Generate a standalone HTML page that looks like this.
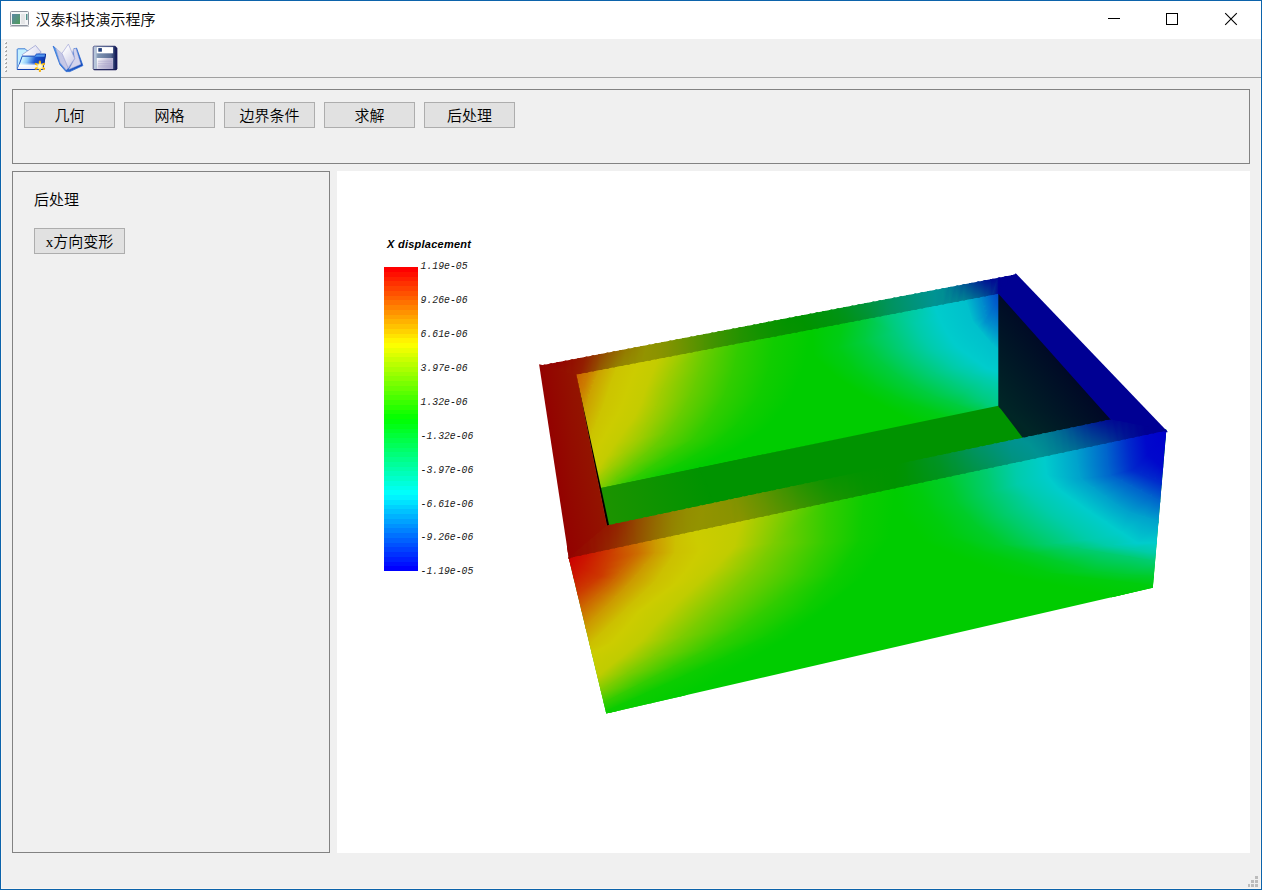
<!DOCTYPE html>
<html lang="zh-CN">
<head>
<meta charset="utf-8">
<title>汉泰科技演示程序</title>
<style>
html,body{margin:0;padding:0;}
body{width:1262px;height:890px;overflow:hidden;background:#f0f0f0;position:relative;
  font-family:"Liberation Serif","Noto Sans CJK SC",sans-serif;font-size:15px;color:#000;}
.abs{position:absolute;}
#win{position:absolute;left:0;top:0;width:1260px;height:888px;border:1px solid #0c63ab;background:#f0f0f0;box-shadow:inset 0 0 0 1px #faf6f1;}
#titlebar{position:absolute;left:1px;top:1px;width:1260px;height:38px;background:#fff;}
#title{position:absolute;left:34.5px;top:9px;height:20px;line-height:20px;font-size:15px;white-space:nowrap;
  font-family:"Liberation Sans","Noto Sans CJK SC",sans-serif;letter-spacing:0;font-weight:350;}
#toolbar{position:absolute;left:1px;top:39px;width:1260px;height:38px;background:#f0f0f0;border-bottom:1px solid #a0a0a0;}
.frame{position:absolute;border:1px solid #828282;box-sizing:border-box;background:#f0f0f0;}
.btn{position:absolute;box-sizing:border-box;border:1px solid #adadad;background:#e1e1e1;height:26px;width:91px;
  text-align:center;line-height:24px;padding-top:1px;font-size:15px;white-space:nowrap;font-weight:350;}
#view{position:absolute;left:337px;top:171px;width:913px;height:682px;background:#fff;overflow:hidden;}
.lbl{position:absolute;white-space:nowrap;font-size:15px;line-height:20px;font-weight:350;}
</style>
</head>
<body>
<div id="win"></div>
<div id="titlebar">
  <svg class="abs" style="left:9px;top:10px" width="20" height="17" viewBox="0 0 20 17">
    <defs><linearGradient id="ig" x1="0" y1="0" x2="1" y2="1"><stop offset="0" stop-color="#5b86a6"/><stop offset="1" stop-color="#4f9d5a"/></linearGradient></defs>
    <rect x="0.5" y="0.5" width="18" height="14" rx="1" fill="#f4f5f7" stroke="#8d939e"/>
    <rect x="2" y="3" width="8" height="10" fill="url(#ig)"/>
    <rect x="11" y="3" width="4" height="10" fill="#e4e5e7"/>
    <rect x="16" y="3" width="1.5" height="6" fill="#4f8f8a"/>
    <rect x="0" y="15" width="19" height="1" fill="#c9ccd2"/>
  </svg>
  <div id="title">汉泰科技演示程序</div>
  <svg class="abs" style="left:1100px;top:0" width="160" height="38" viewBox="1101 1 160 38" shape-rendering="crispEdges">
    <rect x="1108" y="18" width="12" height="1" fill="#000"/>
    <rect x="1166.5" y="13.5" width="11" height="11" fill="none" stroke="#000" stroke-width="1"/>
    <path d="M1225.2 13.2L1236.8 24.8M1236.8 13.2L1225.2 24.8" stroke="#000" stroke-width="1.1" fill="none" shape-rendering="geometricPrecision"/>
  </svg>
</div>
<div id="toolbar">
  <svg class="abs" style="left:0;top:0" width="140" height="38" viewBox="1 39 140 38">
    <defs>
      <linearGradient id="fo1" x1="22" y1="58" x2="44" y2="66" gradientUnits="userSpaceOnUse">
        <stop offset="0" stop-color="#d8fbff"/><stop offset="0.25" stop-color="#8cc8f8"/><stop offset="0.55" stop-color="#1c56d0"/><stop offset="1" stop-color="#0a30a8"/>
      </linearGradient>
      <linearGradient id="fo2" x1="0" y1="54" x2="0" y2="70" gradientUnits="userSpaceOnUse">
        <stop offset="0" stop-color="#fff" stop-opacity="0"/><stop offset="0.55" stop-color="#fff" stop-opacity="0"/><stop offset="0.72" stop-color="#fff" stop-opacity="0.95"/><stop offset="1" stop-color="#e8e8f4" stop-opacity="1"/>
      </linearGradient>
      <linearGradient id="fo3" x1="24" y1="50" x2="40" y2="54" gradientUnits="userSpaceOnUse">
        <stop offset="0" stop-color="#ffffff"/><stop offset="1" stop-color="#dcdcf0"/>
      </linearGradient>
      <radialGradient id="st" cx="39.9" cy="66.3" r="5.4" gradientUnits="userSpaceOnUse">
        <stop offset="0" stop-color="#ffffff"/><stop offset="0.35" stop-color="#fff0a0"/><stop offset="0.7" stop-color="#ffc818"/><stop offset="1" stop-color="#f0a000"/>
      </radialGradient>
      <linearGradient id="bk1" x1="53" y1="48" x2="83" y2="68" gradientUnits="userSpaceOnUse">
        <stop offset="0" stop-color="#4fa0ee"/><stop offset="0.5" stop-color="#3f7fdc"/><stop offset="1" stop-color="#0a3cb0"/>
      </linearGradient>
      <linearGradient id="bk2" x1="62" y1="50" x2="75" y2="62" gradientUnits="userSpaceOnUse">
        <stop offset="0" stop-color="#ffffff"/><stop offset="1" stop-color="#cfcfe8"/>
      </linearGradient>
      <linearGradient id="fl1" x1="93" y1="0" x2="117" y2="0" gradientUnits="userSpaceOnUse">
        <stop offset="0" stop-color="#8c98b8"/><stop offset="0.08" stop-color="#c4d2e4"/><stop offset="0.2" stop-color="#8096b4"/><stop offset="0.75" stop-color="#5a6c94"/><stop offset="0.92" stop-color="#1c2860"/><stop offset="1" stop-color="#0c0c50"/>
      </linearGradient>
      <linearGradient id="fl2" x1="97" y1="58" x2="113" y2="69" gradientUnits="userSpaceOnUse">
        <stop offset="0" stop-color="#ffffff"/><stop offset="0.5" stop-color="#c8c4dc"/><stop offset="1" stop-color="#a8a0c8"/>
      </linearGradient>
    </defs>
    <!-- handle -->
    <g shape-rendering="crispEdges">
      <rect x="4" y="41" width="3" height="3" fill="#f9f9f9"/><path d="M6 42h1v2h-2v-1h1z" fill="#ababab"/>
      <rect x="4" y="45" width="3" height="3" fill="#f9f9f9"/><path d="M6 46h1v2h-2v-1h1z" fill="#ababab"/>
      <rect x="4" y="49" width="3" height="3" fill="#f9f9f9"/><path d="M6 50h1v2h-2v-1h1z" fill="#ababab"/>
      <rect x="4" y="53" width="3" height="3" fill="#f9f9f9"/><path d="M6 54h1v2h-2v-1h1z" fill="#ababab"/>
      <rect x="4" y="57" width="3" height="3" fill="#f9f9f9"/><path d="M6 58h1v2h-2v-1h1z" fill="#ababab"/>
      <rect x="4" y="61" width="3" height="3" fill="#f9f9f9"/><path d="M6 62h1v2h-2v-1h1z" fill="#ababab"/>
      <rect x="4" y="65" width="3" height="3" fill="#f9f9f9"/><path d="M6 66h1v2h-2v-1h1z" fill="#ababab"/>
      <rect x="4" y="69" width="3" height="3" fill="#f9f9f9"/><path d="M6 70h1v2h-2v-1h1z" fill="#ababab"/>
    </g>
    <!-- new folder icon -->
    <path d="M17.2 49.6Q17.2 48.8 18 48.8H25.2L27.2 50.8H35V69.4H17.2Z" fill="#c4efff" stroke="#2f6fd0" stroke-width="0.9" stroke-linejoin="round"/>
    <path d="M22.2 54.7L35.5 45.4L41.2 52.2L35.2 56.2H23Z" fill="url(#fo3)" stroke="#9aa0d0" stroke-width="0.8" stroke-linejoin="round"/>
    <path d="M22.2 56.2H34.4L36.6 54H45.6L42.8 69.5H17.4Z" fill="url(#fo1)" stroke="#1c50c0" stroke-width="1" stroke-linejoin="round"/>
    <path d="M22.2 56.2H34.4L36.6 54H45.6L42.8 69.5H17.4Z" fill="url(#fo2)"/>
    <path d="M36.9 54.5H45.4L45 56.8H34.9Z" fill="#5a9ff2" opacity="0.9"/>
    <path d="M17.4 69.5H42.8" stroke="#1040b0" stroke-width="1"/>
    <path d="M45.6 54L42.8 69.5" stroke="#0a2c98" stroke-width="1"/>
    <g stroke="url(#st)" stroke-width="2.2" stroke-linecap="round">
      <path d="M39.9 61.6V71"/><path d="M35.8 63.9L44 68.7"/><path d="M35.8 68.7L44 63.9"/>
    </g>
    <circle cx="39.9" cy="66.3" r="1.9" fill="#fffbe0"/>
    <!-- book icon -->
    <path d="M53.1 46.1L60 64.8L66 71.6H69.8L82.9 65.6L76.6 48.2L73.8 48.8L69 69L55.6 48.2Z" fill="url(#bk1)" stroke="#2a6ad4" stroke-width="0.8" stroke-linejoin="round"/>
    <path d="M55.7 48.1L61.8 53.3L68.2 67.9L66.2 70L60.2 62.8Z" fill="#c6c8e6" stroke="#a8acd8" stroke-width="0.5"/>
    <path d="M73.1 49.3L75.9 48.5L80.8 64.3L69 69.2L74.7 58.6Z" fill="#d4d4ec" stroke="#a8acd8" stroke-width="0.5"/>
    <path d="M68.4 44.1L74.7 58.6L68.2 67.9L62 53.3Z" fill="url(#bk2)" stroke="#a4a8d8" stroke-width="0.7" stroke-linejoin="round"/>
    <!-- floppy icon -->
    <path d="M94 46.1H115.2L117.1 48V69L116 69.9H94.2L93.1 68.8V47Z" fill="url(#fl1)" stroke="#30306c" stroke-width="0.6"/>
    <rect x="96.7" y="47.1" width="16.4" height="6.2" fill="#ffffff"/>
    <rect x="98.3" y="48.1" width="3.6" height="3.6" fill="#24407c"/>
    <rect x="96.7" y="58" width="16.4" height="11" fill="url(#fl2)"/>
    <path d="M98 61.2H112M98 63.3H112M98 65.2H112M98 66.9H112" stroke="#a098c4" stroke-width="0.5"/>
    <path d="M93.6 69.6H116.6" stroke="#181850" stroke-width="0.9"/>
  </svg>
</div>
<div class="frame" style="left:12px;top:89px;width:1238px;height:75px;"></div>
<div class="btn" style="left:24px;top:102px;">几何</div>
<div class="btn" style="left:124px;top:102px;">网格</div>
<div class="btn" style="left:224px;top:102px;">边界条件</div>
<div class="btn" style="left:324px;top:102px;">求解</div>
<div class="btn" style="left:424px;top:102px;">后处理</div>
<div class="frame" style="left:12px;top:171px;width:318px;height:682px;"></div>
<div class="lbl" style="left:34px;top:190px;">后处理</div>
<div class="btn" style="left:34px;top:228px;">x方向变形</div>
<svg class="abs" style="left:1246px;top:874px" width="14" height="14" viewBox="1246 874 14 14" shape-rendering="crispEdges">
  <g fill="#bcbcbc">
    <rect x="1255" y="876" width="3" height="3"/>
    <rect x="1251" y="880" width="3" height="3"/><rect x="1255" y="880" width="3" height="3"/>
    <rect x="1248" y="884" width="2" height="3"/><rect x="1251" y="884" width="3" height="3"/><rect x="1255" y="884" width="3" height="3"/>
  </g>
</svg>
<div id="view">
<svg class="abs" style="left:0;top:0" width="913" height="682" viewBox="337 171 913 682">
<defs>
<clipPath id="c1"><polygon points="574.9,373.6 999.5,292.2 999.5,406.8 599.8,489.5"/></clipPath>
<linearGradient id="g2" gradientUnits="userSpaceOnUse" x1="587.19" y1="374.81" x2="577.20" y2="371.65"><stop offset="0.000" stop-color="#cc7a00"/><stop offset="1.000" stop-color="#cc6200"/></linearGradient>
<linearGradient id="g3" gradientUnits="userSpaceOnUse" x1="586.39" y1="377.36" x2="576.40" y2="374.19"><stop offset="0.000" stop-color="#cc7a00"/><stop offset="1.000" stop-color="#cc6200"/></linearGradient>
<linearGradient id="g4" gradientUnits="userSpaceOnUse" x1="585.58" y1="379.90" x2="575.59" y2="376.74"><stop offset="0.000" stop-color="#cc7a00"/><stop offset="1.000" stop-color="#cc6200"/></linearGradient>
<linearGradient id="g5" gradientUnits="userSpaceOnUse" x1="584.77" y1="382.45" x2="574.78" y2="379.29"><stop offset="0.000" stop-color="#cc7a00"/><stop offset="1.000" stop-color="#cc6200"/></linearGradient>
<linearGradient id="g6" gradientUnits="userSpaceOnUse" x1="583.95" y1="384.99" x2="573.95" y2="381.74"><stop offset="0.000" stop-color="#cc7a00"/><stop offset="1.000" stop-color="#cc6200"/></linearGradient>
<linearGradient id="g7" gradientUnits="userSpaceOnUse" x1="582.65" y1="387.33" x2="572.35" y2="381.61"><stop offset="0.000" stop-color="#cc7a00"/><stop offset="1.000" stop-color="#cc6200"/></linearGradient>
<linearGradient id="g8" gradientUnits="userSpaceOnUse" x1="581.36" y1="389.66" x2="571.06" y2="383.95"><stop offset="0.000" stop-color="#cc7a00"/><stop offset="1.000" stop-color="#cc6200"/></linearGradient>
<linearGradient id="g9" gradientUnits="userSpaceOnUse" x1="580.06" y1="392.00" x2="569.76" y2="386.28"><stop offset="0.000" stop-color="#cc7a00"/><stop offset="1.000" stop-color="#cc6200"/></linearGradient>
<linearGradient id="g10" gradientUnits="userSpaceOnUse" x1="600.00" y1="369.96" x2="589.75" y2="366.72"><stop offset="0.000" stop-color="#cca300"/><stop offset="1.000" stop-color="#cc7a00"/></linearGradient>
<linearGradient id="g11" gradientUnits="userSpaceOnUse" x1="597.87" y1="375.27" x2="588.52" y2="371.51"><stop offset="0.000" stop-color="#cca300"/><stop offset="1.000" stop-color="#cc7a00"/></linearGradient>
<linearGradient id="g12" gradientUnits="userSpaceOnUse" x1="597.87" y1="375.27" x2="588.03" y2="372.15"><stop offset="0.000" stop-color="#cca300"/><stop offset="1.000" stop-color="#cc7a00"/></linearGradient>
<linearGradient id="g13" gradientUnits="userSpaceOnUse" x1="595.74" y1="380.57" x2="586.57" y2="376.89"><stop offset="0.000" stop-color="#cca300"/><stop offset="1.000" stop-color="#cc7a00"/></linearGradient>
<linearGradient id="g14" gradientUnits="userSpaceOnUse" x1="595.74" y1="380.57" x2="586.31" y2="377.59"><stop offset="0.000" stop-color="#cca300"/><stop offset="1.000" stop-color="#cc7a00"/></linearGradient>
<linearGradient id="g15" gradientUnits="userSpaceOnUse" x1="593.66" y1="385.90" x2="584.62" y2="382.38"><stop offset="0.000" stop-color="#cca300"/><stop offset="1.000" stop-color="#cc7a00"/></linearGradient>
<linearGradient id="g16" gradientUnits="userSpaceOnUse" x1="593.66" y1="385.90" x2="584.59" y2="383.03"><stop offset="0.000" stop-color="#cca300"/><stop offset="1.000" stop-color="#cc7a00"/></linearGradient>
<linearGradient id="g17" gradientUnits="userSpaceOnUse" x1="591.85" y1="391.32" x2="582.82" y2="388.29"><stop offset="0.000" stop-color="#cca300"/><stop offset="1.000" stop-color="#cc7a00"/></linearGradient>
<linearGradient id="g18" gradientUnits="userSpaceOnUse" x1="591.85" y1="391.32" x2="582.84" y2="388.39"><stop offset="0.000" stop-color="#cca300"/><stop offset="1.000" stop-color="#cc7a00"/></linearGradient>
<linearGradient id="g19" gradientUnits="userSpaceOnUse" x1="590.03" y1="396.74" x2="581.02" y2="393.72"><stop offset="0.000" stop-color="#cca300"/><stop offset="1.000" stop-color="#cc7a00"/></linearGradient>
<linearGradient id="g20" gradientUnits="userSpaceOnUse" x1="590.03" y1="396.74" x2="580.40" y2="391.39"><stop offset="0.000" stop-color="#cca300"/><stop offset="1.000" stop-color="#cc7a00"/></linearGradient>
<linearGradient id="g21" gradientUnits="userSpaceOnUse" x1="588.21" y1="402.16" x2="578.74" y2="398.98"><stop offset="0.000" stop-color="#cca300"/><stop offset="1.000" stop-color="#cc7a00"/></linearGradient>
<linearGradient id="g22" gradientUnits="userSpaceOnUse" x1="588.21" y1="402.16" x2="577.67" y2="396.31"><stop offset="0.000" stop-color="#cca300"/><stop offset="1.000" stop-color="#cc7a00"/></linearGradient>
<linearGradient id="g23" gradientUnits="userSpaceOnUse" x1="586.39" y1="407.58" x2="576.46" y2="404.25"><stop offset="0.000" stop-color="#cca300"/><stop offset="1.000" stop-color="#cc7a00"/></linearGradient>
<linearGradient id="g24" gradientUnits="userSpaceOnUse" x1="586.39" y1="407.58" x2="574.94" y2="401.22"><stop offset="0.000" stop-color="#cca300"/><stop offset="1.000" stop-color="#cc7a00"/></linearGradient>
<linearGradient id="g25" gradientUnits="userSpaceOnUse" x1="584.57" y1="413.00" x2="574.18" y2="409.51"><stop offset="0.000" stop-color="#cca300"/><stop offset="1.000" stop-color="#cc7a00"/></linearGradient>
<linearGradient id="g26" gradientUnits="userSpaceOnUse" x1="618.00" y1="366.52" x2="603.69" y2="360.77"><stop offset="0.000" stop-color="#ccc400"/><stop offset="1.000" stop-color="#cca300"/></linearGradient>
<linearGradient id="g27" gradientUnits="userSpaceOnUse" x1="614.51" y1="375.69" x2="599.83" y2="370.10"><stop offset="0.000" stop-color="#ccc400"/><stop offset="1.000" stop-color="#cca300"/></linearGradient>
<linearGradient id="g28" gradientUnits="userSpaceOnUse" x1="614.51" y1="375.69" x2="600.03" y2="369.88"><stop offset="0.000" stop-color="#ccc400"/><stop offset="1.000" stop-color="#cca300"/></linearGradient>
<linearGradient id="g29" gradientUnits="userSpaceOnUse" x1="611.01" y1="384.87" x2="596.24" y2="379.24"><stop offset="0.000" stop-color="#ccc400"/><stop offset="1.000" stop-color="#cca300"/></linearGradient>
<linearGradient id="g30" gradientUnits="userSpaceOnUse" x1="611.01" y1="384.87" x2="596.30" y2="379.14"><stop offset="0.000" stop-color="#ccc400"/><stop offset="1.000" stop-color="#cca300"/></linearGradient>
<linearGradient id="g31" gradientUnits="userSpaceOnUse" x1="607.91" y1="394.18" x2="592.60" y2="389.08"><stop offset="0.000" stop-color="#ccc400"/><stop offset="1.000" stop-color="#cca300"/></linearGradient>
<linearGradient id="g32" gradientUnits="userSpaceOnUse" x1="607.91" y1="394.18" x2="592.61" y2="389.05"><stop offset="0.000" stop-color="#ccc400"/><stop offset="1.000" stop-color="#cca300"/></linearGradient>
<linearGradient id="g33" gradientUnits="userSpaceOnUse" x1="604.80" y1="403.49" x2="589.49" y2="398.39"><stop offset="0.000" stop-color="#ccc400"/><stop offset="1.000" stop-color="#cca300"/></linearGradient>
<linearGradient id="g34" gradientUnits="userSpaceOnUse" x1="604.80" y1="403.49" x2="589.48" y2="398.35"><stop offset="0.000" stop-color="#ccc400"/><stop offset="1.000" stop-color="#cca300"/></linearGradient>
<linearGradient id="g35" gradientUnits="userSpaceOnUse" x1="601.63" y1="412.79" x2="586.33" y2="407.57"><stop offset="0.000" stop-color="#ccc400"/><stop offset="1.000" stop-color="#cca300"/></linearGradient>
<linearGradient id="g36" gradientUnits="userSpaceOnUse" x1="601.63" y1="412.79" x2="586.36" y2="407.66"><stop offset="0.000" stop-color="#ccc400"/><stop offset="1.000" stop-color="#cca300"/></linearGradient>
<linearGradient id="g37" gradientUnits="userSpaceOnUse" x1="597.88" y1="421.86" x2="582.66" y2="415.56"><stop offset="0.000" stop-color="#ccc400"/><stop offset="1.000" stop-color="#cca300"/></linearGradient>
<linearGradient id="g38" gradientUnits="userSpaceOnUse" x1="597.88" y1="421.86" x2="583.25" y2="416.95"><stop offset="0.000" stop-color="#ccc400"/><stop offset="1.000" stop-color="#cca300"/></linearGradient>
<linearGradient id="g39" gradientUnits="userSpaceOnUse" x1="594.12" y1="430.93" x2="579.27" y2="424.78"><stop offset="0.000" stop-color="#ccc400"/><stop offset="1.000" stop-color="#cca300"/></linearGradient>
<linearGradient id="g40" gradientUnits="userSpaceOnUse" x1="594.12" y1="430.93" x2="580.13" y2="426.23"><stop offset="0.000" stop-color="#ccc400"/><stop offset="1.000" stop-color="#cca300"/></linearGradient>
<linearGradient id="g41" gradientUnits="userSpaceOnUse" x1="590.37" y1="440.00" x2="575.88" y2="434.00"><stop offset="0.000" stop-color="#ccc400"/><stop offset="1.000" stop-color="#cca300"/></linearGradient>
<linearGradient id="g42" gradientUnits="userSpaceOnUse" x1="658.00" y1="358.86" x2="625.61" y2="346.52"><stop offset="0.000" stop-color="#c4cc00"/><stop offset="0.500" stop-color="#cccc00"/><stop offset="1.000" stop-color="#ccc400"/></linearGradient>
<linearGradient id="g43" gradientUnits="userSpaceOnUse" x1="651.78" y1="373.59" x2="620.90" y2="360.55"><stop offset="0.000" stop-color="#c4cc00"/><stop offset="0.500" stop-color="#cccc00"/><stop offset="1.000" stop-color="#ccc400"/></linearGradient>
<linearGradient id="g44" gradientUnits="userSpaceOnUse" x1="651.78" y1="373.59" x2="619.92" y2="361.46"><stop offset="0.000" stop-color="#c4cc00"/><stop offset="0.500" stop-color="#cccc00"/><stop offset="1.000" stop-color="#ccc400"/></linearGradient>
<linearGradient id="g45" gradientUnits="userSpaceOnUse" x1="645.82" y1="388.43" x2="614.61" y2="375.91"><stop offset="0.000" stop-color="#c4cc00"/><stop offset="0.500" stop-color="#cccc00"/><stop offset="1.000" stop-color="#ccc400"/></linearGradient>
<linearGradient id="g46" gradientUnits="userSpaceOnUse" x1="645.82" y1="388.43" x2="613.43" y2="377.63"><stop offset="0.000" stop-color="#c4cc00"/><stop offset="0.500" stop-color="#cccc00"/><stop offset="1.000" stop-color="#ccc400"/></linearGradient>
<linearGradient id="g47" gradientUnits="userSpaceOnUse" x1="640.76" y1="403.61" x2="608.36" y2="392.81"><stop offset="0.000" stop-color="#c4cc00"/><stop offset="0.500" stop-color="#cccc00"/><stop offset="1.000" stop-color="#ccc400"/></linearGradient>
<linearGradient id="g48" gradientUnits="userSpaceOnUse" x1="640.76" y1="403.61" x2="608.36" y2="392.81"><stop offset="0.000" stop-color="#c4cc00"/><stop offset="0.500" stop-color="#cccc00"/><stop offset="1.000" stop-color="#ccc400"/></linearGradient>
<linearGradient id="g49" gradientUnits="userSpaceOnUse" x1="633.68" y1="417.73" x2="604.90" y2="403.30"><stop offset="0.000" stop-color="#c4cc00"/><stop offset="0.500" stop-color="#cccc00"/><stop offset="1.000" stop-color="#ccc400"/></linearGradient>
<linearGradient id="g50" gradientUnits="userSpaceOnUse" x1="633.68" y1="417.73" x2="603.46" y2="407.42"><stop offset="0.000" stop-color="#c4cc00"/><stop offset="0.500" stop-color="#cccc00"/><stop offset="1.000" stop-color="#ccc400"/></linearGradient>
<linearGradient id="g51" gradientUnits="userSpaceOnUse" x1="624.16" y1="430.58" x2="601.10" y2="413.50"><stop offset="0.000" stop-color="#c4cc00"/><stop offset="0.500" stop-color="#cccc00"/><stop offset="1.000" stop-color="#ccc400"/></linearGradient>
<linearGradient id="g52" gradientUnits="userSpaceOnUse" x1="624.16" y1="430.58" x2="598.64" y2="420.02"><stop offset="0.000" stop-color="#c4cc00"/><stop offset="0.500" stop-color="#cccc00"/><stop offset="1.000" stop-color="#ccc400"/></linearGradient>
<linearGradient id="g53" gradientUnits="userSpaceOnUse" x1="614.86" y1="443.59" x2="593.34" y2="428.21"><stop offset="0.000" stop-color="#c4cc00"/><stop offset="0.500" stop-color="#cccc00"/><stop offset="1.000" stop-color="#ccc400"/></linearGradient>
<linearGradient id="g54" gradientUnits="userSpaceOnUse" x1="614.86" y1="443.59" x2="592.68" y2="434.41"><stop offset="0.000" stop-color="#c4cc00"/><stop offset="0.500" stop-color="#cccc00"/><stop offset="1.000" stop-color="#ccc400"/></linearGradient>
<linearGradient id="g55" gradientUnits="userSpaceOnUse" x1="605.96" y1="456.89" x2="585.79" y2="443.39"><stop offset="0.000" stop-color="#c4cc00"/><stop offset="0.500" stop-color="#cccc00"/><stop offset="1.000" stop-color="#ccc400"/></linearGradient>
<linearGradient id="g56" gradientUnits="userSpaceOnUse" x1="605.96" y1="456.89" x2="586.68" y2="448.91"><stop offset="0.000" stop-color="#c4cc00"/><stop offset="0.500" stop-color="#cccc00"/><stop offset="1.000" stop-color="#ccc400"/></linearGradient>
<linearGradient id="g57" gradientUnits="userSpaceOnUse" x1="596.81" y1="470.00" x2="578.40" y2="457.15"><stop offset="0.000" stop-color="#c4cc00"/><stop offset="0.500" stop-color="#cccc00"/><stop offset="1.000" stop-color="#ccc400"/></linearGradient>
<linearGradient id="g58" gradientUnits="userSpaceOnUse" x1="680.00" y1="354.64" x2="662.84" y2="347.40"><stop offset="0.000" stop-color="#9fcc00"/><stop offset="1.000" stop-color="#c4cc00"/></linearGradient>
<linearGradient id="g59" gradientUnits="userSpaceOnUse" x1="671.62" y1="371.55" x2="656.50" y2="364.06"><stop offset="0.000" stop-color="#9fcc00"/><stop offset="1.000" stop-color="#c4cc00"/></linearGradient>
<linearGradient id="g60" gradientUnits="userSpaceOnUse" x1="671.62" y1="371.55" x2="655.23" y2="364.98"><stop offset="0.000" stop-color="#9fcc00"/><stop offset="1.000" stop-color="#c4cc00"/></linearGradient>
<linearGradient id="g61" gradientUnits="userSpaceOnUse" x1="663.74" y1="388.67" x2="648.86" y2="381.82"><stop offset="0.000" stop-color="#9fcc00"/><stop offset="1.000" stop-color="#c4cc00"/></linearGradient>
<linearGradient id="g62" gradientUnits="userSpaceOnUse" x1="663.74" y1="388.67" x2="647.54" y2="383.27"><stop offset="0.000" stop-color="#9fcc00"/><stop offset="1.000" stop-color="#c4cc00"/></linearGradient>
<linearGradient id="g63" gradientUnits="userSpaceOnUse" x1="657.78" y1="406.57" x2="641.58" y2="401.17"><stop offset="0.000" stop-color="#9fcc00"/><stop offset="1.000" stop-color="#c4cc00"/></linearGradient>
<linearGradient id="g64" gradientUnits="userSpaceOnUse" x1="657.78" y1="406.57" x2="643.00" y2="399.15"><stop offset="0.000" stop-color="#9fcc00"/><stop offset="1.000" stop-color="#c4cc00"/></linearGradient>
<linearGradient id="g65" gradientUnits="userSpaceOnUse" x1="648.94" y1="423.11" x2="634.83" y2="415.57"><stop offset="0.000" stop-color="#9fcc00"/><stop offset="1.000" stop-color="#c4cc00"/></linearGradient>
<linearGradient id="g66" gradientUnits="userSpaceOnUse" x1="648.94" y1="423.11" x2="636.51" y2="413.91"><stop offset="0.000" stop-color="#9fcc00"/><stop offset="1.000" stop-color="#c4cc00"/></linearGradient>
<linearGradient id="g67" gradientUnits="userSpaceOnUse" x1="638.85" y1="439.05" x2="624.54" y2="429.99"><stop offset="0.000" stop-color="#9fcc00"/><stop offset="1.000" stop-color="#c4cc00"/></linearGradient>
<linearGradient id="g68" gradientUnits="userSpaceOnUse" x1="638.85" y1="439.05" x2="625.12" y2="429.24"><stop offset="0.000" stop-color="#9fcc00"/><stop offset="1.000" stop-color="#c4cc00"/></linearGradient>
<linearGradient id="g69" gradientUnits="userSpaceOnUse" x1="625.48" y1="452.37" x2="615.80" y2="442.65"><stop offset="0.000" stop-color="#9fcc00"/><stop offset="1.000" stop-color="#c4cc00"/></linearGradient>
<linearGradient id="g70" gradientUnits="userSpaceOnUse" x1="625.48" y1="452.37" x2="614.09" y2="444.74"><stop offset="0.000" stop-color="#9fcc00"/><stop offset="1.000" stop-color="#c4cc00"/></linearGradient>
<linearGradient id="g71" gradientUnits="userSpaceOnUse" x1="612.12" y1="465.68" x2="604.65" y2="458.19"><stop offset="0.000" stop-color="#9fcc00"/><stop offset="1.000" stop-color="#c4cc00"/></linearGradient>
<linearGradient id="g72" gradientUnits="userSpaceOnUse" x1="612.12" y1="465.68" x2="603.85" y2="459.92"><stop offset="0.000" stop-color="#9fcc00"/><stop offset="1.000" stop-color="#c4cc00"/></linearGradient>
<linearGradient id="g73" gradientUnits="userSpaceOnUse" x1="598.75" y1="479.00" x2="593.28" y2="473.51"><stop offset="0.000" stop-color="#9fcc00"/><stop offset="1.000" stop-color="#c4cc00"/></linearGradient>
<linearGradient id="g74" gradientUnits="userSpaceOnUse" x1="707.00" y1="349.47" x2="687.38" y2="339.75"><stop offset="0.000" stop-color="#66cc00"/><stop offset="1.000" stop-color="#9fcc00"/></linearGradient>
<linearGradient id="g75" gradientUnits="userSpaceOnUse" x1="700.48" y1="371.48" x2="673.97" y2="363.62"><stop offset="0.000" stop-color="#66cc00"/><stop offset="1.000" stop-color="#9fcc00"/></linearGradient>
<linearGradient id="g76" gradientUnits="userSpaceOnUse" x1="700.48" y1="371.48" x2="676.69" y2="360.53"><stop offset="0.000" stop-color="#66cc00"/><stop offset="1.000" stop-color="#9fcc00"/></linearGradient>
<linearGradient id="g77" gradientUnits="userSpaceOnUse" x1="692.50" y1="392.90" x2="665.86" y2="382.98"><stop offset="0.000" stop-color="#66cc00"/><stop offset="1.000" stop-color="#9fcc00"/></linearGradient>
<linearGradient id="g78" gradientUnits="userSpaceOnUse" x1="692.50" y1="392.90" x2="665.35" y2="383.85"><stop offset="0.000" stop-color="#66cc00"/><stop offset="1.000" stop-color="#9fcc00"/></linearGradient>
<linearGradient id="g79" gradientUnits="userSpaceOnUse" x1="682.02" y1="413.30" x2="660.11" y2="402.04"><stop offset="0.000" stop-color="#66cc00"/><stop offset="1.000" stop-color="#9fcc00"/></linearGradient>
<linearGradient id="g80" gradientUnits="userSpaceOnUse" x1="682.02" y1="413.30" x2="660.36" y2="401.73"><stop offset="0.000" stop-color="#66cc00"/><stop offset="1.000" stop-color="#9fcc00"/></linearGradient>
<linearGradient id="g81" gradientUnits="userSpaceOnUse" x1="668.81" y1="432.06" x2="651.31" y2="419.75"><stop offset="0.000" stop-color="#66cc00"/><stop offset="1.000" stop-color="#9fcc00"/></linearGradient>
<linearGradient id="g82" gradientUnits="userSpaceOnUse" x1="668.81" y1="432.06" x2="650.58" y2="420.52"><stop offset="0.000" stop-color="#66cc00"/><stop offset="1.000" stop-color="#9fcc00"/></linearGradient>
<linearGradient id="g83" gradientUnits="userSpaceOnUse" x1="652.83" y1="448.29" x2="641.12" y2="436.75"><stop offset="0.000" stop-color="#66cc00"/><stop offset="1.000" stop-color="#9fcc00"/></linearGradient>
<linearGradient id="g84" gradientUnits="userSpaceOnUse" x1="652.83" y1="448.29" x2="641.25" y2="436.66"><stop offset="0.000" stop-color="#66cc00"/><stop offset="1.000" stop-color="#9fcc00"/></linearGradient>
<linearGradient id="g85" gradientUnits="userSpaceOnUse" x1="635.27" y1="463.05" x2="625.95" y2="451.97"><stop offset="0.000" stop-color="#66cc00"/><stop offset="1.000" stop-color="#9fcc00"/></linearGradient>
<linearGradient id="g86" gradientUnits="userSpaceOnUse" x1="635.27" y1="463.05" x2="625.05" y2="452.80"><stop offset="0.000" stop-color="#66cc00"/><stop offset="1.000" stop-color="#9fcc00"/></linearGradient>
<linearGradient id="g87" gradientUnits="userSpaceOnUse" x1="617.53" y1="477.60" x2="609.51" y2="467.83"><stop offset="0.000" stop-color="#66cc00"/><stop offset="1.000" stop-color="#9fcc00"/></linearGradient>
<linearGradient id="g88" gradientUnits="userSpaceOnUse" x1="617.53" y1="477.60" x2="608.87" y2="468.92"><stop offset="0.000" stop-color="#66cc00"/><stop offset="1.000" stop-color="#9fcc00"/></linearGradient>
<linearGradient id="g89" gradientUnits="userSpaceOnUse" x1="601.97" y1="494.00" x2="592.78" y2="485.28"><stop offset="0.000" stop-color="#66cc00"/><stop offset="1.000" stop-color="#9fcc00"/></linearGradient>
<linearGradient id="g90" gradientUnits="userSpaceOnUse" x1="740.00" y1="343.16" x2="711.39" y2="334.68"><stop offset="0.000" stop-color="#31cc00"/><stop offset="1.000" stop-color="#66cc00"/></linearGradient>
<linearGradient id="g91" gradientUnits="userSpaceOnUse" x1="734.24" y1="369.86" x2="702.31" y2="362.97"><stop offset="0.000" stop-color="#31cc00"/><stop offset="1.000" stop-color="#66cc00"/></linearGradient>
<linearGradient id="g92" gradientUnits="userSpaceOnUse" x1="734.24" y1="369.86" x2="705.12" y2="359.01"><stop offset="0.000" stop-color="#31cc00"/><stop offset="1.000" stop-color="#66cc00"/></linearGradient>
<linearGradient id="g93" gradientUnits="userSpaceOnUse" x1="725.21" y1="395.32" x2="695.39" y2="384.74"><stop offset="0.000" stop-color="#31cc00"/><stop offset="1.000" stop-color="#66cc00"/></linearGradient>
<linearGradient id="g94" gradientUnits="userSpaceOnUse" x1="725.21" y1="395.32" x2="698.35" y2="381.52"><stop offset="0.000" stop-color="#31cc00"/><stop offset="1.000" stop-color="#66cc00"/></linearGradient>
<linearGradient id="g95" gradientUnits="userSpaceOnUse" x1="710.88" y1="418.49" x2="687.68" y2="404.14"><stop offset="0.000" stop-color="#31cc00"/><stop offset="1.000" stop-color="#66cc00"/></linearGradient>
<linearGradient id="g96" gradientUnits="userSpaceOnUse" x1="710.88" y1="418.49" x2="689.13" y2="403.19"><stop offset="0.000" stop-color="#31cc00"/><stop offset="1.000" stop-color="#66cc00"/></linearGradient>
<linearGradient id="g97" gradientUnits="userSpaceOnUse" x1="693.78" y1="439.70" x2="674.91" y2="424.49"><stop offset="0.000" stop-color="#31cc00"/><stop offset="1.000" stop-color="#66cc00"/></linearGradient>
<linearGradient id="g98" gradientUnits="userSpaceOnUse" x1="693.78" y1="439.70" x2="677.29" y2="423.45"><stop offset="0.000" stop-color="#31cc00"/><stop offset="1.000" stop-color="#66cc00"/></linearGradient>
<linearGradient id="g99" gradientUnits="userSpaceOnUse" x1="670.95" y1="454.68" x2="662.57" y2="441.90"><stop offset="0.000" stop-color="#31cc00"/><stop offset="1.000" stop-color="#66cc00"/></linearGradient>
<linearGradient id="g100" gradientUnits="userSpaceOnUse" x1="670.95" y1="454.68" x2="660.30" y2="442.01"><stop offset="0.000" stop-color="#31cc00"/><stop offset="1.000" stop-color="#66cc00"/></linearGradient>
<linearGradient id="g101" gradientUnits="userSpaceOnUse" x1="648.03" y1="469.53" x2="641.30" y2="459.14"><stop offset="0.000" stop-color="#31cc00"/><stop offset="1.000" stop-color="#66cc00"/></linearGradient>
<linearGradient id="g102" gradientUnits="userSpaceOnUse" x1="648.03" y1="469.53" x2="639.72" y2="459.40"><stop offset="0.000" stop-color="#31cc00"/><stop offset="1.000" stop-color="#66cc00"/></linearGradient>
<linearGradient id="g103" gradientUnits="userSpaceOnUse" x1="625.01" y1="484.21" x2="619.85" y2="476.12"><stop offset="0.000" stop-color="#31cc00"/><stop offset="1.000" stop-color="#66cc00"/></linearGradient>
<linearGradient id="g104" gradientUnits="userSpaceOnUse" x1="625.01" y1="484.21" x2="617.77" y2="477.34"><stop offset="0.000" stop-color="#31cc00"/><stop offset="1.000" stop-color="#66cc00"/></linearGradient>
<linearGradient id="g105" gradientUnits="userSpaceOnUse" x1="603.47" y1="501.00" x2="599.51" y2="495.92"><stop offset="0.000" stop-color="#31cc00"/><stop offset="1.000" stop-color="#66cc00"/></linearGradient>
<linearGradient id="g106" gradientUnits="userSpaceOnUse" x1="775.00" y1="336.46" x2="742.94" y2="329.54"><stop offset="0.000" stop-color="#10cc00"/><stop offset="1.000" stop-color="#31cc00"/></linearGradient>
<linearGradient id="g107" gradientUnits="userSpaceOnUse" x1="769.81" y1="367.86" x2="735.51" y2="362.19"><stop offset="0.000" stop-color="#10cc00"/><stop offset="1.000" stop-color="#31cc00"/></linearGradient>
<linearGradient id="g108" gradientUnits="userSpaceOnUse" x1="769.81" y1="367.86" x2="738.85" y2="356.87"><stop offset="0.000" stop-color="#10cc00"/><stop offset="1.000" stop-color="#31cc00"/></linearGradient>
<linearGradient id="g109" gradientUnits="userSpaceOnUse" x1="759.25" y1="397.22" x2="728.51" y2="386.15"><stop offset="0.000" stop-color="#10cc00"/><stop offset="1.000" stop-color="#31cc00"/></linearGradient>
<linearGradient id="g110" gradientUnits="userSpaceOnUse" x1="759.25" y1="397.22" x2="733.79" y2="381.46"><stop offset="0.000" stop-color="#10cc00"/><stop offset="1.000" stop-color="#31cc00"/></linearGradient>
<linearGradient id="g111" gradientUnits="userSpaceOnUse" x1="740.17" y1="422.52" x2="719.55" y2="406.98"><stop offset="0.000" stop-color="#10cc00"/><stop offset="1.000" stop-color="#31cc00"/></linearGradient>
<linearGradient id="g112" gradientUnits="userSpaceOnUse" x1="740.17" y1="422.52" x2="720.44" y2="406.62"><stop offset="0.000" stop-color="#10cc00"/><stop offset="1.000" stop-color="#31cc00"/></linearGradient>
<linearGradient id="g113" gradientUnits="userSpaceOnUse" x1="716.75" y1="443.62" x2="704.51" y2="430.04"><stop offset="0.000" stop-color="#10cc00"/><stop offset="1.000" stop-color="#31cc00"/></linearGradient>
<linearGradient id="g114" gradientUnits="userSpaceOnUse" x1="716.75" y1="443.62" x2="708.04" y2="430.35"><stop offset="0.000" stop-color="#10cc00"/><stop offset="1.000" stop-color="#31cc00"/></linearGradient>
<linearGradient id="g115" gradientUnits="userSpaceOnUse" x1="689.13" y1="459.43" x2="682.59" y2="448.02"><stop offset="0.000" stop-color="#10cc00"/><stop offset="1.000" stop-color="#31cc00"/></linearGradient>
<linearGradient id="g116" gradientUnits="userSpaceOnUse" x1="689.13" y1="459.43" x2="681.58" y2="447.79"><stop offset="0.000" stop-color="#10cc00"/><stop offset="1.000" stop-color="#31cc00"/></linearGradient>
<linearGradient id="g117" gradientUnits="userSpaceOnUse" x1="660.87" y1="474.04" x2="656.32" y2="465.24"><stop offset="0.000" stop-color="#10cc00"/><stop offset="1.000" stop-color="#31cc00"/></linearGradient>
<linearGradient id="g118" gradientUnits="userSpaceOnUse" x1="660.87" y1="474.04" x2="655.11" y2="465.01"><stop offset="0.000" stop-color="#10cc00"/><stop offset="1.000" stop-color="#31cc00"/></linearGradient>
<linearGradient id="g119" gradientUnits="userSpaceOnUse" x1="632.27" y1="488.00" x2="629.38" y2="482.08"><stop offset="0.000" stop-color="#10cc00"/><stop offset="1.000" stop-color="#31cc00"/></linearGradient>
<linearGradient id="g120" gradientUnits="userSpaceOnUse" x1="632.27" y1="488.00" x2="627.69" y2="482.12"><stop offset="0.000" stop-color="#10cc00"/><stop offset="1.000" stop-color="#31cc00"/></linearGradient>
<linearGradient id="g121" gradientUnits="userSpaceOnUse" x1="603.69" y1="502.00" x2="603.25" y2="501.11"><stop offset="0.000" stop-color="#10cc00"/><stop offset="1.000" stop-color="#31cc00"/></linearGradient>
<linearGradient id="g122" gradientUnits="userSpaceOnUse" x1="812.00" y1="329.37" x2="777.12" y2="323.61"><stop offset="0.000" stop-color="#00cc00"/><stop offset="1.000" stop-color="#10cc00"/></linearGradient>
<linearGradient id="g123" gradientUnits="userSpaceOnUse" x1="804.30" y1="365.02" x2="771.94" y2="358.03"><stop offset="0.000" stop-color="#00cc00"/><stop offset="1.000" stop-color="#10cc00"/></linearGradient>
<linearGradient id="g124" gradientUnits="userSpaceOnUse" x1="804.30" y1="365.02" x2="774.68" y2="354.35"><stop offset="0.000" stop-color="#00cc00"/><stop offset="1.000" stop-color="#10cc00"/></linearGradient>
<linearGradient id="g125" gradientUnits="userSpaceOnUse" x1="791.05" y1="398.32" x2="763.21" y2="387.25"><stop offset="0.000" stop-color="#00cc00"/><stop offset="1.000" stop-color="#10cc00"/></linearGradient>
<linearGradient id="g126" gradientUnits="userSpaceOnUse" x1="791.05" y1="398.32" x2="770.24" y2="382.63"><stop offset="0.000" stop-color="#00cc00"/><stop offset="1.000" stop-color="#10cc00"/></linearGradient>
<linearGradient id="g127" gradientUnits="userSpaceOnUse" x1="767.75" y1="426.15" x2="749.75" y2="411.07"><stop offset="0.000" stop-color="#00cc00"/><stop offset="1.000" stop-color="#10cc00"/></linearGradient>
<linearGradient id="g128" gradientUnits="userSpaceOnUse" x1="767.75" y1="426.15" x2="753.59" y2="410.43"><stop offset="0.000" stop-color="#00cc00"/><stop offset="1.000" stop-color="#10cc00"/></linearGradient>
<linearGradient id="g129" gradientUnits="userSpaceOnUse" x1="738.50" y1="447.12" x2="729.46" y2="434.51"><stop offset="0.000" stop-color="#00cc00"/><stop offset="1.000" stop-color="#10cc00"/></linearGradient>
<linearGradient id="g130" gradientUnits="userSpaceOnUse" x1="738.50" y1="447.12" x2="731.62" y2="435.11"><stop offset="0.000" stop-color="#00cc00"/><stop offset="1.000" stop-color="#10cc00"/></linearGradient>
<linearGradient id="g131" gradientUnits="userSpaceOnUse" x1="705.85" y1="463.38" x2="700.95" y2="453.54"><stop offset="0.000" stop-color="#00cc00"/><stop offset="1.000" stop-color="#10cc00"/></linearGradient>
<linearGradient id="g132" gradientUnits="userSpaceOnUse" x1="705.85" y1="463.38" x2="700.72" y2="453.44"><stop offset="0.000" stop-color="#00cc00"/><stop offset="1.000" stop-color="#10cc00"/></linearGradient>
<linearGradient id="g133" gradientUnits="userSpaceOnUse" x1="671.91" y1="476.63" x2="669.57" y2="470.64"><stop offset="0.000" stop-color="#00cc00"/><stop offset="1.000" stop-color="#10cc00"/></linearGradient>
<linearGradient id="g134" gradientUnits="userSpaceOnUse" x1="671.91" y1="476.63" x2="668.76" y2="470.19"><stop offset="0.000" stop-color="#00cc00"/><stop offset="1.000" stop-color="#10cc00"/></linearGradient>
<linearGradient id="g135" gradientUnits="userSpaceOnUse" x1="637.90" y1="489.82" x2="636.55" y2="486.34"><stop offset="0.000" stop-color="#00cc00"/><stop offset="1.000" stop-color="#10cc00"/></linearGradient>
<linearGradient id="g136" gradientUnits="userSpaceOnUse" x1="637.90" y1="489.82" x2="636.09" y2="486.12"><stop offset="0.000" stop-color="#00cc00"/><stop offset="1.000" stop-color="#10cc00"/></linearGradient>
<linearGradient id="g137" gradientUnits="userSpaceOnUse" x1="603.90" y1="503.00" x2="603.54" y2="502.06"><stop offset="0.000" stop-color="#00cc00"/><stop offset="1.000" stop-color="#10cc00"/></linearGradient>
<linearGradient id="g138" gradientUnits="userSpaceOnUse" x1="998.30" y1="293.70" x2="993.57" y2="295.92"><stop offset="0.000" stop-color="#0049cc"/><stop offset="1.000" stop-color="#005acc"/></linearGradient>
<linearGradient id="g139" gradientUnits="userSpaceOnUse" x1="998.30" y1="293.70" x2="993.57" y2="295.92"><stop offset="0.000" stop-color="#0049cc"/><stop offset="1.000" stop-color="#005acc"/></linearGradient>
<linearGradient id="g140" gradientUnits="userSpaceOnUse" x1="998.30" y1="293.70" x2="993.57" y2="295.92"><stop offset="0.000" stop-color="#0049cc"/><stop offset="1.000" stop-color="#005acc"/></linearGradient>
<linearGradient id="g141" gradientUnits="userSpaceOnUse" x1="998.30" y1="293.70" x2="993.57" y2="295.92"><stop offset="0.000" stop-color="#0049cc"/><stop offset="1.000" stop-color="#005acc"/></linearGradient>
<linearGradient id="g142" gradientUnits="userSpaceOnUse" x1="998.30" y1="293.70" x2="993.57" y2="295.92"><stop offset="0.000" stop-color="#0049cc"/><stop offset="1.000" stop-color="#005acc"/></linearGradient>
<linearGradient id="g143" gradientUnits="userSpaceOnUse" x1="998.30" y1="293.70" x2="993.57" y2="295.92"><stop offset="0.000" stop-color="#0049cc"/><stop offset="1.000" stop-color="#005acc"/></linearGradient>
<linearGradient id="g144" gradientUnits="userSpaceOnUse" x1="998.30" y1="293.70" x2="993.57" y2="295.92"><stop offset="0.000" stop-color="#0049cc"/><stop offset="1.000" stop-color="#005acc"/></linearGradient>
<linearGradient id="g145" gradientUnits="userSpaceOnUse" x1="998.30" y1="293.70" x2="993.57" y2="295.92"><stop offset="0.000" stop-color="#0049cc"/><stop offset="1.000" stop-color="#005acc"/></linearGradient>
<linearGradient id="g146" gradientUnits="userSpaceOnUse" x1="993.00" y1="294.71" x2="981.39" y2="300.17"><stop offset="0.000" stop-color="#005acc"/><stop offset="1.000" stop-color="#008fcc"/></linearGradient>
<linearGradient id="g147" gradientUnits="userSpaceOnUse" x1="993.66" y1="296.13" x2="980.52" y2="299.34"><stop offset="0.000" stop-color="#005acc"/><stop offset="1.000" stop-color="#008fcc"/></linearGradient>
<linearGradient id="g148" gradientUnits="userSpaceOnUse" x1="993.66" y1="296.13" x2="981.16" y2="302.00"><stop offset="0.000" stop-color="#005acc"/><stop offset="1.000" stop-color="#008fcc"/></linearGradient>
<linearGradient id="g149" gradientUnits="userSpaceOnUse" x1="994.33" y1="297.54" x2="980.89" y2="300.83"><stop offset="0.000" stop-color="#005acc"/><stop offset="1.000" stop-color="#008fcc"/></linearGradient>
<linearGradient id="g150" gradientUnits="userSpaceOnUse" x1="994.33" y1="297.54" x2="980.93" y2="303.83"><stop offset="0.000" stop-color="#005acc"/><stop offset="1.000" stop-color="#008fcc"/></linearGradient>
<linearGradient id="g151" gradientUnits="userSpaceOnUse" x1="994.99" y1="298.95" x2="981.25" y2="302.31"><stop offset="0.000" stop-color="#005acc"/><stop offset="1.000" stop-color="#008fcc"/></linearGradient>
<linearGradient id="g152" gradientUnits="userSpaceOnUse" x1="994.99" y1="298.95" x2="980.69" y2="305.66"><stop offset="0.000" stop-color="#005acc"/><stop offset="1.000" stop-color="#008fcc"/></linearGradient>
<linearGradient id="g153" gradientUnits="userSpaceOnUse" x1="995.65" y1="300.36" x2="981.61" y2="303.80"><stop offset="0.000" stop-color="#005acc"/><stop offset="1.000" stop-color="#008fcc"/></linearGradient>
<linearGradient id="g154" gradientUnits="userSpaceOnUse" x1="995.65" y1="300.36" x2="980.46" y2="307.49"><stop offset="0.000" stop-color="#005acc"/><stop offset="1.000" stop-color="#008fcc"/></linearGradient>
<linearGradient id="g155" gradientUnits="userSpaceOnUse" x1="996.31" y1="301.77" x2="981.98" y2="305.28"><stop offset="0.000" stop-color="#005acc"/><stop offset="1.000" stop-color="#008fcc"/></linearGradient>
<linearGradient id="g156" gradientUnits="userSpaceOnUse" x1="996.31" y1="301.77" x2="980.23" y2="309.32"><stop offset="0.000" stop-color="#005acc"/><stop offset="1.000" stop-color="#008fcc"/></linearGradient>
<linearGradient id="g157" gradientUnits="userSpaceOnUse" x1="996.97" y1="303.18" x2="984.61" y2="320.56"><stop offset="0.000" stop-color="#005acc"/><stop offset="1.000" stop-color="#008fcc"/></linearGradient>
<linearGradient id="g158" gradientUnits="userSpaceOnUse" x1="996.97" y1="303.18" x2="983.09" y2="309.70"><stop offset="0.000" stop-color="#005acc"/><stop offset="1.000" stop-color="#008fcc"/></linearGradient>
<linearGradient id="g159" gradientUnits="userSpaceOnUse" x1="997.64" y1="304.59" x2="986.06" y2="321.74"><stop offset="0.000" stop-color="#005acc"/><stop offset="1.000" stop-color="#008fcc"/></linearGradient>
<linearGradient id="g160" gradientUnits="userSpaceOnUse" x1="997.64" y1="304.59" x2="986.08" y2="310.02"><stop offset="0.000" stop-color="#005acc"/><stop offset="1.000" stop-color="#008fcc"/></linearGradient>
<linearGradient id="g161" gradientUnits="userSpaceOnUse" x1="998.30" y1="306.00" x2="987.17" y2="322.49"><stop offset="0.000" stop-color="#005acc"/><stop offset="1.000" stop-color="#008fcc"/></linearGradient>
<linearGradient id="g162" gradientUnits="userSpaceOnUse" x1="980.00" y1="297.20" x2="965.19" y2="300.83"><stop offset="0.000" stop-color="#008fcc"/><stop offset="1.000" stop-color="#00c0cc"/></linearGradient>
<linearGradient id="g163" gradientUnits="userSpaceOnUse" x1="981.19" y1="302.07" x2="967.12" y2="306.62"><stop offset="0.000" stop-color="#008fcc"/><stop offset="1.000" stop-color="#00c0cc"/></linearGradient>
<linearGradient id="g164" gradientUnits="userSpaceOnUse" x1="981.19" y1="302.07" x2="966.92" y2="305.56"><stop offset="0.000" stop-color="#008fcc"/><stop offset="1.000" stop-color="#00c0cc"/></linearGradient>
<linearGradient id="g165" gradientUnits="userSpaceOnUse" x1="982.38" y1="306.93" x2="968.66" y2="311.37"><stop offset="0.000" stop-color="#008fcc"/><stop offset="1.000" stop-color="#00c0cc"/></linearGradient>
<linearGradient id="g166" gradientUnits="userSpaceOnUse" x1="982.38" y1="306.93" x2="968.66" y2="310.29"><stop offset="0.000" stop-color="#008fcc"/><stop offset="1.000" stop-color="#00c0cc"/></linearGradient>
<linearGradient id="g167" gradientUnits="userSpaceOnUse" x1="983.57" y1="311.79" x2="970.30" y2="316.35"><stop offset="0.000" stop-color="#008fcc"/><stop offset="1.000" stop-color="#00c0cc"/></linearGradient>
<linearGradient id="g168" gradientUnits="userSpaceOnUse" x1="983.57" y1="311.79" x2="970.52" y2="314.99"><stop offset="0.000" stop-color="#008fcc"/><stop offset="1.000" stop-color="#00c0cc"/></linearGradient>
<linearGradient id="g169" gradientUnits="userSpaceOnUse" x1="984.77" y1="316.66" x2="974.80" y2="325.03"><stop offset="0.000" stop-color="#008fcc"/><stop offset="1.000" stop-color="#00c0cc"/></linearGradient>
<linearGradient id="g170" gradientUnits="userSpaceOnUse" x1="984.77" y1="316.66" x2="975.02" y2="319.05"><stop offset="0.000" stop-color="#008fcc"/><stop offset="1.000" stop-color="#00c0cc"/></linearGradient>
<linearGradient id="g171" gradientUnits="userSpaceOnUse" x1="985.96" y1="321.52" x2="977.69" y2="328.47"><stop offset="0.000" stop-color="#008fcc"/><stop offset="1.000" stop-color="#00c0cc"/></linearGradient>
<linearGradient id="g172" gradientUnits="userSpaceOnUse" x1="985.96" y1="321.52" x2="978.89" y2="331.45"><stop offset="0.000" stop-color="#008fcc"/><stop offset="1.000" stop-color="#00c0cc"/></linearGradient>
<linearGradient id="g173" gradientUnits="userSpaceOnUse" x1="990.00" y1="324.40" x2="980.78" y2="332.15"><stop offset="0.000" stop-color="#008fcc"/><stop offset="1.000" stop-color="#00c0cc"/></linearGradient>
<linearGradient id="g174" gradientUnits="userSpaceOnUse" x1="990.00" y1="324.40" x2="982.02" y2="336.23"><stop offset="0.000" stop-color="#008fcc"/><stop offset="1.000" stop-color="#00c0cc"/></linearGradient>
<linearGradient id="g175" gradientUnits="userSpaceOnUse" x1="994.15" y1="327.20" x2="983.88" y2="335.85"><stop offset="0.000" stop-color="#008fcc"/><stop offset="1.000" stop-color="#00c0cc"/></linearGradient>
<linearGradient id="g176" gradientUnits="userSpaceOnUse" x1="994.15" y1="327.20" x2="984.99" y2="340.77"><stop offset="0.000" stop-color="#008fcc"/><stop offset="1.000" stop-color="#00c0cc"/></linearGradient>
<linearGradient id="g177" gradientUnits="userSpaceOnUse" x1="998.30" y1="330.00" x2="988.84" y2="343.24"><stop offset="0.000" stop-color="#008fcc"/><stop offset="1.000" stop-color="#00c0cc"/></linearGradient>
<linearGradient id="g178" gradientUnits="userSpaceOnUse" x1="965.00" y1="300.08" x2="936.16" y2="309.41"><stop offset="0.000" stop-color="#00c0cc"/><stop offset="1.000" stop-color="#00cccc"/></linearGradient>
<linearGradient id="g179" gradientUnits="userSpaceOnUse" x1="967.37" y1="307.40" x2="938.37" y2="316.53"><stop offset="0.000" stop-color="#00c0cc"/><stop offset="1.000" stop-color="#00cccc"/></linearGradient>
<linearGradient id="g180" gradientUnits="userSpaceOnUse" x1="967.37" y1="307.40" x2="938.44" y2="316.76"><stop offset="0.000" stop-color="#00c0cc"/><stop offset="1.000" stop-color="#00cccc"/></linearGradient>
<linearGradient id="g181" gradientUnits="userSpaceOnUse" x1="969.74" y1="314.72" x2="943.80" y2="327.67"><stop offset="0.000" stop-color="#00c0cc"/><stop offset="1.000" stop-color="#00cccc"/></linearGradient>
<linearGradient id="g182" gradientUnits="userSpaceOnUse" x1="969.74" y1="314.72" x2="942.59" y2="324.03"><stop offset="0.000" stop-color="#00c0cc"/><stop offset="1.000" stop-color="#00cccc"/></linearGradient>
<linearGradient id="g183" gradientUnits="userSpaceOnUse" x1="972.23" y1="321.97" x2="949.29" y2="336.43"><stop offset="0.000" stop-color="#00c0cc"/><stop offset="1.000" stop-color="#00cccc"/></linearGradient>
<linearGradient id="g184" gradientUnits="userSpaceOnUse" x1="972.23" y1="321.97" x2="951.45" y2="339.43"><stop offset="0.000" stop-color="#00c0cc"/><stop offset="1.000" stop-color="#00cccc"/></linearGradient>
<linearGradient id="g185" gradientUnits="userSpaceOnUse" x1="977.18" y1="327.86" x2="955.61" y2="344.81"><stop offset="0.000" stop-color="#00c0cc"/><stop offset="1.000" stop-color="#00cccc"/></linearGradient>
<linearGradient id="g186" gradientUnits="userSpaceOnUse" x1="977.18" y1="327.86" x2="956.11" y2="345.57"><stop offset="0.000" stop-color="#00c0cc"/><stop offset="1.000" stop-color="#00cccc"/></linearGradient>
<linearGradient id="g187" gradientUnits="userSpaceOnUse" x1="982.13" y1="333.75" x2="967.33" y2="354.36"><stop offset="0.000" stop-color="#00c0cc"/><stop offset="1.000" stop-color="#00cccc"/></linearGradient>
<linearGradient id="g188" gradientUnits="userSpaceOnUse" x1="982.13" y1="333.75" x2="963.33" y2="349.56"><stop offset="0.000" stop-color="#00c0cc"/><stop offset="1.000" stop-color="#00cccc"/></linearGradient>
<linearGradient id="g189" gradientUnits="userSpaceOnUse" x1="987.08" y1="339.65" x2="973.39" y2="358.71"><stop offset="0.000" stop-color="#00c0cc"/><stop offset="1.000" stop-color="#00cccc"/></linearGradient>
<linearGradient id="g190" gradientUnits="userSpaceOnUse" x1="987.08" y1="339.65" x2="970.55" y2="353.58"><stop offset="0.000" stop-color="#00c0cc"/><stop offset="1.000" stop-color="#00cccc"/></linearGradient>
<linearGradient id="g191" gradientUnits="userSpaceOnUse" x1="992.04" y1="345.53" x2="979.45" y2="363.06"><stop offset="0.000" stop-color="#00c0cc"/><stop offset="1.000" stop-color="#00cccc"/></linearGradient>
<linearGradient id="g192" gradientUnits="userSpaceOnUse" x1="992.04" y1="345.53" x2="979.48" y2="363.11"><stop offset="0.000" stop-color="#00c0cc"/><stop offset="1.000" stop-color="#00cccc"/></linearGradient>
<linearGradient id="g193" gradientUnits="userSpaceOnUse" x1="998.30" y1="350.00" x2="992.01" y2="370.02"><stop offset="0.000" stop-color="#00c0cc"/><stop offset="1.000" stop-color="#00cccc"/></linearGradient>
<linearGradient id="g194" gradientUnits="userSpaceOnUse" x1="935.00" y1="305.82" x2="917.64" y2="311.29"><stop offset="0.000" stop-color="#00cccc"/><stop offset="1.000" stop-color="#00ccab"/></linearGradient>
<linearGradient id="g195" gradientUnits="userSpaceOnUse" x1="938.61" y1="317.28" x2="917.05" y2="317.42"><stop offset="0.000" stop-color="#00cccc"/><stop offset="1.000" stop-color="#00ccab"/></linearGradient>
<linearGradient id="g196" gradientUnits="userSpaceOnUse" x1="938.61" y1="317.28" x2="918.66" y2="327.24"><stop offset="0.000" stop-color="#00cccc"/><stop offset="1.000" stop-color="#00ccab"/></linearGradient>
<linearGradient id="g197" gradientUnits="userSpaceOnUse" x1="943.93" y1="327.94" x2="923.12" y2="337.38"><stop offset="0.000" stop-color="#00cccc"/><stop offset="1.000" stop-color="#00ccab"/></linearGradient>
<linearGradient id="g198" gradientUnits="userSpaceOnUse" x1="943.93" y1="327.94" x2="924.71" y2="340.05"><stop offset="0.000" stop-color="#00cccc"/><stop offset="1.000" stop-color="#00ccab"/></linearGradient>
<linearGradient id="g199" gradientUnits="userSpaceOnUse" x1="950.33" y1="338.10" x2="933.34" y2="351.03"><stop offset="0.000" stop-color="#00cccc"/><stop offset="1.000" stop-color="#00ccab"/></linearGradient>
<linearGradient id="g200" gradientUnits="userSpaceOnUse" x1="950.33" y1="338.10" x2="933.57" y2="351.27"><stop offset="0.000" stop-color="#00cccc"/><stop offset="1.000" stop-color="#00ccab"/></linearGradient>
<linearGradient id="g201" gradientUnits="userSpaceOnUse" x1="957.65" y1="347.40" x2="947.50" y2="360.98"><stop offset="0.000" stop-color="#00cccc"/><stop offset="1.000" stop-color="#00ccab"/></linearGradient>
<linearGradient id="g202" gradientUnits="userSpaceOnUse" x1="957.65" y1="347.40" x2="947.81" y2="361.10"><stop offset="0.000" stop-color="#00cccc"/><stop offset="1.000" stop-color="#00ccab"/></linearGradient>
<linearGradient id="g203" gradientUnits="userSpaceOnUse" x1="967.40" y1="354.41" x2="957.12" y2="368.17"><stop offset="0.000" stop-color="#00cccc"/><stop offset="1.000" stop-color="#00ccab"/></linearGradient>
<linearGradient id="g204" gradientUnits="userSpaceOnUse" x1="967.40" y1="354.41" x2="957.39" y2="368.35"><stop offset="0.000" stop-color="#00cccc"/><stop offset="1.000" stop-color="#00ccab"/></linearGradient>
<linearGradient id="g205" gradientUnits="userSpaceOnUse" x1="977.16" y1="361.41" x2="971.34" y2="374.36"><stop offset="0.000" stop-color="#00cccc"/><stop offset="1.000" stop-color="#00ccab"/></linearGradient>
<linearGradient id="g206" gradientUnits="userSpaceOnUse" x1="977.16" y1="361.41" x2="968.90" y2="372.92"><stop offset="0.000" stop-color="#00cccc"/><stop offset="1.000" stop-color="#00ccab"/></linearGradient>
<linearGradient id="g207" gradientUnits="userSpaceOnUse" x1="986.91" y1="368.42" x2="982.78" y2="378.84"><stop offset="0.000" stop-color="#00cccc"/><stop offset="1.000" stop-color="#00ccab"/></linearGradient>
<linearGradient id="g208" gradientUnits="userSpaceOnUse" x1="986.91" y1="368.42" x2="983.53" y2="379.19"><stop offset="0.000" stop-color="#00cccc"/><stop offset="1.000" stop-color="#00ccab"/></linearGradient>
<linearGradient id="g209" gradientUnits="userSpaceOnUse" x1="998.30" y1="372.00" x2="993.84" y2="383.23"><stop offset="0.000" stop-color="#00cccc"/><stop offset="1.000" stop-color="#00ccab"/></linearGradient>
<linearGradient id="g210" gradientUnits="userSpaceOnUse" x1="917.00" y1="309.27" x2="887.97" y2="309.45"><stop offset="0.000" stop-color="#00ccab"/><stop offset="1.000" stop-color="#00cc7a"/></linearGradient>
<linearGradient id="g211" gradientUnits="userSpaceOnUse" x1="917.10" y1="324.12" x2="893.96" y2="332.09"><stop offset="0.000" stop-color="#00ccab"/><stop offset="1.000" stop-color="#00cc7a"/></linearGradient>
<linearGradient id="g212" gradientUnits="userSpaceOnUse" x1="917.10" y1="324.12" x2="894.83" y2="334.22"><stop offset="0.000" stop-color="#00ccab"/><stop offset="1.000" stop-color="#00cc7a"/></linearGradient>
<linearGradient id="g213" gradientUnits="userSpaceOnUse" x1="923.35" y1="337.89" x2="902.84" y2="348.91"><stop offset="0.000" stop-color="#00ccab"/><stop offset="1.000" stop-color="#00cc7a"/></linearGradient>
<linearGradient id="g214" gradientUnits="userSpaceOnUse" x1="923.35" y1="337.89" x2="904.98" y2="351.86"><stop offset="0.000" stop-color="#00ccab"/><stop offset="1.000" stop-color="#00cc7a"/></linearGradient>
<linearGradient id="g215" gradientUnits="userSpaceOnUse" x1="932.22" y1="349.55" x2="918.52" y2="364.01"><stop offset="0.000" stop-color="#00ccab"/><stop offset="1.000" stop-color="#00cc7a"/></linearGradient>
<linearGradient id="g216" gradientUnits="userSpaceOnUse" x1="932.22" y1="349.55" x2="920.53" y2="365.20"><stop offset="0.000" stop-color="#00ccab"/><stop offset="1.000" stop-color="#00cc7a"/></linearGradient>
<linearGradient id="g217" gradientUnits="userSpaceOnUse" x1="944.34" y1="358.61" x2="933.36" y2="374.13"><stop offset="0.000" stop-color="#00ccab"/><stop offset="1.000" stop-color="#00cc7a"/></linearGradient>
<linearGradient id="g218" gradientUnits="userSpaceOnUse" x1="944.34" y1="358.61" x2="932.94" y2="373.85"><stop offset="0.000" stop-color="#00ccab"/><stop offset="1.000" stop-color="#00cc7a"/></linearGradient>
<linearGradient id="g219" gradientUnits="userSpaceOnUse" x1="956.45" y1="367.67" x2="949.21" y2="381.97"><stop offset="0.000" stop-color="#00ccab"/><stop offset="1.000" stop-color="#00cc7a"/></linearGradient>
<linearGradient id="g220" gradientUnits="userSpaceOnUse" x1="956.45" y1="367.67" x2="949.88" y2="382.29"><stop offset="0.000" stop-color="#00ccab"/><stop offset="1.000" stop-color="#00cc7a"/></linearGradient>
<linearGradient id="g221" gradientUnits="userSpaceOnUse" x1="970.18" y1="373.84" x2="962.63" y2="388.76"><stop offset="0.000" stop-color="#00ccab"/><stop offset="1.000" stop-color="#00cc7a"/></linearGradient>
<linearGradient id="g222" gradientUnits="userSpaceOnUse" x1="970.18" y1="373.84" x2="963.89" y2="389.69"><stop offset="0.000" stop-color="#00ccab"/><stop offset="1.000" stop-color="#00cc7a"/></linearGradient>
<linearGradient id="g223" gradientUnits="userSpaceOnUse" x1="984.24" y1="379.42" x2="974.16" y2="395.51"><stop offset="0.000" stop-color="#00ccab"/><stop offset="1.000" stop-color="#00cc7a"/></linearGradient>
<linearGradient id="g224" gradientUnits="userSpaceOnUse" x1="984.24" y1="379.42" x2="976.67" y2="398.48"><stop offset="0.000" stop-color="#00ccab"/><stop offset="1.000" stop-color="#00cc7a"/></linearGradient>
<linearGradient id="g225" gradientUnits="userSpaceOnUse" x1="998.30" y1="385.00" x2="985.53" y2="402.88"><stop offset="0.000" stop-color="#00ccab"/><stop offset="1.000" stop-color="#00cc7a"/></linearGradient>
<linearGradient id="g226" gradientUnits="userSpaceOnUse" x1="888.00" y1="314.82" x2="867.04" y2="322.05"><stop offset="0.000" stop-color="#00cc7a"/><stop offset="1.000" stop-color="#00cc3d"/></linearGradient>
<linearGradient id="g227" gradientUnits="userSpaceOnUse" x1="894.23" y1="332.89" x2="864.92" y2="330.01"><stop offset="0.000" stop-color="#00cc7a"/><stop offset="1.000" stop-color="#00cc3d"/></linearGradient>
<linearGradient id="g228" gradientUnits="userSpaceOnUse" x1="894.23" y1="332.89" x2="866.84" y2="347.61"><stop offset="0.000" stop-color="#00cc7a"/><stop offset="1.000" stop-color="#00cc3d"/></linearGradient>
<linearGradient id="g229" gradientUnits="userSpaceOnUse" x1="903.10" y1="349.38" x2="881.93" y2="365.59"><stop offset="0.000" stop-color="#00cc7a"/><stop offset="1.000" stop-color="#00cc3d"/></linearGradient>
<linearGradient id="g230" gradientUnits="userSpaceOnUse" x1="903.10" y1="349.38" x2="885.86" y2="367.56"><stop offset="0.000" stop-color="#00cc7a"/><stop offset="1.000" stop-color="#00cc3d"/></linearGradient>
<linearGradient id="g231" gradientUnits="userSpaceOnUse" x1="916.98" y1="362.54" x2="901.67" y2="380.36"><stop offset="0.000" stop-color="#00cc7a"/><stop offset="1.000" stop-color="#00cc3d"/></linearGradient>
<linearGradient id="g232" gradientUnits="userSpaceOnUse" x1="916.98" y1="362.54" x2="904.01" y2="380.89"><stop offset="0.000" stop-color="#00cc7a"/><stop offset="1.000" stop-color="#00cc3d"/></linearGradient>
<linearGradient id="g233" gradientUnits="userSpaceOnUse" x1="932.43" y1="373.47" x2="920.58" y2="391.40"><stop offset="0.000" stop-color="#00cc7a"/><stop offset="1.000" stop-color="#00cc3d"/></linearGradient>
<linearGradient id="g234" gradientUnits="userSpaceOnUse" x1="932.43" y1="373.47" x2="923.23" y2="391.64"><stop offset="0.000" stop-color="#00cc7a"/><stop offset="1.000" stop-color="#00cc3d"/></linearGradient>
<linearGradient id="g235" gradientUnits="userSpaceOnUse" x1="949.49" y1="382.11" x2="940.26" y2="400.30"><stop offset="0.000" stop-color="#00cc7a"/><stop offset="1.000" stop-color="#00cc3d"/></linearGradient>
<linearGradient id="g236" gradientUnits="userSpaceOnUse" x1="949.49" y1="382.11" x2="940.28" y2="400.30"><stop offset="0.000" stop-color="#00cc7a"/><stop offset="1.000" stop-color="#00cc3d"/></linearGradient>
<linearGradient id="g237" gradientUnits="userSpaceOnUse" x1="966.56" y1="390.75" x2="960.52" y2="406.97"><stop offset="0.000" stop-color="#00cc7a"/><stop offset="1.000" stop-color="#00cc3d"/></linearGradient>
<linearGradient id="g238" gradientUnits="userSpaceOnUse" x1="966.56" y1="390.75" x2="956.96" y2="406.07"><stop offset="0.000" stop-color="#00cc7a"/><stop offset="1.000" stop-color="#00cc3d"/></linearGradient>
<linearGradient id="g239" gradientUnits="userSpaceOnUse" x1="982.75" y1="400.89" x2="978.06" y2="413.49"><stop offset="0.000" stop-color="#00cc7a"/><stop offset="1.000" stop-color="#00cc3d"/></linearGradient>
<linearGradient id="g240" gradientUnits="userSpaceOnUse" x1="982.75" y1="400.89" x2="974.99" y2="411.74"><stop offset="0.000" stop-color="#00cc7a"/><stop offset="1.000" stop-color="#00cc3d"/></linearGradient>
<linearGradient id="g241" gradientUnits="userSpaceOnUse" x1="998.30" y1="412.00" x2="995.37" y2="419.91"><stop offset="0.000" stop-color="#00cc7a"/><stop offset="1.000" stop-color="#00cc3d"/></linearGradient>
<linearGradient id="g242" gradientUnits="userSpaceOnUse" x1="866.00" y1="319.03" x2="842.68" y2="316.74"><stop offset="0.000" stop-color="#00cc3d"/><stop offset="1.000" stop-color="#00cc14"/></linearGradient>
<linearGradient id="g243" gradientUnits="userSpaceOnUse" x1="863.76" y1="341.86" x2="839.44" y2="337.31"><stop offset="0.000" stop-color="#00cc3d"/><stop offset="1.000" stop-color="#00cc14"/></linearGradient>
<linearGradient id="g244" gradientUnits="userSpaceOnUse" x1="863.76" y1="341.86" x2="843.86" y2="357.10"><stop offset="0.000" stop-color="#00cc3d"/><stop offset="1.000" stop-color="#00cc14"/></linearGradient>
<linearGradient id="g245" gradientUnits="userSpaceOnUse" x1="877.01" y1="359.17" x2="857.31" y2="374.40"><stop offset="0.000" stop-color="#00cc3d"/><stop offset="1.000" stop-color="#00cc14"/></linearGradient>
<linearGradient id="g246" gradientUnits="userSpaceOnUse" x1="877.01" y1="359.17" x2="861.89" y2="376.77"><stop offset="0.000" stop-color="#00cc3d"/><stop offset="1.000" stop-color="#00cc14"/></linearGradient>
<linearGradient id="g247" gradientUnits="userSpaceOnUse" x1="894.33" y1="374.04" x2="881.34" y2="390.96"><stop offset="0.000" stop-color="#00cc3d"/><stop offset="1.000" stop-color="#00cc14"/></linearGradient>
<linearGradient id="g248" gradientUnits="userSpaceOnUse" x1="894.33" y1="374.04" x2="882.91" y2="391.32"><stop offset="0.000" stop-color="#00cc3d"/><stop offset="1.000" stop-color="#00cc14"/></linearGradient>
<linearGradient id="g249" gradientUnits="userSpaceOnUse" x1="913.46" y1="386.70" x2="905.13" y2="402.24"><stop offset="0.000" stop-color="#00cc3d"/><stop offset="1.000" stop-color="#00cc14"/></linearGradient>
<linearGradient id="g250" gradientUnits="userSpaceOnUse" x1="913.46" y1="386.70" x2="905.56" y2="402.26"><stop offset="0.000" stop-color="#00cc3d"/><stop offset="1.000" stop-color="#00cc14"/></linearGradient>
<linearGradient id="g251" gradientUnits="userSpaceOnUse" x1="933.79" y1="397.02" x2="928.56" y2="410.41"><stop offset="0.000" stop-color="#00cc3d"/><stop offset="1.000" stop-color="#00cc14"/></linearGradient>
<linearGradient id="g252" gradientUnits="userSpaceOnUse" x1="933.79" y1="397.02" x2="928.80" y2="410.40"><stop offset="0.000" stop-color="#00cc3d"/><stop offset="1.000" stop-color="#00cc14"/></linearGradient>
<linearGradient id="g253" gradientUnits="userSpaceOnUse" x1="955.29" y1="405.02" x2="949.93" y2="418.75"><stop offset="0.000" stop-color="#00cc3d"/><stop offset="1.000" stop-color="#00cc14"/></linearGradient>
<linearGradient id="g254" gradientUnits="userSpaceOnUse" x1="955.29" y1="405.02" x2="950.16" y2="418.81"><stop offset="0.000" stop-color="#00cc3d"/><stop offset="1.000" stop-color="#00cc14"/></linearGradient>
<linearGradient id="g255" gradientUnits="userSpaceOnUse" x1="976.79" y1="413.02" x2="971.31" y2="427.08"><stop offset="0.000" stop-color="#00cc3d"/><stop offset="1.000" stop-color="#00cc14"/></linearGradient>
<linearGradient id="g256" gradientUnits="userSpaceOnUse" x1="976.79" y1="413.02" x2="971.53" y2="427.20"><stop offset="0.000" stop-color="#00cc3d"/><stop offset="1.000" stop-color="#00cc14"/></linearGradient>
<linearGradient id="g257" gradientUnits="userSpaceOnUse" x1="998.30" y1="421.00" x2="992.68" y2="435.41"><stop offset="0.000" stop-color="#00cc3d"/><stop offset="1.000" stop-color="#00cc14"/></linearGradient>
<linearGradient id="g258" gradientUnits="userSpaceOnUse" x1="842.00" y1="323.63" x2="814.06" y2="318.39"><stop offset="0.000" stop-color="#00cc14"/><stop offset="1.000" stop-color="#00cc00"/></linearGradient>
<linearGradient id="g259" gradientUnits="userSpaceOnUse" x1="837.33" y1="348.56" x2="813.31" y2="350.08"><stop offset="0.000" stop-color="#00cc14"/><stop offset="1.000" stop-color="#00cc00"/></linearGradient>
<linearGradient id="g260" gradientUnits="userSpaceOnUse" x1="837.33" y1="348.56" x2="819.04" y2="362.71"><stop offset="0.000" stop-color="#00cc14"/><stop offset="1.000" stop-color="#00cc00"/></linearGradient>
<linearGradient id="g261" gradientUnits="userSpaceOnUse" x1="853.71" y1="369.75" x2="842.01" y2="382.27"><stop offset="0.000" stop-color="#00cc14"/><stop offset="1.000" stop-color="#00cc00"/></linearGradient>
<linearGradient id="g262" gradientUnits="userSpaceOnUse" x1="853.71" y1="369.75" x2="843.80" y2="382.66"><stop offset="0.000" stop-color="#00cc14"/><stop offset="1.000" stop-color="#00cc00"/></linearGradient>
<linearGradient id="g263" gradientUnits="userSpaceOnUse" x1="874.98" y1="386.08" x2="867.25" y2="397.62"><stop offset="0.000" stop-color="#00cc14"/><stop offset="1.000" stop-color="#00cc00"/></linearGradient>
<linearGradient id="g264" gradientUnits="userSpaceOnUse" x1="874.98" y1="386.08" x2="868.75" y2="397.71"><stop offset="0.000" stop-color="#00cc14"/><stop offset="1.000" stop-color="#00cc00"/></linearGradient>
<linearGradient id="g265" gradientUnits="userSpaceOnUse" x1="898.38" y1="398.62" x2="891.93" y2="410.44"><stop offset="0.000" stop-color="#00cc14"/><stop offset="1.000" stop-color="#00cc00"/></linearGradient>
<linearGradient id="g266" gradientUnits="userSpaceOnUse" x1="898.38" y1="398.62" x2="893.67" y2="410.69"><stop offset="0.000" stop-color="#00cc14"/><stop offset="1.000" stop-color="#00cc00"/></linearGradient>
<linearGradient id="g267" gradientUnits="userSpaceOnUse" x1="923.36" y1="408.38" x2="915.27" y2="423.18"><stop offset="0.000" stop-color="#00cc14"/><stop offset="1.000" stop-color="#00cc00"/></linearGradient>
<linearGradient id="g268" gradientUnits="userSpaceOnUse" x1="923.36" y1="408.38" x2="917.21" y2="424.11"><stop offset="0.000" stop-color="#00cc14"/><stop offset="1.000" stop-color="#00cc00"/></linearGradient>
<linearGradient id="g269" gradientUnits="userSpaceOnUse" x1="948.33" y1="418.13" x2="938.76" y2="435.87"><stop offset="0.000" stop-color="#00cc14"/><stop offset="1.000" stop-color="#00cc00"/></linearGradient>
<linearGradient id="g270" gradientUnits="userSpaceOnUse" x1="948.33" y1="418.13" x2="940.82" y2="437.41"><stop offset="0.000" stop-color="#00cc14"/><stop offset="1.000" stop-color="#00cc00"/></linearGradient>
<linearGradient id="g271" gradientUnits="userSpaceOnUse" x1="973.32" y1="427.87" x2="962.18" y2="448.50"><stop offset="0.000" stop-color="#00cc14"/><stop offset="1.000" stop-color="#00cc00"/></linearGradient>
<linearGradient id="g272" gradientUnits="userSpaceOnUse" x1="973.32" y1="427.87" x2="964.42" y2="450.70"><stop offset="0.000" stop-color="#00cc14"/><stop offset="1.000" stop-color="#00cc00"/></linearGradient>
<linearGradient id="g273" gradientUnits="userSpaceOnUse" x1="998.30" y1="437.60" x2="985.59" y2="461.14"><stop offset="0.000" stop-color="#00cc14"/><stop offset="1.000" stop-color="#00cc00"/></linearGradient>
<clipPath id="c274"><polygon points="599.5,488.3 999.6,405.5 1024.7,438.4 607.9,526.4"/></clipPath>
<linearGradient id="g275" gradientUnits="userSpaceOnUse" x1="700.10" y1="467.53" x2="597.97" y2="489.35"><stop offset="0.000" stop-color="#009300"/><stop offset="1.000" stop-color="#1d9300"/></linearGradient>
<linearGradient id="g276" gradientUnits="userSpaceOnUse" x1="712.25" y1="503.15" x2="609.91" y2="538.05"><stop offset="0.000" stop-color="#009300"/><stop offset="1.000" stop-color="#1d9300"/></linearGradient>
<clipPath id="c277"><polygon points="998.3,291.9 1112.7,420.2 1023.4,438.7 998.3,405.8"/></clipPath>
<linearGradient id="g278" gradientUnits="userSpaceOnUse" x1="1116.40" y1="420.40" x2="1047.94" y2="474.01"><stop offset="0.000" stop-color="#000626"/><stop offset="0.933" stop-color="#002626"/><stop offset="1.000" stop-color="#002624"/></linearGradient>
<linearGradient id="g279" gradientUnits="userSpaceOnUse" x1="1116.40" y1="420.40" x2="1062.73" y2="479.16"><stop offset="0.000" stop-color="#000626"/><stop offset="0.840" stop-color="#002626"/><stop offset="1.000" stop-color="#002620"/></linearGradient>
<clipPath id="c280"><polygon points="568.4,556.7 1166.4,429.2 1152.8,587.7 606.3,713.6"/></clipPath>
<linearGradient id="g281" gradientUnits="userSpaceOnUse" x1="586.13" y1="556.56" x2="574.74" y2="548.91"><stop offset="0.000" stop-color="#cc1400"/><stop offset="1.000" stop-color="#cc0000"/></linearGradient>
<linearGradient id="g282" gradientUnits="userSpaceOnUse" x1="584.27" y1="559.34" x2="572.88" y2="551.68"><stop offset="0.000" stop-color="#cc1400"/><stop offset="1.000" stop-color="#cc0000"/></linearGradient>
<linearGradient id="g283" gradientUnits="userSpaceOnUse" x1="582.40" y1="562.11" x2="571.01" y2="554.46"><stop offset="0.000" stop-color="#cc1400"/><stop offset="1.000" stop-color="#cc0000"/></linearGradient>
<linearGradient id="g284" gradientUnits="userSpaceOnUse" x1="580.54" y1="564.89" x2="569.15" y2="557.24"><stop offset="0.000" stop-color="#cc1400"/><stop offset="1.000" stop-color="#cc0000"/></linearGradient>
<linearGradient id="g285" gradientUnits="userSpaceOnUse" x1="578.67" y1="567.67" x2="567.28" y2="560.01"><stop offset="0.000" stop-color="#cc1400"/><stop offset="1.000" stop-color="#cc0000"/></linearGradient>
<linearGradient id="g286" gradientUnits="userSpaceOnUse" x1="576.80" y1="570.45" x2="565.41" y2="562.79"><stop offset="0.000" stop-color="#cc1400"/><stop offset="1.000" stop-color="#cc0000"/></linearGradient>
<linearGradient id="g287" gradientUnits="userSpaceOnUse" x1="574.94" y1="573.22" x2="563.55" y2="565.57"><stop offset="0.000" stop-color="#cc1400"/><stop offset="1.000" stop-color="#cc0000"/></linearGradient>
<linearGradient id="g288" gradientUnits="userSpaceOnUse" x1="573.07" y1="576.00" x2="561.68" y2="568.35"><stop offset="0.000" stop-color="#cc1400"/><stop offset="1.000" stop-color="#cc0000"/></linearGradient>
<linearGradient id="g289" gradientUnits="userSpaceOnUse" x1="610.50" y1="548.98" x2="597.22" y2="540.06"><stop offset="0.000" stop-color="#cc3900"/><stop offset="1.000" stop-color="#cc1400"/></linearGradient>
<linearGradient id="g290" gradientUnits="userSpaceOnUse" x1="608.10" y1="555.81" x2="588.79" y2="549.02"><stop offset="0.000" stop-color="#cc3900"/><stop offset="1.000" stop-color="#cc1400"/></linearGradient>
<linearGradient id="g291" gradientUnits="userSpaceOnUse" x1="608.10" y1="555.81" x2="593.31" y2="545.88"><stop offset="0.000" stop-color="#cc3900"/><stop offset="1.000" stop-color="#cc1400"/></linearGradient>
<linearGradient id="g292" gradientUnits="userSpaceOnUse" x1="605.70" y1="562.64" x2="585.59" y2="555.57"><stop offset="0.000" stop-color="#cc3900"/><stop offset="1.000" stop-color="#cc1400"/></linearGradient>
<linearGradient id="g293" gradientUnits="userSpaceOnUse" x1="605.70" y1="562.64" x2="589.41" y2="551.69"><stop offset="0.000" stop-color="#cc3900"/><stop offset="1.000" stop-color="#cc1400"/></linearGradient>
<linearGradient id="g294" gradientUnits="userSpaceOnUse" x1="603.30" y1="569.47" x2="582.40" y2="562.12"><stop offset="0.000" stop-color="#cc3900"/><stop offset="1.000" stop-color="#cc1400"/></linearGradient>
<linearGradient id="g295" gradientUnits="userSpaceOnUse" x1="603.30" y1="569.47" x2="585.50" y2="557.51"><stop offset="0.000" stop-color="#cc3900"/><stop offset="1.000" stop-color="#cc1400"/></linearGradient>
<linearGradient id="g296" gradientUnits="userSpaceOnUse" x1="600.74" y1="576.18" x2="579.34" y2="568.04"><stop offset="0.000" stop-color="#cc3900"/><stop offset="1.000" stop-color="#cc1400"/></linearGradient>
<linearGradient id="g297" gradientUnits="userSpaceOnUse" x1="600.74" y1="576.18" x2="581.59" y2="563.31"><stop offset="0.000" stop-color="#cc3900"/><stop offset="1.000" stop-color="#cc1400"/></linearGradient>
<linearGradient id="g298" gradientUnits="userSpaceOnUse" x1="594.85" y1="580.39" x2="583.38" y2="564.31"><stop offset="0.000" stop-color="#cc3900"/><stop offset="1.000" stop-color="#cc1400"/></linearGradient>
<linearGradient id="g299" gradientUnits="userSpaceOnUse" x1="594.85" y1="580.39" x2="577.82" y2="568.94"><stop offset="0.000" stop-color="#cc3900"/><stop offset="1.000" stop-color="#cc1400"/></linearGradient>
<linearGradient id="g300" gradientUnits="userSpaceOnUse" x1="588.96" y1="584.59" x2="578.17" y2="569.47"><stop offset="0.000" stop-color="#cc3900"/><stop offset="1.000" stop-color="#cc1400"/></linearGradient>
<linearGradient id="g301" gradientUnits="userSpaceOnUse" x1="588.96" y1="584.59" x2="574.04" y2="574.56"><stop offset="0.000" stop-color="#cc3900"/><stop offset="1.000" stop-color="#cc1400"/></linearGradient>
<linearGradient id="g302" gradientUnits="userSpaceOnUse" x1="583.07" y1="588.80" x2="572.96" y2="574.63"><stop offset="0.000" stop-color="#cc3900"/><stop offset="1.000" stop-color="#cc1400"/></linearGradient>
<linearGradient id="g303" gradientUnits="userSpaceOnUse" x1="583.07" y1="588.80" x2="570.26" y2="580.19"><stop offset="0.000" stop-color="#cc3900"/><stop offset="1.000" stop-color="#cc1400"/></linearGradient>
<linearGradient id="g304" gradientUnits="userSpaceOnUse" x1="577.18" y1="593.00" x2="567.75" y2="579.79"><stop offset="0.000" stop-color="#cc3900"/><stop offset="1.000" stop-color="#cc1400"/></linearGradient>
<linearGradient id="g305" gradientUnits="userSpaceOnUse" x1="635.00" y1="543.75" x2="614.83" y2="536.66"><stop offset="0.000" stop-color="#cc6a00"/><stop offset="1.000" stop-color="#cc3900"/></linearGradient>
<linearGradient id="g306" gradientUnits="userSpaceOnUse" x1="636.44" y1="553.92" x2="608.39" y2="557.89"><stop offset="0.000" stop-color="#cc6a00"/><stop offset="1.000" stop-color="#cc3900"/></linearGradient>
<linearGradient id="g307" gradientUnits="userSpaceOnUse" x1="636.44" y1="553.92" x2="611.81" y2="545.26"><stop offset="0.000" stop-color="#cc6a00"/><stop offset="1.000" stop-color="#cc3900"/></linearGradient>
<linearGradient id="g308" gradientUnits="userSpaceOnUse" x1="629.34" y1="562.66" x2="615.09" y2="551.08"><stop offset="0.000" stop-color="#cc6a00"/><stop offset="1.000" stop-color="#cc3900"/></linearGradient>
<linearGradient id="g309" gradientUnits="userSpaceOnUse" x1="629.34" y1="562.66" x2="608.29" y2="555.26"><stop offset="0.000" stop-color="#cc6a00"/><stop offset="1.000" stop-color="#cc3900"/></linearGradient>
<linearGradient id="g310" gradientUnits="userSpaceOnUse" x1="622.25" y1="571.39" x2="609.89" y2="561.35"><stop offset="0.000" stop-color="#cc6a00"/><stop offset="1.000" stop-color="#cc3900"/></linearGradient>
<linearGradient id="g311" gradientUnits="userSpaceOnUse" x1="622.25" y1="571.39" x2="605.05" y2="564.85"><stop offset="0.000" stop-color="#cc6a00"/><stop offset="1.000" stop-color="#cc3900"/></linearGradient>
<linearGradient id="g312" gradientUnits="userSpaceOnUse" x1="615.15" y1="580.12" x2="604.54" y2="571.51"><stop offset="0.000" stop-color="#cc6a00"/><stop offset="1.000" stop-color="#cc3900"/></linearGradient>
<linearGradient id="g313" gradientUnits="userSpaceOnUse" x1="615.15" y1="580.12" x2="608.43" y2="570.70"><stop offset="0.000" stop-color="#cc6a00"/><stop offset="1.000" stop-color="#cc3900"/></linearGradient>
<linearGradient id="g314" gradientUnits="userSpaceOnUse" x1="607.18" y1="587.99" x2="597.30" y2="577.97"><stop offset="0.000" stop-color="#cc6a00"/><stop offset="1.000" stop-color="#cc3900"/></linearGradient>
<linearGradient id="g315" gradientUnits="userSpaceOnUse" x1="607.18" y1="587.99" x2="599.42" y2="577.12"><stop offset="0.000" stop-color="#cc6a00"/><stop offset="1.000" stop-color="#cc3900"/></linearGradient>
<linearGradient id="g316" gradientUnits="userSpaceOnUse" x1="598.50" y1="595.16" x2="589.44" y2="584.20"><stop offset="0.000" stop-color="#cc6a00"/><stop offset="1.000" stop-color="#cc3900"/></linearGradient>
<linearGradient id="g317" gradientUnits="userSpaceOnUse" x1="598.50" y1="595.16" x2="590.29" y2="583.64"><stop offset="0.000" stop-color="#cc6a00"/><stop offset="1.000" stop-color="#cc3900"/></linearGradient>
<linearGradient id="g318" gradientUnits="userSpaceOnUse" x1="589.83" y1="602.33" x2="580.44" y2="590.97"><stop offset="0.000" stop-color="#cc6a00"/><stop offset="1.000" stop-color="#cc3900"/></linearGradient>
<linearGradient id="g319" gradientUnits="userSpaceOnUse" x1="589.83" y1="602.33" x2="581.15" y2="590.16"><stop offset="0.000" stop-color="#cc6a00"/><stop offset="1.000" stop-color="#cc3900"/></linearGradient>
<linearGradient id="g320" gradientUnits="userSpaceOnUse" x1="581.16" y1="609.50" x2="571.44" y2="597.74"><stop offset="0.000" stop-color="#cc6a00"/><stop offset="1.000" stop-color="#cc3900"/></linearGradient>
<linearGradient id="g321" gradientUnits="userSpaceOnUse" x1="656.00" y1="539.27" x2="634.79" y2="542.27"><stop offset="0.000" stop-color="#cc9b00"/><stop offset="1.000" stop-color="#cc6a00"/></linearGradient>
<linearGradient id="g322" gradientUnits="userSpaceOnUse" x1="655.96" y1="553.07" x2="636.44" y2="553.02"><stop offset="0.000" stop-color="#cc9b00"/><stop offset="1.000" stop-color="#cc6a00"/></linearGradient>
<linearGradient id="g323" gradientUnits="userSpaceOnUse" x1="655.96" y1="553.07" x2="644.62" y2="543.85"><stop offset="0.000" stop-color="#cc9b00"/><stop offset="1.000" stop-color="#cc6a00"/></linearGradient>
<linearGradient id="g324" gradientUnits="userSpaceOnUse" x1="646.61" y1="564.40" x2="635.48" y2="555.22"><stop offset="0.000" stop-color="#cc9b00"/><stop offset="1.000" stop-color="#cc6a00"/></linearGradient>
<linearGradient id="g325" gradientUnits="userSpaceOnUse" x1="646.61" y1="564.40" x2="635.35" y2="555.26"><stop offset="0.000" stop-color="#cc9b00"/><stop offset="1.000" stop-color="#cc6a00"/></linearGradient>
<linearGradient id="g326" gradientUnits="userSpaceOnUse" x1="637.26" y1="575.74" x2="626.19" y2="566.61"><stop offset="0.000" stop-color="#cc9b00"/><stop offset="1.000" stop-color="#cc6a00"/></linearGradient>
<linearGradient id="g327" gradientUnits="userSpaceOnUse" x1="637.26" y1="575.74" x2="626.08" y2="566.66"><stop offset="0.000" stop-color="#cc9b00"/><stop offset="1.000" stop-color="#cc6a00"/></linearGradient>
<linearGradient id="g328" gradientUnits="userSpaceOnUse" x1="627.36" y1="586.59" x2="617.47" y2="577.58"><stop offset="0.000" stop-color="#cc9b00"/><stop offset="1.000" stop-color="#cc6a00"/></linearGradient>
<linearGradient id="g329" gradientUnits="userSpaceOnUse" x1="627.36" y1="586.59" x2="618.11" y2="577.21"><stop offset="0.000" stop-color="#cc9b00"/><stop offset="1.000" stop-color="#cc6a00"/></linearGradient>
<linearGradient id="g330" gradientUnits="userSpaceOnUse" x1="617.02" y1="597.04" x2="607.53" y2="587.64"><stop offset="0.000" stop-color="#cc9b00"/><stop offset="1.000" stop-color="#cc6a00"/></linearGradient>
<linearGradient id="g331" gradientUnits="userSpaceOnUse" x1="617.02" y1="597.04" x2="608.58" y2="586.83"><stop offset="0.000" stop-color="#cc9b00"/><stop offset="1.000" stop-color="#cc6a00"/></linearGradient>
<linearGradient id="g332" gradientUnits="userSpaceOnUse" x1="606.68" y1="607.48" x2="596.39" y2="597.29"><stop offset="0.000" stop-color="#cc9b00"/><stop offset="1.000" stop-color="#cc6a00"/></linearGradient>
<linearGradient id="g333" gradientUnits="userSpaceOnUse" x1="606.68" y1="607.48" x2="597.31" y2="596.15"><stop offset="0.000" stop-color="#cc9b00"/><stop offset="1.000" stop-color="#cc6a00"/></linearGradient>
<linearGradient id="g334" gradientUnits="userSpaceOnUse" x1="596.19" y1="617.78" x2="585.35" y2="606.74"><stop offset="0.000" stop-color="#cc9b00"/><stop offset="1.000" stop-color="#cc6a00"/></linearGradient>
<linearGradient id="g335" gradientUnits="userSpaceOnUse" x1="596.19" y1="617.78" x2="586.02" y2="605.48"><stop offset="0.000" stop-color="#cc9b00"/><stop offset="1.000" stop-color="#cc6a00"/></linearGradient>
<linearGradient id="g336" gradientUnits="userSpaceOnUse" x1="585.63" y1="628.00" x2="574.22" y2="616.21"><stop offset="0.000" stop-color="#cc9b00"/><stop offset="1.000" stop-color="#cc6a00"/></linearGradient>
<linearGradient id="g337" gradientUnits="userSpaceOnUse" x1="676.00" y1="535.01" x2="656.01" y2="534.96"><stop offset="0.000" stop-color="#ccc000"/><stop offset="1.000" stop-color="#cc9b00"/></linearGradient>
<linearGradient id="g338" gradientUnits="userSpaceOnUse" x1="675.63" y1="552.67" x2="655.98" y2="552.26"><stop offset="0.000" stop-color="#ccc000"/><stop offset="1.000" stop-color="#cc9b00"/></linearGradient>
<linearGradient id="g339" gradientUnits="userSpaceOnUse" x1="675.63" y1="552.67" x2="664.12" y2="543.18"><stop offset="0.000" stop-color="#ccc000"/><stop offset="1.000" stop-color="#cc9b00"/></linearGradient>
<linearGradient id="g340" gradientUnits="userSpaceOnUse" x1="665.66" y1="567.79" x2="650.83" y2="558.00"><stop offset="0.000" stop-color="#ccc000"/><stop offset="1.000" stop-color="#cc9b00"/></linearGradient>
<linearGradient id="g341" gradientUnits="userSpaceOnUse" x1="665.66" y1="567.79" x2="652.66" y2="557.07"><stop offset="0.000" stop-color="#ccc000"/><stop offset="1.000" stop-color="#cc9b00"/></linearGradient>
<linearGradient id="g342" gradientUnits="userSpaceOnUse" x1="655.26" y1="582.55" x2="640.02" y2="571.82"><stop offset="0.000" stop-color="#ccc000"/><stop offset="1.000" stop-color="#cc9b00"/></linearGradient>
<linearGradient id="g343" gradientUnits="userSpaceOnUse" x1="655.26" y1="582.55" x2="642.04" y2="570.50"><stop offset="0.000" stop-color="#ccc000"/><stop offset="1.000" stop-color="#cc9b00"/></linearGradient>
<linearGradient id="g344" gradientUnits="userSpaceOnUse" x1="642.11" y1="595.00" x2="630.94" y2="583.20"><stop offset="0.000" stop-color="#ccc000"/><stop offset="1.000" stop-color="#cc9b00"/></linearGradient>
<linearGradient id="g345" gradientUnits="userSpaceOnUse" x1="642.11" y1="595.00" x2="630.46" y2="583.47"><stop offset="0.000" stop-color="#ccc000"/><stop offset="1.000" stop-color="#cc9b00"/></linearGradient>
<linearGradient id="g346" gradientUnits="userSpaceOnUse" x1="628.96" y1="607.45" x2="618.12" y2="596.00"><stop offset="0.000" stop-color="#ccc000"/><stop offset="1.000" stop-color="#cc9b00"/></linearGradient>
<linearGradient id="g347" gradientUnits="userSpaceOnUse" x1="628.96" y1="607.45" x2="617.73" y2="596.33"><stop offset="0.000" stop-color="#ccc000"/><stop offset="1.000" stop-color="#cc9b00"/></linearGradient>
<linearGradient id="g348" gradientUnits="userSpaceOnUse" x1="615.96" y1="620.06" x2="605.18" y2="608.94"><stop offset="0.000" stop-color="#ccc000"/><stop offset="1.000" stop-color="#cc9b00"/></linearGradient>
<linearGradient id="g349" gradientUnits="userSpaceOnUse" x1="615.96" y1="620.06" x2="605.12" y2="609.02"><stop offset="0.000" stop-color="#ccc000"/><stop offset="1.000" stop-color="#cc9b00"/></linearGradient>
<linearGradient id="g350" gradientUnits="userSpaceOnUse" x1="603.03" y1="632.74" x2="592.20" y2="621.70"><stop offset="0.000" stop-color="#ccc000"/><stop offset="1.000" stop-color="#cc9b00"/></linearGradient>
<linearGradient id="g351" gradientUnits="userSpaceOnUse" x1="603.03" y1="632.74" x2="592.25" y2="621.59"><stop offset="0.000" stop-color="#ccc000"/><stop offset="1.000" stop-color="#cc9b00"/></linearGradient>
<linearGradient id="g352" gradientUnits="userSpaceOnUse" x1="589.73" y1="645.00" x2="579.38" y2="633.76"><stop offset="0.000" stop-color="#ccc000"/><stop offset="1.000" stop-color="#cc9b00"/></linearGradient>
<linearGradient id="g353" gradientUnits="userSpaceOnUse" x1="695.00" y1="530.95" x2="676.09" y2="530.56"><stop offset="0.000" stop-color="#cccc00"/><stop offset="1.000" stop-color="#ccc000"/></linearGradient>
<linearGradient id="g354" gradientUnits="userSpaceOnUse" x1="700.05" y1="551.55" x2="676.76" y2="557.26"><stop offset="0.000" stop-color="#cccc00"/><stop offset="1.000" stop-color="#ccc000"/></linearGradient>
<linearGradient id="g355" gradientUnits="userSpaceOnUse" x1="700.05" y1="551.55" x2="683.56" y2="540.67"><stop offset="0.000" stop-color="#cccc00"/><stop offset="1.000" stop-color="#ccc000"/></linearGradient>
<linearGradient id="g356" gradientUnits="userSpaceOnUse" x1="687.86" y1="569.40" x2="671.97" y2="558.55"><stop offset="0.000" stop-color="#cccc00"/><stop offset="1.000" stop-color="#ccc000"/></linearGradient>
<linearGradient id="g357" gradientUnits="userSpaceOnUse" x1="687.86" y1="569.40" x2="672.26" y2="558.41"><stop offset="0.000" stop-color="#cccc00"/><stop offset="1.000" stop-color="#ccc000"/></linearGradient>
<linearGradient id="g358" gradientUnits="userSpaceOnUse" x1="673.87" y1="585.54" x2="661.76" y2="575.05"><stop offset="0.000" stop-color="#cccc00"/><stop offset="1.000" stop-color="#ccc000"/></linearGradient>
<linearGradient id="g359" gradientUnits="userSpaceOnUse" x1="673.87" y1="585.54" x2="663.58" y2="574.67"><stop offset="0.000" stop-color="#cccc00"/><stop offset="1.000" stop-color="#ccc000"/></linearGradient>
<linearGradient id="g360" gradientUnits="userSpaceOnUse" x1="656.64" y1="598.59" x2="649.62" y2="589.31"><stop offset="0.000" stop-color="#cccc00"/><stop offset="1.000" stop-color="#ccc000"/></linearGradient>
<linearGradient id="g361" gradientUnits="userSpaceOnUse" x1="656.64" y1="598.59" x2="647.98" y2="589.44"><stop offset="0.000" stop-color="#cccc00"/><stop offset="1.000" stop-color="#ccc000"/></linearGradient>
<linearGradient id="g362" gradientUnits="userSpaceOnUse" x1="639.54" y1="611.77" x2="633.51" y2="603.94"><stop offset="0.000" stop-color="#cccc00"/><stop offset="1.000" stop-color="#ccc000"/></linearGradient>
<linearGradient id="g363" gradientUnits="userSpaceOnUse" x1="639.54" y1="611.77" x2="632.25" y2="604.26"><stop offset="0.000" stop-color="#cccc00"/><stop offset="1.000" stop-color="#ccc000"/></linearGradient>
<linearGradient id="g364" gradientUnits="userSpaceOnUse" x1="625.81" y1="628.46" x2="615.82" y2="620.24"><stop offset="0.000" stop-color="#cccc00"/><stop offset="1.000" stop-color="#ccc000"/></linearGradient>
<linearGradient id="g365" gradientUnits="userSpaceOnUse" x1="625.81" y1="628.46" x2="616.78" y2="619.26"><stop offset="0.000" stop-color="#cccc00"/><stop offset="1.000" stop-color="#ccc000"/></linearGradient>
<linearGradient id="g366" gradientUnits="userSpaceOnUse" x1="610.95" y1="643.78" x2="601.36" y2="634.47"><stop offset="0.000" stop-color="#cccc00"/><stop offset="1.000" stop-color="#ccc000"/></linearGradient>
<linearGradient id="g367" gradientUnits="userSpaceOnUse" x1="610.95" y1="643.78" x2="601.81" y2="633.87"><stop offset="0.000" stop-color="#cccc00"/><stop offset="1.000" stop-color="#ccc000"/></linearGradient>
<linearGradient id="g368" gradientUnits="userSpaceOnUse" x1="591.91" y1="654.00" x2="587.67" y2="646.11"><stop offset="0.000" stop-color="#cccc00"/><stop offset="1.000" stop-color="#ccc000"/></linearGradient>
<linearGradient id="g369" gradientUnits="userSpaceOnUse" x1="741.00" y1="521.14" x2="695.34" y2="532.33"><stop offset="0.000" stop-color="#c0cc00"/><stop offset="1.000" stop-color="#cccc00"/></linearGradient>
<linearGradient id="g370" gradientUnits="userSpaceOnUse" x1="733.93" y1="547.16" x2="703.49" y2="538.89"><stop offset="0.000" stop-color="#c0cc00"/><stop offset="1.000" stop-color="#cccc00"/></linearGradient>
<linearGradient id="g371" gradientUnits="userSpaceOnUse" x1="733.93" y1="547.16" x2="712.88" y2="532.77"><stop offset="0.000" stop-color="#c0cc00"/><stop offset="1.000" stop-color="#cccc00"/></linearGradient>
<linearGradient id="g372" gradientUnits="userSpaceOnUse" x1="715.94" y1="566.61" x2="702.20" y2="553.90"><stop offset="0.000" stop-color="#c0cc00"/><stop offset="1.000" stop-color="#cccc00"/></linearGradient>
<linearGradient id="g373" gradientUnits="userSpaceOnUse" x1="715.94" y1="566.61" x2="701.28" y2="553.91"><stop offset="0.000" stop-color="#c0cc00"/><stop offset="1.000" stop-color="#cccc00"/></linearGradient>
<linearGradient id="g374" gradientUnits="userSpaceOnUse" x1="696.19" y1="584.96" x2="686.14" y2="574.14"><stop offset="0.000" stop-color="#c0cc00"/><stop offset="1.000" stop-color="#cccc00"/></linearGradient>
<linearGradient id="g375" gradientUnits="userSpaceOnUse" x1="696.19" y1="584.96" x2="688.33" y2="574.59"><stop offset="0.000" stop-color="#c0cc00"/><stop offset="1.000" stop-color="#cccc00"/></linearGradient>
<linearGradient id="g376" gradientUnits="userSpaceOnUse" x1="676.14" y1="602.98" x2="665.24" y2="590.86"><stop offset="0.000" stop-color="#c0cc00"/><stop offset="1.000" stop-color="#cccc00"/></linearGradient>
<linearGradient id="g377" gradientUnits="userSpaceOnUse" x1="676.14" y1="602.98" x2="666.76" y2="590.80"><stop offset="0.000" stop-color="#c0cc00"/><stop offset="1.000" stop-color="#cccc00"/></linearGradient>
<linearGradient id="g378" gradientUnits="userSpaceOnUse" x1="657.26" y1="622.17" x2="643.05" y2="608.19"><stop offset="0.000" stop-color="#c0cc00"/><stop offset="1.000" stop-color="#cccc00"/></linearGradient>
<linearGradient id="g379" gradientUnits="userSpaceOnUse" x1="657.26" y1="622.17" x2="641.58" y2="609.28"><stop offset="0.000" stop-color="#c0cc00"/><stop offset="1.000" stop-color="#cccc00"/></linearGradient>
<linearGradient id="g380" gradientUnits="userSpaceOnUse" x1="639.24" y1="642.21" x2="624.97" y2="629.38"><stop offset="0.000" stop-color="#c0cc00"/><stop offset="1.000" stop-color="#cccc00"/></linearGradient>
<linearGradient id="g381" gradientUnits="userSpaceOnUse" x1="639.24" y1="642.21" x2="625.45" y2="628.83"><stop offset="0.000" stop-color="#c0cc00"/><stop offset="1.000" stop-color="#cccc00"/></linearGradient>
<linearGradient id="g382" gradientUnits="userSpaceOnUse" x1="618.23" y1="659.10" x2="607.89" y2="646.24"><stop offset="0.000" stop-color="#c0cc00"/><stop offset="1.000" stop-color="#cccc00"/></linearGradient>
<linearGradient id="g383" gradientUnits="userSpaceOnUse" x1="618.23" y1="659.10" x2="610.21" y2="644.17"><stop offset="0.000" stop-color="#c0cc00"/><stop offset="1.000" stop-color="#cccc00"/></linearGradient>
<linearGradient id="g384" gradientUnits="userSpaceOnUse" x1="597.22" y1="676.00" x2="584.39" y2="660.04"><stop offset="0.000" stop-color="#c0cc00"/><stop offset="1.000" stop-color="#cccc00"/></linearGradient>
<linearGradient id="g385" gradientUnits="userSpaceOnUse" x1="785.00" y1="511.75" x2="746.40" y2="501.27"><stop offset="0.000" stop-color="#7acc00"/><stop offset="1.000" stop-color="#c0cc00"/></linearGradient>
<linearGradient id="g386" gradientUnits="userSpaceOnUse" x1="774.54" y1="543.00" x2="739.28" y2="531.19"><stop offset="0.000" stop-color="#7acc00"/><stop offset="1.000" stop-color="#c0cc00"/></linearGradient>
<linearGradient id="g387" gradientUnits="userSpaceOnUse" x1="774.54" y1="543.00" x2="754.74" y2="524.67"><stop offset="0.000" stop-color="#7acc00"/><stop offset="1.000" stop-color="#c0cc00"/></linearGradient>
<linearGradient id="g388" gradientUnits="userSpaceOnUse" x1="755.42" y1="569.21" x2="728.41" y2="549.51"><stop offset="0.000" stop-color="#7acc00"/><stop offset="1.000" stop-color="#c0cc00"/></linearGradient>
<linearGradient id="g389" gradientUnits="userSpaceOnUse" x1="755.42" y1="569.21" x2="735.82" y2="548.13"><stop offset="0.000" stop-color="#7acc00"/><stop offset="1.000" stop-color="#c0cc00"/></linearGradient>
<linearGradient id="g390" gradientUnits="userSpaceOnUse" x1="732.09" y1="592.40" x2="710.52" y2="570.71"><stop offset="0.000" stop-color="#7acc00"/><stop offset="1.000" stop-color="#c0cc00"/></linearGradient>
<linearGradient id="g391" gradientUnits="userSpaceOnUse" x1="732.09" y1="592.40" x2="712.34" y2="570.44"><stop offset="0.000" stop-color="#7acc00"/><stop offset="1.000" stop-color="#c0cc00"/></linearGradient>
<linearGradient id="g392" gradientUnits="userSpaceOnUse" x1="707.55" y1="614.38" x2="687.91" y2="592.45"><stop offset="0.000" stop-color="#7acc00"/><stop offset="1.000" stop-color="#c0cc00"/></linearGradient>
<linearGradient id="g393" gradientUnits="userSpaceOnUse" x1="707.55" y1="614.38" x2="685.89" y2="593.07"><stop offset="0.000" stop-color="#7acc00"/><stop offset="1.000" stop-color="#c0cc00"/></linearGradient>
<linearGradient id="g394" gradientUnits="userSpaceOnUse" x1="683.31" y1="636.71" x2="664.11" y2="615.86"><stop offset="0.000" stop-color="#7acc00"/><stop offset="1.000" stop-color="#c0cc00"/></linearGradient>
<linearGradient id="g395" gradientUnits="userSpaceOnUse" x1="683.31" y1="636.71" x2="661.68" y2="617.25"><stop offset="0.000" stop-color="#7acc00"/><stop offset="1.000" stop-color="#c0cc00"/></linearGradient>
<linearGradient id="g396" gradientUnits="userSpaceOnUse" x1="656.34" y1="655.47" x2="644.55" y2="638.52"><stop offset="0.000" stop-color="#7acc00"/><stop offset="1.000" stop-color="#c0cc00"/></linearGradient>
<linearGradient id="g397" gradientUnits="userSpaceOnUse" x1="656.34" y1="655.47" x2="643.15" y2="639.07"><stop offset="0.000" stop-color="#7acc00"/><stop offset="1.000" stop-color="#c0cc00"/></linearGradient>
<linearGradient id="g398" gradientUnits="userSpaceOnUse" x1="628.59" y1="673.23" x2="619.16" y2="658.51"><stop offset="0.000" stop-color="#7acc00"/><stop offset="1.000" stop-color="#c0cc00"/></linearGradient>
<linearGradient id="g399" gradientUnits="userSpaceOnUse" x1="628.59" y1="673.23" x2="617.62" y2="659.59"><stop offset="0.000" stop-color="#7acc00"/><stop offset="1.000" stop-color="#c0cc00"/></linearGradient>
<linearGradient id="g400" gradientUnits="userSpaceOnUse" x1="600.84" y1="691.00" x2="592.98" y2="678.72"><stop offset="0.000" stop-color="#7acc00"/><stop offset="1.000" stop-color="#c0cc00"/></linearGradient>
<linearGradient id="g401" gradientUnits="userSpaceOnUse" x1="828.00" y1="502.58" x2="792.09" y2="490.56"><stop offset="0.000" stop-color="#31cc00"/><stop offset="1.000" stop-color="#7acc00"/></linearGradient>
<linearGradient id="g402" gradientUnits="userSpaceOnUse" x1="826.33" y1="542.63" x2="774.65" y2="540.48"><stop offset="0.000" stop-color="#31cc00"/><stop offset="1.000" stop-color="#7acc00"/></linearGradient>
<linearGradient id="g403" gradientUnits="userSpaceOnUse" x1="826.33" y1="542.63" x2="792.71" y2="518.10"><stop offset="0.000" stop-color="#31cc00"/><stop offset="1.000" stop-color="#7acc00"/></linearGradient>
<linearGradient id="g404" gradientUnits="userSpaceOnUse" x1="806.06" y1="575.78" x2="766.28" y2="551.45"><stop offset="0.000" stop-color="#31cc00"/><stop offset="1.000" stop-color="#7acc00"/></linearGradient>
<linearGradient id="g405" gradientUnits="userSpaceOnUse" x1="806.06" y1="575.78" x2="777.60" y2="547.16"><stop offset="0.000" stop-color="#31cc00"/><stop offset="1.000" stop-color="#7acc00"/></linearGradient>
<linearGradient id="g406" gradientUnits="userSpaceOnUse" x1="776.04" y1="602.16" x2="752.05" y2="574.86"><stop offset="0.000" stop-color="#31cc00"/><stop offset="1.000" stop-color="#7acc00"/></linearGradient>
<linearGradient id="g407" gradientUnits="userSpaceOnUse" x1="776.04" y1="602.16" x2="751.63" y2="574.91"><stop offset="0.000" stop-color="#31cc00"/><stop offset="1.000" stop-color="#7acc00"/></linearGradient>
<linearGradient id="g408" gradientUnits="userSpaceOnUse" x1="744.26" y1="626.58" x2="724.73" y2="601.17"><stop offset="0.000" stop-color="#31cc00"/><stop offset="1.000" stop-color="#7acc00"/></linearGradient>
<linearGradient id="g409" gradientUnits="userSpaceOnUse" x1="744.26" y1="626.58" x2="721.33" y2="601.69"><stop offset="0.000" stop-color="#31cc00"/><stop offset="1.000" stop-color="#7acc00"/></linearGradient>
<linearGradient id="g410" gradientUnits="userSpaceOnUse" x1="710.78" y1="648.41" x2="697.23" y2="627.63"><stop offset="0.000" stop-color="#31cc00"/><stop offset="1.000" stop-color="#7acc00"/></linearGradient>
<linearGradient id="g411" gradientUnits="userSpaceOnUse" x1="710.78" y1="648.41" x2="696.33" y2="627.65"><stop offset="0.000" stop-color="#31cc00"/><stop offset="1.000" stop-color="#7acc00"/></linearGradient>
<linearGradient id="g412" gradientUnits="userSpaceOnUse" x1="675.14" y1="666.78" x2="666.59" y2="650.19"><stop offset="0.000" stop-color="#31cc00"/><stop offset="1.000" stop-color="#7acc00"/></linearGradient>
<linearGradient id="g413" gradientUnits="userSpaceOnUse" x1="675.14" y1="666.78" x2="664.54" y2="650.22"><stop offset="0.000" stop-color="#31cc00"/><stop offset="1.000" stop-color="#7acc00"/></linearGradient>
<linearGradient id="g414" gradientUnits="userSpaceOnUse" x1="639.50" y1="685.14" x2="632.36" y2="671.29"><stop offset="0.000" stop-color="#31cc00"/><stop offset="1.000" stop-color="#7acc00"/></linearGradient>
<linearGradient id="g415" gradientUnits="userSpaceOnUse" x1="639.50" y1="685.14" x2="630.92" y2="671.74"><stop offset="0.000" stop-color="#31cc00"/><stop offset="1.000" stop-color="#7acc00"/></linearGradient>
<linearGradient id="g416" gradientUnits="userSpaceOnUse" x1="603.86" y1="703.50" x2="598.14" y2="692.39"><stop offset="0.000" stop-color="#31cc00"/><stop offset="1.000" stop-color="#7acc00"/></linearGradient>
<linearGradient id="g417" gradientUnits="userSpaceOnUse" x1="865.00" y1="494.68" x2="828.39" y2="493.16"><stop offset="0.000" stop-color="#0ccc00"/><stop offset="1.000" stop-color="#31cc00"/></linearGradient>
<linearGradient id="g418" gradientUnits="userSpaceOnUse" x1="860.97" y1="539.73" x2="826.86" y2="536.68"><stop offset="0.000" stop-color="#0ccc00"/><stop offset="1.000" stop-color="#31cc00"/></linearGradient>
<linearGradient id="g419" gradientUnits="userSpaceOnUse" x1="860.97" y1="539.73" x2="837.06" y2="525.10"><stop offset="0.000" stop-color="#0ccc00"/><stop offset="1.000" stop-color="#31cc00"/></linearGradient>
<linearGradient id="g420" gradientUnits="userSpaceOnUse" x1="837.18" y1="576.21" x2="815.15" y2="561.84"><stop offset="0.000" stop-color="#0ccc00"/><stop offset="1.000" stop-color="#31cc00"/></linearGradient>
<linearGradient id="g421" gradientUnits="userSpaceOnUse" x1="837.18" y1="576.21" x2="823.40" y2="560.54"><stop offset="0.000" stop-color="#0ccc00"/><stop offset="1.000" stop-color="#31cc00"/></linearGradient>
<linearGradient id="g422" gradientUnits="userSpaceOnUse" x1="806.57" y1="609.50" x2="786.37" y2="590.93"><stop offset="0.000" stop-color="#0ccc00"/><stop offset="1.000" stop-color="#31cc00"/></linearGradient>
<linearGradient id="g423" gradientUnits="userSpaceOnUse" x1="806.57" y1="609.50" x2="791.69" y2="590.13"><stop offset="0.000" stop-color="#0ccc00"/><stop offset="1.000" stop-color="#31cc00"/></linearGradient>
<linearGradient id="g424" gradientUnits="userSpaceOnUse" x1="769.70" y1="635.59" x2="756.96" y2="617.59"><stop offset="0.000" stop-color="#0ccc00"/><stop offset="1.000" stop-color="#31cc00"/></linearGradient>
<linearGradient id="g425" gradientUnits="userSpaceOnUse" x1="769.70" y1="635.59" x2="757.98" y2="617.63"><stop offset="0.000" stop-color="#0ccc00"/><stop offset="1.000" stop-color="#31cc00"/></linearGradient>
<linearGradient id="g426" gradientUnits="userSpaceOnUse" x1="729.45" y1="655.92" x2="722.63" y2="642.43"><stop offset="0.000" stop-color="#0ccc00"/><stop offset="1.000" stop-color="#31cc00"/></linearGradient>
<linearGradient id="g427" gradientUnits="userSpaceOnUse" x1="729.45" y1="655.92" x2="722.47" y2="642.39"><stop offset="0.000" stop-color="#0ccc00"/><stop offset="1.000" stop-color="#31cc00"/></linearGradient>
<linearGradient id="g428" gradientUnits="userSpaceOnUse" x1="688.27" y1="674.62" x2="683.08" y2="663.17"><stop offset="0.000" stop-color="#0ccc00"/><stop offset="1.000" stop-color="#31cc00"/></linearGradient>
<linearGradient id="g429" gradientUnits="userSpaceOnUse" x1="688.27" y1="674.62" x2="682.32" y2="663.07"><stop offset="0.000" stop-color="#0ccc00"/><stop offset="1.000" stop-color="#31cc00"/></linearGradient>
<linearGradient id="g430" gradientUnits="userSpaceOnUse" x1="647.09" y1="693.31" x2="642.72" y2="683.68"><stop offset="0.000" stop-color="#0ccc00"/><stop offset="1.000" stop-color="#31cc00"/></linearGradient>
<linearGradient id="g431" gradientUnits="userSpaceOnUse" x1="647.09" y1="693.31" x2="642.17" y2="683.76"><stop offset="0.000" stop-color="#0ccc00"/><stop offset="1.000" stop-color="#31cc00"/></linearGradient>
<linearGradient id="g432" gradientUnits="userSpaceOnUse" x1="605.91" y1="712.00" x2="602.36" y2="704.18"><stop offset="0.000" stop-color="#0ccc00"/><stop offset="1.000" stop-color="#31cc00"/></linearGradient>
<linearGradient id="g433" gradientUnits="userSpaceOnUse" x1="895.00" y1="488.28" x2="865.81" y2="485.67"><stop offset="0.000" stop-color="#00cc00"/><stop offset="1.000" stop-color="#0ccc00"/></linearGradient>
<linearGradient id="g434" gradientUnits="userSpaceOnUse" x1="889.46" y1="537.61" x2="861.56" y2="534.47"><stop offset="0.000" stop-color="#00cc00"/><stop offset="1.000" stop-color="#0ccc00"/></linearGradient>
<linearGradient id="g435" gradientUnits="userSpaceOnUse" x1="889.46" y1="537.61" x2="870.44" y2="525.21"><stop offset="0.000" stop-color="#00cc00"/><stop offset="1.000" stop-color="#0ccc00"/></linearGradient>
<linearGradient id="g436" gradientUnits="userSpaceOnUse" x1="862.28" y1="576.58" x2="845.22" y2="564.68"><stop offset="0.000" stop-color="#00cc00"/><stop offset="1.000" stop-color="#0ccc00"/></linearGradient>
<linearGradient id="g437" gradientUnits="userSpaceOnUse" x1="862.28" y1="576.58" x2="848.49" y2="563.91"><stop offset="0.000" stop-color="#00cc00"/><stop offset="1.000" stop-color="#0ccc00"/></linearGradient>
<linearGradient id="g438" gradientUnits="userSpaceOnUse" x1="824.68" y1="608.95" x2="817.24" y2="600.31"><stop offset="0.000" stop-color="#00cc00"/><stop offset="1.000" stop-color="#0ccc00"/></linearGradient>
<linearGradient id="g439" gradientUnits="userSpaceOnUse" x1="824.68" y1="608.95" x2="818.90" y2="600.78"><stop offset="0.000" stop-color="#00cc00"/><stop offset="1.000" stop-color="#0ccc00"/></linearGradient>
<linearGradient id="g440" gradientUnits="userSpaceOnUse" x1="785.27" y1="639.12" x2="777.81" y2="629.38"><stop offset="0.000" stop-color="#00cc00"/><stop offset="1.000" stop-color="#0ccc00"/></linearGradient>
<linearGradient id="g441" gradientUnits="userSpaceOnUse" x1="785.27" y1="639.12" x2="780.68" y2="630.04"><stop offset="0.000" stop-color="#00cc00"/><stop offset="1.000" stop-color="#0ccc00"/></linearGradient>
<linearGradient id="g442" gradientUnits="userSpaceOnUse" x1="742.07" y1="663.47" x2="735.79" y2="652.34"><stop offset="0.000" stop-color="#00cc00"/><stop offset="1.000" stop-color="#0ccc00"/></linearGradient>
<linearGradient id="g443" gradientUnits="userSpaceOnUse" x1="742.07" y1="663.47" x2="737.07" y2="652.46"><stop offset="0.000" stop-color="#00cc00"/><stop offset="1.000" stop-color="#0ccc00"/></linearGradient>
<linearGradient id="g444" gradientUnits="userSpaceOnUse" x1="698.53" y1="687.31" x2="690.82" y2="673.22"><stop offset="0.000" stop-color="#00cc00"/><stop offset="1.000" stop-color="#0ccc00"/></linearGradient>
<linearGradient id="g445" gradientUnits="userSpaceOnUse" x1="698.53" y1="687.31" x2="692.00" y2="672.92"><stop offset="0.000" stop-color="#00cc00"/><stop offset="1.000" stop-color="#0ccc00"/></linearGradient>
<linearGradient id="g446" gradientUnits="userSpaceOnUse" x1="655.00" y1="711.16" x2="645.66" y2="694.09"><stop offset="0.000" stop-color="#00cc00"/><stop offset="1.000" stop-color="#0ccc00"/></linearGradient>
<linearGradient id="g447" gradientUnits="userSpaceOnUse" x1="655.00" y1="711.16" x2="646.93" y2="693.38"><stop offset="0.000" stop-color="#00cc00"/><stop offset="1.000" stop-color="#0ccc00"/></linearGradient>
<linearGradient id="g448" gradientUnits="userSpaceOnUse" x1="611.47" y1="735.00" x2="600.50" y2="714.97"><stop offset="0.000" stop-color="#00cc00"/><stop offset="1.000" stop-color="#0ccc00"/></linearGradient>
<linearGradient id="g449" gradientUnits="userSpaceOnUse" x1="1166.30" y1="430.40" x2="1144.80" y2="433.62"><stop offset="0.000" stop-color="#0000cc"/><stop offset="1.000" stop-color="#0008cc"/></linearGradient>
<linearGradient id="g450" gradientUnits="userSpaceOnUse" x1="1166.30" y1="430.40" x2="1144.80" y2="433.62"><stop offset="0.000" stop-color="#0000cc"/><stop offset="1.000" stop-color="#0008cc"/></linearGradient>
<linearGradient id="g451" gradientUnits="userSpaceOnUse" x1="1166.30" y1="430.40" x2="1144.80" y2="433.62"><stop offset="0.000" stop-color="#0000cc"/><stop offset="1.000" stop-color="#0008cc"/></linearGradient>
<linearGradient id="g452" gradientUnits="userSpaceOnUse" x1="1166.30" y1="430.40" x2="1144.80" y2="433.62"><stop offset="0.000" stop-color="#0000cc"/><stop offset="1.000" stop-color="#0008cc"/></linearGradient>
<linearGradient id="g453" gradientUnits="userSpaceOnUse" x1="1166.30" y1="430.40" x2="1145.89" y2="452.93"><stop offset="0.000" stop-color="#0000cc"/><stop offset="1.000" stop-color="#0008cc"/></linearGradient>
<linearGradient id="g454" gradientUnits="userSpaceOnUse" x1="1166.30" y1="430.40" x2="1146.33" y2="453.56"><stop offset="0.000" stop-color="#0000cc"/><stop offset="1.000" stop-color="#0008cc"/></linearGradient>
<linearGradient id="g455" gradientUnits="userSpaceOnUse" x1="1166.30" y1="430.40" x2="1146.33" y2="453.56"><stop offset="0.000" stop-color="#0000cc"/><stop offset="1.000" stop-color="#0008cc"/></linearGradient>
<linearGradient id="g456" gradientUnits="userSpaceOnUse" x1="1166.30" y1="430.40" x2="1146.33" y2="453.56"><stop offset="0.000" stop-color="#0000cc"/><stop offset="1.000" stop-color="#0008cc"/></linearGradient>
<linearGradient id="g457" gradientUnits="userSpaceOnUse" x1="1145.00" y1="434.94" x2="1127.84" y2="437.51"><stop offset="0.000" stop-color="#0008cc"/><stop offset="1.000" stop-color="#0029cc"/></linearGradient>
<linearGradient id="g458" gradientUnits="userSpaceOnUse" x1="1145.74" y1="439.91" x2="1128.45" y2="442.11"><stop offset="0.000" stop-color="#0008cc"/><stop offset="1.000" stop-color="#0029cc"/></linearGradient>
<linearGradient id="g459" gradientUnits="userSpaceOnUse" x1="1145.74" y1="439.91" x2="1128.41" y2="442.50"><stop offset="0.000" stop-color="#0008cc"/><stop offset="1.000" stop-color="#0029cc"/></linearGradient>
<linearGradient id="g460" gradientUnits="userSpaceOnUse" x1="1146.49" y1="444.88" x2="1129.08" y2="447.09"><stop offset="0.000" stop-color="#0008cc"/><stop offset="1.000" stop-color="#0029cc"/></linearGradient>
<linearGradient id="g461" gradientUnits="userSpaceOnUse" x1="1146.49" y1="444.88" x2="1128.98" y2="447.50"><stop offset="0.000" stop-color="#0008cc"/><stop offset="1.000" stop-color="#0029cc"/></linearGradient>
<linearGradient id="g462" gradientUnits="userSpaceOnUse" x1="1147.23" y1="449.85" x2="1129.72" y2="452.08"><stop offset="0.000" stop-color="#0008cc"/><stop offset="1.000" stop-color="#0029cc"/></linearGradient>
<linearGradient id="g463" gradientUnits="userSpaceOnUse" x1="1147.23" y1="449.85" x2="1129.55" y2="452.49"><stop offset="0.000" stop-color="#0008cc"/><stop offset="1.000" stop-color="#0029cc"/></linearGradient>
<linearGradient id="g464" gradientUnits="userSpaceOnUse" x1="1147.97" y1="454.82" x2="1130.25" y2="457.88"><stop offset="0.000" stop-color="#0008cc"/><stop offset="1.000" stop-color="#0029cc"/></linearGradient>
<linearGradient id="g465" gradientUnits="userSpaceOnUse" x1="1147.97" y1="454.82" x2="1133.30" y2="471.00"><stop offset="0.000" stop-color="#0008cc"/><stop offset="1.000" stop-color="#0029cc"/></linearGradient>
<linearGradient id="g466" gradientUnits="userSpaceOnUse" x1="1151.66" y1="458.16" x2="1144.17" y2="475.31"><stop offset="0.000" stop-color="#0008cc"/><stop offset="1.000" stop-color="#0029cc"/></linearGradient>
<linearGradient id="g467" gradientUnits="userSpaceOnUse" x1="1151.66" y1="458.16" x2="1139.05" y2="472.79"><stop offset="0.000" stop-color="#0008cc"/><stop offset="1.000" stop-color="#0029cc"/></linearGradient>
<linearGradient id="g468" gradientUnits="userSpaceOnUse" x1="1155.47" y1="461.44" x2="1148.57" y2="477.23"><stop offset="0.000" stop-color="#0008cc"/><stop offset="1.000" stop-color="#0029cc"/></linearGradient>
<linearGradient id="g469" gradientUnits="userSpaceOnUse" x1="1155.47" y1="461.44" x2="1144.40" y2="474.27"><stop offset="0.000" stop-color="#0008cc"/><stop offset="1.000" stop-color="#0029cc"/></linearGradient>
<linearGradient id="g470" gradientUnits="userSpaceOnUse" x1="1159.27" y1="464.72" x2="1152.97" y2="479.15"><stop offset="0.000" stop-color="#0008cc"/><stop offset="1.000" stop-color="#0029cc"/></linearGradient>
<linearGradient id="g471" gradientUnits="userSpaceOnUse" x1="1159.27" y1="464.72" x2="1149.75" y2="475.75"><stop offset="0.000" stop-color="#0008cc"/><stop offset="1.000" stop-color="#0029cc"/></linearGradient>
<linearGradient id="g472" gradientUnits="userSpaceOnUse" x1="1163.07" y1="468.00" x2="1157.37" y2="481.07"><stop offset="0.000" stop-color="#0008cc"/><stop offset="1.000" stop-color="#0029cc"/></linearGradient>
<linearGradient id="g473" gradientUnits="userSpaceOnUse" x1="1128.00" y1="438.57" x2="1104.75" y2="441.53"><stop offset="0.000" stop-color="#0029cc"/><stop offset="1.000" stop-color="#0066cc"/></linearGradient>
<linearGradient id="g474" gradientUnits="userSpaceOnUse" x1="1129.01" y1="446.53" x2="1105.50" y2="448.77"><stop offset="0.000" stop-color="#0029cc"/><stop offset="1.000" stop-color="#0066cc"/></linearGradient>
<linearGradient id="g475" gradientUnits="userSpaceOnUse" x1="1129.01" y1="446.53" x2="1105.41" y2="449.53"><stop offset="0.000" stop-color="#0029cc"/><stop offset="1.000" stop-color="#0066cc"/></linearGradient>
<linearGradient id="g476" gradientUnits="userSpaceOnUse" x1="1130.03" y1="454.49" x2="1106.26" y2="456.75"><stop offset="0.000" stop-color="#0029cc"/><stop offset="1.000" stop-color="#0066cc"/></linearGradient>
<linearGradient id="g477" gradientUnits="userSpaceOnUse" x1="1130.03" y1="454.49" x2="1106.07" y2="457.54"><stop offset="0.000" stop-color="#0029cc"/><stop offset="1.000" stop-color="#0066cc"/></linearGradient>
<linearGradient id="g478" gradientUnits="userSpaceOnUse" x1="1131.04" y1="462.45" x2="1107.99" y2="468.97"><stop offset="0.000" stop-color="#0029cc"/><stop offset="1.000" stop-color="#0066cc"/></linearGradient>
<linearGradient id="g479" gradientUnits="userSpaceOnUse" x1="1131.04" y1="462.45" x2="1108.31" y2="466.38"><stop offset="0.000" stop-color="#0029cc"/><stop offset="1.000" stop-color="#0066cc"/></linearGradient>
<linearGradient id="g480" gradientUnits="userSpaceOnUse" x1="1132.37" y1="470.16" x2="1125.25" y2="483.93"><stop offset="0.000" stop-color="#0029cc"/><stop offset="1.000" stop-color="#0066cc"/></linearGradient>
<linearGradient id="g481" gradientUnits="userSpaceOnUse" x1="1132.37" y1="470.16" x2="1126.34" y2="483.98"><stop offset="0.000" stop-color="#0029cc"/><stop offset="1.000" stop-color="#0066cc"/></linearGradient>
<linearGradient id="g482" gradientUnits="userSpaceOnUse" x1="1139.73" y1="473.37" x2="1132.36" y2="487.61"><stop offset="0.000" stop-color="#0029cc"/><stop offset="1.000" stop-color="#0066cc"/></linearGradient>
<linearGradient id="g483" gradientUnits="userSpaceOnUse" x1="1139.73" y1="473.37" x2="1133.40" y2="487.88"><stop offset="0.000" stop-color="#0029cc"/><stop offset="1.000" stop-color="#0066cc"/></linearGradient>
<linearGradient id="g484" gradientUnits="userSpaceOnUse" x1="1147.08" y1="476.58" x2="1139.47" y2="491.29"><stop offset="0.000" stop-color="#0029cc"/><stop offset="1.000" stop-color="#0066cc"/></linearGradient>
<linearGradient id="g485" gradientUnits="userSpaceOnUse" x1="1147.08" y1="476.58" x2="1140.45" y2="491.77"><stop offset="0.000" stop-color="#0029cc"/><stop offset="1.000" stop-color="#0066cc"/></linearGradient>
<linearGradient id="g486" gradientUnits="userSpaceOnUse" x1="1154.43" y1="479.79" x2="1146.57" y2="494.97"><stop offset="0.000" stop-color="#0029cc"/><stop offset="1.000" stop-color="#0066cc"/></linearGradient>
<linearGradient id="g487" gradientUnits="userSpaceOnUse" x1="1154.43" y1="479.79" x2="1147.51" y2="495.66"><stop offset="0.000" stop-color="#0029cc"/><stop offset="1.000" stop-color="#0066cc"/></linearGradient>
<linearGradient id="g488" gradientUnits="userSpaceOnUse" x1="1161.79" y1="483.00" x2="1153.68" y2="498.65"><stop offset="0.000" stop-color="#0029cc"/><stop offset="1.000" stop-color="#0066cc"/></linearGradient>
<linearGradient id="g489" gradientUnits="userSpaceOnUse" x1="1105.00" y1="443.48" x2="1074.67" y2="446.37"><stop offset="0.000" stop-color="#0066cc"/><stop offset="1.000" stop-color="#00a3cc"/></linearGradient>
<linearGradient id="g490" gradientUnits="userSpaceOnUse" x1="1106.07" y1="454.73" x2="1075.86" y2="457.95"><stop offset="0.000" stop-color="#0066cc"/><stop offset="1.000" stop-color="#00a3cc"/></linearGradient>
<linearGradient id="g491" gradientUnits="userSpaceOnUse" x1="1106.07" y1="454.73" x2="1075.91" y2="457.60"><stop offset="0.000" stop-color="#0066cc"/><stop offset="1.000" stop-color="#00a3cc"/></linearGradient>
<linearGradient id="g492" gradientUnits="userSpaceOnUse" x1="1107.14" y1="465.98" x2="1078.14" y2="472.14"><stop offset="0.000" stop-color="#0066cc"/><stop offset="1.000" stop-color="#00a3cc"/></linearGradient>
<linearGradient id="g493" gradientUnits="userSpaceOnUse" x1="1107.14" y1="465.98" x2="1078.21" y2="474.16"><stop offset="0.000" stop-color="#0066cc"/><stop offset="1.000" stop-color="#00a3cc"/></linearGradient>
<linearGradient id="g494" gradientUnits="userSpaceOnUse" x1="1109.98" y1="476.03" x2="1098.06" y2="492.51"><stop offset="0.000" stop-color="#0066cc"/><stop offset="1.000" stop-color="#00a3cc"/></linearGradient>
<linearGradient id="g495" gradientUnits="userSpaceOnUse" x1="1109.98" y1="476.03" x2="1101.25" y2="492.90"><stop offset="0.000" stop-color="#0066cc"/><stop offset="1.000" stop-color="#00a3cc"/></linearGradient>
<linearGradient id="g496" gradientUnits="userSpaceOnUse" x1="1120.02" y1="481.22" x2="1107.11" y2="499.06"><stop offset="0.000" stop-color="#0066cc"/><stop offset="1.000" stop-color="#00a3cc"/></linearGradient>
<linearGradient id="g497" gradientUnits="userSpaceOnUse" x1="1120.02" y1="481.22" x2="1110.25" y2="500.08"><stop offset="0.000" stop-color="#0066cc"/><stop offset="1.000" stop-color="#00a3cc"/></linearGradient>
<linearGradient id="g498" gradientUnits="userSpaceOnUse" x1="1130.05" y1="486.42" x2="1116.17" y2="505.61"><stop offset="0.000" stop-color="#0066cc"/><stop offset="1.000" stop-color="#00a3cc"/></linearGradient>
<linearGradient id="g499" gradientUnits="userSpaceOnUse" x1="1130.05" y1="486.42" x2="1119.26" y2="507.27"><stop offset="0.000" stop-color="#0066cc"/><stop offset="1.000" stop-color="#00a3cc"/></linearGradient>
<linearGradient id="g500" gradientUnits="userSpaceOnUse" x1="1140.09" y1="491.61" x2="1127.99" y2="512.50"><stop offset="0.000" stop-color="#0066cc"/><stop offset="1.000" stop-color="#00a3cc"/></linearGradient>
<linearGradient id="g501" gradientUnits="userSpaceOnUse" x1="1140.09" y1="491.61" x2="1128.97" y2="513.09"><stop offset="0.000" stop-color="#0066cc"/><stop offset="1.000" stop-color="#00a3cc"/></linearGradient>
<linearGradient id="g502" gradientUnits="userSpaceOnUse" x1="1150.12" y1="496.81" x2="1143.89" y2="517.65"><stop offset="0.000" stop-color="#0066cc"/><stop offset="1.000" stop-color="#00a3cc"/></linearGradient>
<linearGradient id="g503" gradientUnits="userSpaceOnUse" x1="1150.12" y1="496.81" x2="1140.30" y2="515.78"><stop offset="0.000" stop-color="#0066cc"/><stop offset="1.000" stop-color="#00a3cc"/></linearGradient>
<linearGradient id="g504" gradientUnits="userSpaceOnUse" x1="1160.16" y1="502.00" x2="1154.52" y2="520.83"><stop offset="0.000" stop-color="#0066cc"/><stop offset="1.000" stop-color="#00a3cc"/></linearGradient>
<linearGradient id="g505" gradientUnits="userSpaceOnUse" x1="1075.00" y1="449.88" x2="1043.65" y2="453.22"><stop offset="0.000" stop-color="#00a3cc"/><stop offset="1.000" stop-color="#00cccc"/></linearGradient>
<linearGradient id="g506" gradientUnits="userSpaceOnUse" x1="1076.61" y1="464.94" x2="1045.46" y2="468.68"><stop offset="0.000" stop-color="#00a3cc"/><stop offset="1.000" stop-color="#00cccc"/></linearGradient>
<linearGradient id="g507" gradientUnits="userSpaceOnUse" x1="1076.61" y1="464.94" x2="1045.43" y2="471.57"><stop offset="0.000" stop-color="#00a3cc"/><stop offset="1.000" stop-color="#00cccc"/></linearGradient>
<linearGradient id="g508" gradientUnits="userSpaceOnUse" x1="1079.63" y1="479.18" x2="1061.91" y2="494.13"><stop offset="0.000" stop-color="#00a3cc"/><stop offset="1.000" stop-color="#00cccc"/></linearGradient>
<linearGradient id="g509" gradientUnits="userSpaceOnUse" x1="1079.63" y1="479.18" x2="1067.35" y2="496.17"><stop offset="0.000" stop-color="#00a3cc"/><stop offset="1.000" stop-color="#00cccc"/></linearGradient>
<linearGradient id="g510" gradientUnits="userSpaceOnUse" x1="1091.91" y1="488.06" x2="1079.72" y2="505.02"><stop offset="0.000" stop-color="#00a3cc"/><stop offset="1.000" stop-color="#00cccc"/></linearGradient>
<linearGradient id="g511" gradientUnits="userSpaceOnUse" x1="1091.91" y1="488.06" x2="1079.66" y2="505.00"><stop offset="0.000" stop-color="#00a3cc"/><stop offset="1.000" stop-color="#00cccc"/></linearGradient>
<linearGradient id="g512" gradientUnits="userSpaceOnUse" x1="1104.18" y1="496.94" x2="1092.03" y2="513.86"><stop offset="0.000" stop-color="#00a3cc"/><stop offset="1.000" stop-color="#00cccc"/></linearGradient>
<linearGradient id="g513" gradientUnits="userSpaceOnUse" x1="1104.18" y1="496.94" x2="1091.97" y2="513.83"><stop offset="0.000" stop-color="#00a3cc"/><stop offset="1.000" stop-color="#00cccc"/></linearGradient>
<linearGradient id="g514" gradientUnits="userSpaceOnUse" x1="1116.46" y1="505.82" x2="1105.41" y2="522.53"><stop offset="0.000" stop-color="#00a3cc"/><stop offset="1.000" stop-color="#00cccc"/></linearGradient>
<linearGradient id="g515" gradientUnits="userSpaceOnUse" x1="1116.46" y1="505.82" x2="1106.45" y2="523.11"><stop offset="0.000" stop-color="#00a3cc"/><stop offset="1.000" stop-color="#00cccc"/></linearGradient>
<linearGradient id="g516" gradientUnits="userSpaceOnUse" x1="1129.41" y1="513.32" x2="1117.94" y2="530.77"><stop offset="0.000" stop-color="#00a3cc"/><stop offset="1.000" stop-color="#00cccc"/></linearGradient>
<linearGradient id="g517" gradientUnits="userSpaceOnUse" x1="1129.41" y1="513.32" x2="1123.36" y2="533.57"><stop offset="0.000" stop-color="#00a3cc"/><stop offset="1.000" stop-color="#00cccc"/></linearGradient>
<linearGradient id="g518" gradientUnits="userSpaceOnUse" x1="1143.92" y1="517.66" x2="1130.37" y2="538.79"><stop offset="0.000" stop-color="#00a3cc"/><stop offset="1.000" stop-color="#00cccc"/></linearGradient>
<linearGradient id="g519" gradientUnits="userSpaceOnUse" x1="1143.92" y1="517.66" x2="1136.35" y2="542.98"><stop offset="0.000" stop-color="#00a3cc"/><stop offset="1.000" stop-color="#00cccc"/></linearGradient>
<linearGradient id="g520" gradientUnits="userSpaceOnUse" x1="1158.44" y1="522.00" x2="1158.76" y2="542.97"><stop offset="0.000" stop-color="#00a3cc"/><stop offset="1.000" stop-color="#00cccc"/></linearGradient>
<linearGradient id="g521" gradientUnits="userSpaceOnUse" x1="1044.00" y1="456.49" x2="1014.68" y2="460.01"><stop offset="0.000" stop-color="#00cccc"/><stop offset="1.000" stop-color="#00ccab"/></linearGradient>
<linearGradient id="g522" gradientUnits="userSpaceOnUse" x1="1046.29" y1="475.61" x2="1017.30" y2="479.56"><stop offset="0.000" stop-color="#00cccc"/><stop offset="1.000" stop-color="#00ccab"/></linearGradient>
<linearGradient id="g523" gradientUnits="userSpaceOnUse" x1="1046.29" y1="475.61" x2="1025.54" y2="493.11"><stop offset="0.000" stop-color="#00cccc"/><stop offset="1.000" stop-color="#00ccab"/></linearGradient>
<linearGradient id="g524" gradientUnits="userSpaceOnUse" x1="1057.82" y1="489.27" x2="1042.92" y2="506.15"><stop offset="0.000" stop-color="#00cccc"/><stop offset="1.000" stop-color="#00ccab"/></linearGradient>
<linearGradient id="g525" gradientUnits="userSpaceOnUse" x1="1057.82" y1="489.27" x2="1045.37" y2="506.60"><stop offset="0.000" stop-color="#00cccc"/><stop offset="1.000" stop-color="#00ccab"/></linearGradient>
<linearGradient id="g526" gradientUnits="userSpaceOnUse" x1="1073.45" y1="500.51" x2="1057.81" y2="518.73"><stop offset="0.000" stop-color="#00cccc"/><stop offset="1.000" stop-color="#00ccab"/></linearGradient>
<linearGradient id="g527" gradientUnits="userSpaceOnUse" x1="1073.45" y1="500.51" x2="1059.86" y2="519.42"><stop offset="0.000" stop-color="#00cccc"/><stop offset="1.000" stop-color="#00ccab"/></linearGradient>
<linearGradient id="g528" gradientUnits="userSpaceOnUse" x1="1089.09" y1="511.74" x2="1076.26" y2="530.43"><stop offset="0.000" stop-color="#00cccc"/><stop offset="1.000" stop-color="#00ccab"/></linearGradient>
<linearGradient id="g529" gradientUnits="userSpaceOnUse" x1="1089.09" y1="511.74" x2="1076.65" y2="530.55"><stop offset="0.000" stop-color="#00cccc"/><stop offset="1.000" stop-color="#00ccab"/></linearGradient>
<linearGradient id="g530" gradientUnits="userSpaceOnUse" x1="1105.15" y1="522.36" x2="1092.12" y2="541.32"><stop offset="0.000" stop-color="#00cccc"/><stop offset="1.000" stop-color="#00ccab"/></linearGradient>
<linearGradient id="g531" gradientUnits="userSpaceOnUse" x1="1105.15" y1="522.36" x2="1092.54" y2="541.53"><stop offset="0.000" stop-color="#00cccc"/><stop offset="1.000" stop-color="#00ccab"/></linearGradient>
<linearGradient id="g532" gradientUnits="userSpaceOnUse" x1="1121.23" y1="532.94" x2="1116.93" y2="547.60"><stop offset="0.000" stop-color="#00cccc"/><stop offset="1.000" stop-color="#00ccab"/></linearGradient>
<linearGradient id="g533" gradientUnits="userSpaceOnUse" x1="1121.23" y1="532.94" x2="1112.37" y2="546.76"><stop offset="0.000" stop-color="#00cccc"/><stop offset="1.000" stop-color="#00ccab"/></linearGradient>
<linearGradient id="g534" gradientUnits="userSpaceOnUse" x1="1137.39" y1="543.29" x2="1136.33" y2="549.90"><stop offset="0.000" stop-color="#00cccc"/><stop offset="1.000" stop-color="#00ccab"/></linearGradient>
<linearGradient id="g535" gradientUnits="userSpaceOnUse" x1="1137.39" y1="543.29" x2="1137.48" y2="549.36"><stop offset="0.000" stop-color="#00cccc"/><stop offset="1.000" stop-color="#00ccab"/></linearGradient>
<linearGradient id="g536" gradientUnits="userSpaceOnUse" x1="1156.64" y1="543.00" x2="1155.06" y2="552.89"><stop offset="0.000" stop-color="#00cccc"/><stop offset="1.000" stop-color="#00ccab"/></linearGradient>
<linearGradient id="g537" gradientUnits="userSpaceOnUse" x1="1015.00" y1="462.68" x2="984.69" y2="466.81"><stop offset="0.000" stop-color="#00ccab"/><stop offset="1.000" stop-color="#00cc6e"/></linearGradient>
<linearGradient id="g538" gradientUnits="userSpaceOnUse" x1="1017.91" y1="484.07" x2="990.15" y2="490.69"><stop offset="0.000" stop-color="#00ccab"/><stop offset="1.000" stop-color="#00cc6e"/></linearGradient>
<linearGradient id="g539" gradientUnits="userSpaceOnUse" x1="1017.91" y1="484.07" x2="1001.65" y2="502.49"><stop offset="0.000" stop-color="#00ccab"/><stop offset="1.000" stop-color="#00cc6e"/></linearGradient>
<linearGradient id="g540" gradientUnits="userSpaceOnUse" x1="1034.93" y1="499.10" x2="1010.14" y2="518.15"><stop offset="0.000" stop-color="#00ccab"/><stop offset="1.000" stop-color="#00cc6e"/></linearGradient>
<linearGradient id="g541" gradientUnits="userSpaceOnUse" x1="1034.93" y1="499.10" x2="1015.72" y2="521.48"><stop offset="0.000" stop-color="#00ccab"/><stop offset="1.000" stop-color="#00cc6e"/></linearGradient>
<linearGradient id="g542" gradientUnits="userSpaceOnUse" x1="1052.15" y1="513.88" x2="1034.68" y2="535.92"><stop offset="0.000" stop-color="#00ccab"/><stop offset="1.000" stop-color="#00cc6e"/></linearGradient>
<linearGradient id="g543" gradientUnits="userSpaceOnUse" x1="1052.15" y1="513.88" x2="1036.61" y2="536.51"><stop offset="0.000" stop-color="#00ccab"/><stop offset="1.000" stop-color="#00cc6e"/></linearGradient>
<linearGradient id="g544" gradientUnits="userSpaceOnUse" x1="1070.87" y1="526.73" x2="1057.02" y2="548.79"><stop offset="0.000" stop-color="#00ccab"/><stop offset="1.000" stop-color="#00cc6e"/></linearGradient>
<linearGradient id="g545" gradientUnits="userSpaceOnUse" x1="1070.87" y1="526.73" x2="1055.94" y2="548.47"><stop offset="0.000" stop-color="#00ccab"/><stop offset="1.000" stop-color="#00cc6e"/></linearGradient>
<linearGradient id="g546" gradientUnits="userSpaceOnUse" x1="1089.58" y1="539.58" x2="1087.72" y2="550.66"><stop offset="0.000" stop-color="#00ccab"/><stop offset="1.000" stop-color="#00cc6e"/></linearGradient>
<linearGradient id="g547" gradientUnits="userSpaceOnUse" x1="1089.58" y1="539.58" x2="1086.05" y2="551.62"><stop offset="0.000" stop-color="#00ccab"/><stop offset="1.000" stop-color="#00cc6e"/></linearGradient>
<linearGradient id="g548" gradientUnits="userSpaceOnUse" x1="1110.93" y1="545.84" x2="1109.50" y2="554.33"><stop offset="0.000" stop-color="#00ccab"/><stop offset="1.000" stop-color="#00cc6e"/></linearGradient>
<linearGradient id="g549" gradientUnits="userSpaceOnUse" x1="1110.93" y1="545.84" x2="1109.59" y2="554.29"><stop offset="0.000" stop-color="#00ccab"/><stop offset="1.000" stop-color="#00cc6e"/></linearGradient>
<linearGradient id="g550" gradientUnits="userSpaceOnUse" x1="1133.36" y1="549.42" x2="1131.89" y2="558.11"><stop offset="0.000" stop-color="#00ccab"/><stop offset="1.000" stop-color="#00cc6e"/></linearGradient>
<linearGradient id="g551" gradientUnits="userSpaceOnUse" x1="1133.36" y1="549.42" x2="1131.97" y2="558.09"><stop offset="0.000" stop-color="#00ccab"/><stop offset="1.000" stop-color="#00cc6e"/></linearGradient>
<linearGradient id="g552" gradientUnits="userSpaceOnUse" x1="1155.78" y1="553.00" x2="1154.28" y2="561.88"><stop offset="0.000" stop-color="#00ccab"/><stop offset="1.000" stop-color="#00cc6e"/></linearGradient>
<linearGradient id="g553" gradientUnits="userSpaceOnUse" x1="985.00" y1="469.08" x2="945.23" y2="478.56"><stop offset="0.000" stop-color="#00cc6e"/><stop offset="1.000" stop-color="#00cc29"/></linearGradient>
<linearGradient id="g554" gradientUnits="userSpaceOnUse" x1="990.65" y1="492.78" x2="956.96" y2="506.66"><stop offset="0.000" stop-color="#00cc6e"/><stop offset="1.000" stop-color="#00cc29"/></linearGradient>
<linearGradient id="g555" gradientUnits="userSpaceOnUse" x1="990.65" y1="492.78" x2="963.59" y2="513.56"><stop offset="0.000" stop-color="#00cc6e"/><stop offset="1.000" stop-color="#00cc29"/></linearGradient>
<linearGradient id="g556" gradientUnits="userSpaceOnUse" x1="1006.84" y1="513.86" x2="984.16" y2="534.51"><stop offset="0.000" stop-color="#00cc6e"/><stop offset="1.000" stop-color="#00cc29"/></linearGradient>
<linearGradient id="g557" gradientUnits="userSpaceOnUse" x1="1006.84" y1="513.86" x2="989.20" y2="536.14"><stop offset="0.000" stop-color="#00cc6e"/><stop offset="1.000" stop-color="#00cc29"/></linearGradient>
<linearGradient id="g558" gradientUnits="userSpaceOnUse" x1="1027.74" y1="530.42" x2="1010.53" y2="552.55"><stop offset="0.000" stop-color="#00cc6e"/><stop offset="1.000" stop-color="#00cc29"/></linearGradient>
<linearGradient id="g559" gradientUnits="userSpaceOnUse" x1="1027.74" y1="530.42" x2="1013.57" y2="553.00"><stop offset="0.000" stop-color="#00cc6e"/><stop offset="1.000" stop-color="#00cc29"/></linearGradient>
<linearGradient id="g560" gradientUnits="userSpaceOnUse" x1="1049.84" y1="544.28" x2="1045.73" y2="558.23"><stop offset="0.000" stop-color="#00cc6e"/><stop offset="1.000" stop-color="#00cc29"/></linearGradient>
<linearGradient id="g561" gradientUnits="userSpaceOnUse" x1="1049.84" y1="544.28" x2="1047.74" y2="556.72"><stop offset="0.000" stop-color="#00cc6e"/><stop offset="1.000" stop-color="#00cc29"/></linearGradient>
<linearGradient id="g562" gradientUnits="userSpaceOnUse" x1="1076.13" y1="548.71" x2="1071.13" y2="565.70"><stop offset="0.000" stop-color="#00cc6e"/><stop offset="1.000" stop-color="#00cc29"/></linearGradient>
<linearGradient id="g563" gradientUnits="userSpaceOnUse" x1="1076.13" y1="548.71" x2="1073.41" y2="564.83"><stop offset="0.000" stop-color="#00cc6e"/><stop offset="1.000" stop-color="#00cc29"/></linearGradient>
<linearGradient id="g564" gradientUnits="userSpaceOnUse" x1="1102.42" y1="553.14" x2="1096.53" y2="573.18"><stop offset="0.000" stop-color="#00cc6e"/><stop offset="1.000" stop-color="#00cc29"/></linearGradient>
<linearGradient id="g565" gradientUnits="userSpaceOnUse" x1="1102.42" y1="553.14" x2="1099.08" y2="572.95"><stop offset="0.000" stop-color="#00cc6e"/><stop offset="1.000" stop-color="#00cc29"/></linearGradient>
<linearGradient id="g566" gradientUnits="userSpaceOnUse" x1="1128.71" y1="557.57" x2="1126.52" y2="575.87"><stop offset="0.000" stop-color="#00cc6e"/><stop offset="1.000" stop-color="#00cc29"/></linearGradient>
<linearGradient id="g567" gradientUnits="userSpaceOnUse" x1="1128.71" y1="557.57" x2="1125.62" y2="575.92"><stop offset="0.000" stop-color="#00cc6e"/><stop offset="1.000" stop-color="#00cc29"/></linearGradient>
<linearGradient id="g568" gradientUnits="userSpaceOnUse" x1="1155.01" y1="562.00" x2="1154.22" y2="577.03"><stop offset="0.000" stop-color="#00cc6e"/><stop offset="1.000" stop-color="#00cc29"/></linearGradient>
<linearGradient id="g569" gradientUnits="userSpaceOnUse" x1="945.00" y1="477.62" x2="917.10" y2="489.11"><stop offset="0.000" stop-color="#00cc29"/><stop offset="1.000" stop-color="#00cc0c"/></linearGradient>
<linearGradient id="g570" gradientUnits="userSpaceOnUse" x1="955.44" y1="502.95" x2="931.37" y2="515.47"><stop offset="0.000" stop-color="#00cc29"/><stop offset="1.000" stop-color="#00cc0c"/></linearGradient>
<linearGradient id="g571" gradientUnits="userSpaceOnUse" x1="955.44" y1="502.95" x2="937.49" y2="519.28"><stop offset="0.000" stop-color="#00cc29"/><stop offset="1.000" stop-color="#00cc0c"/></linearGradient>
<linearGradient id="g572" gradientUnits="userSpaceOnUse" x1="976.46" y1="526.05" x2="954.61" y2="543.06"><stop offset="0.000" stop-color="#00cc29"/><stop offset="1.000" stop-color="#00cc0c"/></linearGradient>
<linearGradient id="g573" gradientUnits="userSpaceOnUse" x1="976.46" y1="526.05" x2="961.22" y2="545.64"><stop offset="0.000" stop-color="#00cc29"/><stop offset="1.000" stop-color="#00cc0c"/></linearGradient>
<linearGradient id="g574" gradientUnits="userSpaceOnUse" x1="1000.86" y1="545.02" x2="994.36" y2="558.36"><stop offset="0.000" stop-color="#00cc29"/><stop offset="1.000" stop-color="#00cc0c"/></linearGradient>
<linearGradient id="g575" gradientUnits="userSpaceOnUse" x1="1000.86" y1="545.02" x2="997.46" y2="556.58"><stop offset="0.000" stop-color="#00cc29"/><stop offset="1.000" stop-color="#00cc0c"/></linearGradient>
<linearGradient id="g576" gradientUnits="userSpaceOnUse" x1="1031.01" y1="553.90" x2="1026.85" y2="566.67"><stop offset="0.000" stop-color="#00cc29"/><stop offset="1.000" stop-color="#00cc0c"/></linearGradient>
<linearGradient id="g577" gradientUnits="userSpaceOnUse" x1="1031.01" y1="553.90" x2="1027.32" y2="566.41"><stop offset="0.000" stop-color="#00cc29"/><stop offset="1.000" stop-color="#00cc0c"/></linearGradient>
<linearGradient id="g578" gradientUnits="userSpaceOnUse" x1="1061.15" y1="562.77" x2="1056.73" y2="576.39"><stop offset="0.000" stop-color="#00cc29"/><stop offset="1.000" stop-color="#00cc0c"/></linearGradient>
<linearGradient id="g579" gradientUnits="userSpaceOnUse" x1="1061.15" y1="562.77" x2="1057.19" y2="576.24"><stop offset="0.000" stop-color="#00cc29"/><stop offset="1.000" stop-color="#00cc0c"/></linearGradient>
<linearGradient id="g580" gradientUnits="userSpaceOnUse" x1="1091.30" y1="571.64" x2="1090.36" y2="578.94"><stop offset="0.000" stop-color="#00cc29"/><stop offset="1.000" stop-color="#00cc0c"/></linearGradient>
<linearGradient id="g581" gradientUnits="userSpaceOnUse" x1="1091.30" y1="571.64" x2="1090.44" y2="578.88"><stop offset="0.000" stop-color="#00cc29"/><stop offset="1.000" stop-color="#00cc0c"/></linearGradient>
<linearGradient id="g582" gradientUnits="userSpaceOnUse" x1="1122.33" y1="575.36" x2="1121.53" y2="582.40"><stop offset="0.000" stop-color="#00cc29"/><stop offset="1.000" stop-color="#00cc0c"/></linearGradient>
<linearGradient id="g583" gradientUnits="userSpaceOnUse" x1="1122.33" y1="575.36" x2="1121.98" y2="582.19"><stop offset="0.000" stop-color="#00cc29"/><stop offset="1.000" stop-color="#00cc0c"/></linearGradient>
<linearGradient id="g584" gradientUnits="userSpaceOnUse" x1="1153.72" y1="577.00" x2="1152.69" y2="585.97"><stop offset="0.000" stop-color="#00cc29"/><stop offset="1.000" stop-color="#00cc0c"/></linearGradient>
<linearGradient id="g585" gradientUnits="userSpaceOnUse" x1="915.00" y1="484.02" x2="897.51" y2="493.11"><stop offset="0.000" stop-color="#00cc0c"/><stop offset="1.000" stop-color="#00cc00"/></linearGradient>
<linearGradient id="g586" gradientUnits="userSpaceOnUse" x1="927.83" y1="508.68" x2="900.20" y2="514.22"><stop offset="0.000" stop-color="#00cc0c"/><stop offset="1.000" stop-color="#00cc00"/></linearGradient>
<linearGradient id="g587" gradientUnits="userSpaceOnUse" x1="927.83" y1="508.68" x2="909.08" y2="523.28"><stop offset="0.000" stop-color="#00cc0c"/><stop offset="1.000" stop-color="#00cc00"/></linearGradient>
<linearGradient id="g588" gradientUnits="userSpaceOnUse" x1="949.54" y1="536.55" x2="931.10" y2="551.07"><stop offset="0.000" stop-color="#00cc0c"/><stop offset="1.000" stop-color="#00cc00"/></linearGradient>
<linearGradient id="g589" gradientUnits="userSpaceOnUse" x1="949.54" y1="536.55" x2="942.49" y2="551.02"><stop offset="0.000" stop-color="#00cc0c"/><stop offset="1.000" stop-color="#00cc00"/></linearGradient>
<linearGradient id="g590" gradientUnits="userSpaceOnUse" x1="980.37" y1="551.55" x2="974.86" y2="564.20"><stop offset="0.000" stop-color="#00cc0c"/><stop offset="1.000" stop-color="#00cc00"/></linearGradient>
<linearGradient id="g591" gradientUnits="userSpaceOnUse" x1="980.37" y1="551.55" x2="976.61" y2="563.12"><stop offset="0.000" stop-color="#00cc0c"/><stop offset="1.000" stop-color="#00cc00"/></linearGradient>
<linearGradient id="g592" gradientUnits="userSpaceOnUse" x1="1014.01" y1="562.49" x2="1007.85" y2="577.43"><stop offset="0.000" stop-color="#00cc0c"/><stop offset="1.000" stop-color="#00cc00"/></linearGradient>
<linearGradient id="g593" gradientUnits="userSpaceOnUse" x1="1014.01" y1="562.49" x2="1009.31" y2="576.92"><stop offset="0.000" stop-color="#00cc0c"/><stop offset="1.000" stop-color="#00cc00"/></linearGradient>
<linearGradient id="g594" gradientUnits="userSpaceOnUse" x1="1047.64" y1="573.43" x2="1045.46" y2="583.42"><stop offset="0.000" stop-color="#00cc0c"/><stop offset="1.000" stop-color="#00cc00"/></linearGradient>
<linearGradient id="g595" gradientUnits="userSpaceOnUse" x1="1047.64" y1="573.43" x2="1046.46" y2="582.62"><stop offset="0.000" stop-color="#00cc0c"/><stop offset="1.000" stop-color="#00cc00"/></linearGradient>
<linearGradient id="g596" gradientUnits="userSpaceOnUse" x1="1082.67" y1="577.94" x2="1080.26" y2="590.12"><stop offset="0.000" stop-color="#00cc0c"/><stop offset="1.000" stop-color="#00cc00"/></linearGradient>
<linearGradient id="g597" gradientUnits="userSpaceOnUse" x1="1082.67" y1="577.94" x2="1081.32" y2="589.69"><stop offset="0.000" stop-color="#00cc0c"/><stop offset="1.000" stop-color="#00cc00"/></linearGradient>
<linearGradient id="g598" gradientUnits="userSpaceOnUse" x1="1117.81" y1="581.97" x2="1114.83" y2="596.98"><stop offset="0.000" stop-color="#00cc0c"/><stop offset="1.000" stop-color="#00cc00"/></linearGradient>
<linearGradient id="g599" gradientUnits="userSpaceOnUse" x1="1117.81" y1="581.97" x2="1116.09" y2="596.92"><stop offset="0.000" stop-color="#00cc0c"/><stop offset="1.000" stop-color="#00cc00"/></linearGradient>
<linearGradient id="g600" gradientUnits="userSpaceOnUse" x1="1152.95" y1="586.00" x2="1151.70" y2="600.00"><stop offset="0.000" stop-color="#00cc0c"/><stop offset="1.000" stop-color="#00cc00"/></linearGradient>
<clipPath id="c601"><polygon points="539.1,364.2 576.0,372.9 607.3,527.1 569.0,559.6"/></clipPath>
<linearGradient id="g602" gradientUnits="userSpaceOnUse" x1="574.23" y1="359.41" x2="536.21" y2="365.23"><stop offset="0.000" stop-color="#931500"/><stop offset="1.000" stop-color="#930000"/></linearGradient>
<linearGradient id="g603" gradientUnits="userSpaceOnUse" x1="574.23" y1="359.41" x2="526.80" y2="369.06"><stop offset="0.000" stop-color="#931500"/><stop offset="1.000" stop-color="#930000"/></linearGradient>
<clipPath id="c604"><polygon points="539.3,365.8 1016.7,274.3 998.3,293.7 576.3,374.5"/></clipPath>
<linearGradient id="g605" gradientUnits="userSpaceOnUse" x1="537.30" y1="385.12" x2="533.21" y2="363.81"><stop offset="0.000" stop-color="#931500"/><stop offset="1.000" stop-color="#930000"/></linearGradient>
<linearGradient id="g606" gradientUnits="userSpaceOnUse" x1="537.30" y1="385.12" x2="533.22" y2="363.81"><stop offset="0.000" stop-color="#931500"/><stop offset="1.000" stop-color="#930000"/></linearGradient>
<linearGradient id="g607" gradientUnits="userSpaceOnUse" x1="544.30" y1="383.78" x2="540.21" y2="362.47"><stop offset="0.000" stop-color="#931500"/><stop offset="1.000" stop-color="#930000"/></linearGradient>
<linearGradient id="g608" gradientUnits="userSpaceOnUse" x1="544.30" y1="383.78" x2="540.22" y2="362.46"><stop offset="0.000" stop-color="#931500"/><stop offset="1.000" stop-color="#930000"/></linearGradient>
<linearGradient id="g609" gradientUnits="userSpaceOnUse" x1="551.30" y1="382.44" x2="547.21" y2="361.13"><stop offset="0.000" stop-color="#931500"/><stop offset="1.000" stop-color="#930000"/></linearGradient>
<linearGradient id="g610" gradientUnits="userSpaceOnUse" x1="551.30" y1="382.44" x2="547.22" y2="361.12"><stop offset="0.000" stop-color="#931500"/><stop offset="1.000" stop-color="#930000"/></linearGradient>
<linearGradient id="g611" gradientUnits="userSpaceOnUse" x1="558.30" y1="381.10" x2="547.31" y2="371.21"><stop offset="0.000" stop-color="#931500"/><stop offset="1.000" stop-color="#930000"/></linearGradient>
<linearGradient id="g612" gradientUnits="userSpaceOnUse" x1="558.30" y1="381.10" x2="554.22" y2="359.78"><stop offset="0.000" stop-color="#931500"/><stop offset="1.000" stop-color="#930600"/></linearGradient>
<linearGradient id="g613" gradientUnits="userSpaceOnUse" x1="565.30" y1="379.76" x2="556.20" y2="374.99"><stop offset="0.000" stop-color="#931500"/><stop offset="1.000" stop-color="#930600"/></linearGradient>
<linearGradient id="g614" gradientUnits="userSpaceOnUse" x1="565.30" y1="379.76" x2="561.22" y2="358.44"><stop offset="0.000" stop-color="#931500"/><stop offset="1.000" stop-color="#930e00"/></linearGradient>
<linearGradient id="g615" gradientUnits="userSpaceOnUse" x1="579.30" y1="354.98" x2="573.04" y2="353.39"><stop offset="0.000" stop-color="#931600"/><stop offset="1.000" stop-color="#930e00"/></linearGradient>
<linearGradient id="g616" gradientUnits="userSpaceOnUse" x1="579.30" y1="377.08" x2="573.05" y2="375.48"><stop offset="0.000" stop-color="#931d00"/><stop offset="1.000" stop-color="#931500"/></linearGradient>
<linearGradient id="g617" gradientUnits="userSpaceOnUse" x1="586.30" y1="353.63" x2="580.06" y2="352.03"><stop offset="0.000" stop-color="#931e00"/><stop offset="1.000" stop-color="#931600"/></linearGradient>
<linearGradient id="g618" gradientUnits="userSpaceOnUse" x1="586.30" y1="375.74" x2="580.16" y2="374.02"><stop offset="0.000" stop-color="#933000"/><stop offset="1.000" stop-color="#931d00"/></linearGradient>
<linearGradient id="g619" gradientUnits="userSpaceOnUse" x1="586.30" y1="375.74" x2="580.02" y2="373.78"><stop offset="0.000" stop-color="#933000"/><stop offset="1.000" stop-color="#931e00"/></linearGradient>
<linearGradient id="g620" gradientUnits="userSpaceOnUse" x1="593.30" y1="374.40" x2="587.06" y2="372.47"><stop offset="0.000" stop-color="#934600"/><stop offset="1.000" stop-color="#933000"/></linearGradient>
<linearGradient id="g621" gradientUnits="userSpaceOnUse" x1="593.30" y1="374.40" x2="585.92" y2="371.58"><stop offset="0.000" stop-color="#934600"/><stop offset="1.000" stop-color="#933000"/></linearGradient>
<linearGradient id="g622" gradientUnits="userSpaceOnUse" x1="600.30" y1="373.06" x2="593.27" y2="370.54"><stop offset="0.000" stop-color="#935f00"/><stop offset="1.000" stop-color="#934100"/></linearGradient>
<linearGradient id="g623" gradientUnits="userSpaceOnUse" x1="600.30" y1="373.06" x2="591.41" y2="368.58"><stop offset="0.000" stop-color="#935f00"/><stop offset="1.000" stop-color="#934100"/></linearGradient>
<linearGradient id="g624" gradientUnits="userSpaceOnUse" x1="607.30" y1="371.72" x2="598.31" y2="367.10"><stop offset="0.000" stop-color="#936e00"/><stop offset="1.000" stop-color="#935200"/></linearGradient>
<linearGradient id="g625" gradientUnits="userSpaceOnUse" x1="607.30" y1="371.72" x2="597.62" y2="366.01"><stop offset="0.000" stop-color="#936e00"/><stop offset="1.000" stop-color="#935200"/></linearGradient>
<linearGradient id="g626" gradientUnits="userSpaceOnUse" x1="614.30" y1="370.38" x2="604.95" y2="365.24"><stop offset="0.000" stop-color="#937e00"/><stop offset="1.000" stop-color="#935f00"/></linearGradient>
<linearGradient id="g627" gradientUnits="userSpaceOnUse" x1="614.30" y1="370.38" x2="604.32" y2="364.08"><stop offset="0.000" stop-color="#937e00"/><stop offset="1.000" stop-color="#935f00"/></linearGradient>
<linearGradient id="g628" gradientUnits="userSpaceOnUse" x1="621.30" y1="369.04" x2="610.74" y2="361.29"><stop offset="0.000" stop-color="#938900"/><stop offset="1.000" stop-color="#936d00"/></linearGradient>
<linearGradient id="g629" gradientUnits="userSpaceOnUse" x1="621.30" y1="369.04" x2="611.54" y2="363.18"><stop offset="0.000" stop-color="#938900"/><stop offset="1.000" stop-color="#936d00"/></linearGradient>
<linearGradient id="g630" gradientUnits="userSpaceOnUse" x1="628.30" y1="367.70" x2="617.43" y2="354.62"><stop offset="0.000" stop-color="#938c00"/><stop offset="1.000" stop-color="#937a00"/></linearGradient>
<linearGradient id="g631" gradientUnits="userSpaceOnUse" x1="628.30" y1="367.70" x2="618.84" y2="362.37"><stop offset="0.000" stop-color="#938c00"/><stop offset="1.000" stop-color="#937a00"/></linearGradient>
<linearGradient id="g632" gradientUnits="userSpaceOnUse" x1="635.30" y1="366.36" x2="624.29" y2="356.39"><stop offset="0.000" stop-color="#939000"/><stop offset="1.000" stop-color="#938300"/></linearGradient>
<linearGradient id="g633" gradientUnits="userSpaceOnUse" x1="635.30" y1="366.36" x2="627.56" y2="363.20"><stop offset="0.000" stop-color="#939000"/><stop offset="1.000" stop-color="#938300"/></linearGradient>
<linearGradient id="g634" gradientUnits="userSpaceOnUse" x1="642.30" y1="365.02" x2="632.55" y2="359.19"><stop offset="0.000" stop-color="#929300"/><stop offset="0.108" stop-color="#939300"/><stop offset="1.000" stop-color="#938c00"/></linearGradient>
<linearGradient id="g635" gradientUnits="userSpaceOnUse" x1="649.30" y1="341.56" x2="643.06" y2="339.95"><stop offset="0.000" stop-color="#919300"/><stop offset="0.237" stop-color="#939300"/><stop offset="1.000" stop-color="#938c00"/></linearGradient>
<linearGradient id="g636" gradientUnits="userSpaceOnUse" x1="649.30" y1="363.68" x2="642.65" y2="362.69"><stop offset="0.000" stop-color="#909300"/><stop offset="1.000" stop-color="#929300"/></linearGradient>
<linearGradient id="g637" gradientUnits="userSpaceOnUse" x1="656.30" y1="340.21" x2="649.40" y2="339.81"><stop offset="0.000" stop-color="#8b9300"/><stop offset="1.000" stop-color="#919300"/></linearGradient>
<linearGradient id="g638" gradientUnits="userSpaceOnUse" x1="656.30" y1="340.21" x2="642.52" y2="345.29"><stop offset="0.000" stop-color="#8b9300"/><stop offset="1.000" stop-color="#909300"/></linearGradient>
<linearGradient id="g639" gradientUnits="userSpaceOnUse" x1="663.30" y1="338.87" x2="653.27" y2="340.25"><stop offset="0.000" stop-color="#859300"/><stop offset="1.000" stop-color="#8d9300"/></linearGradient>
<linearGradient id="g640" gradientUnits="userSpaceOnUse" x1="663.30" y1="338.87" x2="654.78" y2="339.44"><stop offset="0.000" stop-color="#859300"/><stop offset="1.000" stop-color="#8d9300"/></linearGradient>
<linearGradient id="g641" gradientUnits="userSpaceOnUse" x1="670.30" y1="337.53" x2="661.83" y2="338.07"><stop offset="0.000" stop-color="#7e9300"/><stop offset="1.000" stop-color="#869300"/></linearGradient>
<linearGradient id="g642" gradientUnits="userSpaceOnUse" x1="670.30" y1="337.53" x2="663.14" y2="337.58"><stop offset="0.000" stop-color="#7e9300"/><stop offset="1.000" stop-color="#869300"/></linearGradient>
<linearGradient id="g643" gradientUnits="userSpaceOnUse" x1="677.30" y1="336.19" x2="670.16" y2="336.23"><stop offset="0.000" stop-color="#749300"/><stop offset="1.000" stop-color="#7e9300"/></linearGradient>
<linearGradient id="g644" gradientUnits="userSpaceOnUse" x1="677.30" y1="336.19" x2="668.93" y2="336.69"><stop offset="0.000" stop-color="#749300"/><stop offset="1.000" stop-color="#7e9300"/></linearGradient>
<linearGradient id="g645" gradientUnits="userSpaceOnUse" x1="684.30" y1="334.85" x2="676.12" y2="335.26"><stop offset="0.000" stop-color="#6a9300"/><stop offset="1.000" stop-color="#769300"/></linearGradient>
<linearGradient id="g646" gradientUnits="userSpaceOnUse" x1="684.30" y1="334.85" x2="676.12" y2="335.26"><stop offset="0.000" stop-color="#6a9300"/><stop offset="1.000" stop-color="#769300"/></linearGradient>
<linearGradient id="g647" gradientUnits="userSpaceOnUse" x1="691.30" y1="333.50" x2="683.14" y2="333.91"><stop offset="0.000" stop-color="#609300"/><stop offset="1.000" stop-color="#6c9300"/></linearGradient>
<linearGradient id="g648" gradientUnits="userSpaceOnUse" x1="691.30" y1="333.50" x2="683.71" y2="333.70"><stop offset="0.000" stop-color="#609300"/><stop offset="1.000" stop-color="#6c9300"/></linearGradient>
<linearGradient id="g649" gradientUnits="userSpaceOnUse" x1="698.30" y1="332.16" x2="690.69" y2="332.36"><stop offset="0.000" stop-color="#569300"/><stop offset="1.000" stop-color="#619300"/></linearGradient>
<linearGradient id="g650" gradientUnits="userSpaceOnUse" x1="698.30" y1="332.16" x2="690.97" y2="332.27"><stop offset="0.000" stop-color="#569300"/><stop offset="1.000" stop-color="#619300"/></linearGradient>
<linearGradient id="g651" gradientUnits="userSpaceOnUse" x1="705.30" y1="330.82" x2="697.96" y2="330.93"><stop offset="0.000" stop-color="#4c9300"/><stop offset="1.000" stop-color="#579300"/></linearGradient>
<linearGradient id="g652" gradientUnits="userSpaceOnUse" x1="705.30" y1="330.82" x2="698.24" y2="330.84"><stop offset="0.000" stop-color="#4c9300"/><stop offset="1.000" stop-color="#579300"/></linearGradient>
<linearGradient id="g653" gradientUnits="userSpaceOnUse" x1="712.30" y1="329.48" x2="705.23" y2="329.50"><stop offset="0.000" stop-color="#429300"/><stop offset="1.000" stop-color="#4c9300"/></linearGradient>
<linearGradient id="g654" gradientUnits="userSpaceOnUse" x1="712.30" y1="329.48" x2="704.63" y2="329.70"><stop offset="0.000" stop-color="#429300"/><stop offset="1.000" stop-color="#4c9300"/></linearGradient>
<linearGradient id="g655" gradientUnits="userSpaceOnUse" x1="719.30" y1="328.14" x2="711.60" y2="328.37"><stop offset="0.000" stop-color="#3a9300"/><stop offset="1.000" stop-color="#439300"/></linearGradient>
<linearGradient id="g656" gradientUnits="userSpaceOnUse" x1="719.30" y1="328.14" x2="711.24" y2="328.51"><stop offset="0.000" stop-color="#3a9300"/><stop offset="1.000" stop-color="#439300"/></linearGradient>
<linearGradient id="g657" gradientUnits="userSpaceOnUse" x1="726.30" y1="326.79" x2="718.28" y2="327.15"><stop offset="0.000" stop-color="#329300"/><stop offset="1.000" stop-color="#3b9300"/></linearGradient>
<linearGradient id="g658" gradientUnits="userSpaceOnUse" x1="726.30" y1="326.79" x2="717.96" y2="327.28"><stop offset="0.000" stop-color="#329300"/><stop offset="1.000" stop-color="#3b9300"/></linearGradient>
<linearGradient id="g659" gradientUnits="userSpaceOnUse" x1="733.30" y1="325.45" x2="724.81" y2="326.01"><stop offset="0.000" stop-color="#2a9300"/><stop offset="1.000" stop-color="#339300"/></linearGradient>
<linearGradient id="g660" gradientUnits="userSpaceOnUse" x1="733.30" y1="325.45" x2="725.72" y2="325.64"><stop offset="0.000" stop-color="#2a9300"/><stop offset="1.000" stop-color="#339300"/></linearGradient>
<linearGradient id="g661" gradientUnits="userSpaceOnUse" x1="740.30" y1="324.11" x2="732.65" y2="324.32"><stop offset="0.000" stop-color="#239300"/><stop offset="1.000" stop-color="#2b9300"/></linearGradient>
<linearGradient id="g662" gradientUnits="userSpaceOnUse" x1="740.30" y1="346.26" x2="733.30" y2="346.25"><stop offset="0.000" stop-color="#239300"/><stop offset="1.000" stop-color="#2b9300"/></linearGradient>
<linearGradient id="g663" gradientUnits="userSpaceOnUse" x1="747.30" y1="322.77" x2="740.30" y2="322.75"><stop offset="0.000" stop-color="#1c9300"/><stop offset="1.000" stop-color="#239300"/></linearGradient>
<linearGradient id="g664" gradientUnits="userSpaceOnUse" x1="747.30" y1="322.77" x2="736.55" y2="324.63"><stop offset="0.000" stop-color="#1c9300"/><stop offset="1.000" stop-color="#239300"/></linearGradient>
<linearGradient id="g665" gradientUnits="userSpaceOnUse" x1="754.30" y1="321.43" x2="744.81" y2="322.48"><stop offset="0.000" stop-color="#159300"/><stop offset="1.000" stop-color="#1e9300"/></linearGradient>
<linearGradient id="g666" gradientUnits="userSpaceOnUse" x1="754.30" y1="321.43" x2="740.58" y2="326.41"><stop offset="0.000" stop-color="#159300"/><stop offset="1.000" stop-color="#1e9300"/></linearGradient>
<linearGradient id="g667" gradientUnits="userSpaceOnUse" x1="761.30" y1="320.09" x2="749.09" y2="323.21"><stop offset="0.000" stop-color="#0e9300"/><stop offset="1.000" stop-color="#1a9300"/></linearGradient>
<linearGradient id="g668" gradientUnits="userSpaceOnUse" x1="761.30" y1="320.09" x2="746.24" y2="327.75"><stop offset="0.000" stop-color="#0e9300"/><stop offset="1.000" stop-color="#1a9300"/></linearGradient>
<linearGradient id="g669" gradientUnits="userSpaceOnUse" x1="768.30" y1="318.74" x2="752.54" y2="330.15"><stop offset="0.000" stop-color="#0b9300"/><stop offset="1.000" stop-color="#159300"/></linearGradient>
<linearGradient id="g670" gradientUnits="userSpaceOnUse" x1="768.30" y1="318.74" x2="754.08" y2="324.54"><stop offset="0.000" stop-color="#0b9300"/><stop offset="1.000" stop-color="#159300"/></linearGradient>
<linearGradient id="g671" gradientUnits="userSpaceOnUse" x1="775.30" y1="317.40" x2="759.88" y2="326.28"><stop offset="0.000" stop-color="#079300"/><stop offset="1.000" stop-color="#109300"/></linearGradient>
<linearGradient id="g672" gradientUnits="userSpaceOnUse" x1="775.30" y1="317.40" x2="762.05" y2="321.72"><stop offset="0.000" stop-color="#079300"/><stop offset="1.000" stop-color="#109300"/></linearGradient>
<linearGradient id="g673" gradientUnits="userSpaceOnUse" x1="782.30" y1="316.06" x2="767.72" y2="322.56"><stop offset="0.000" stop-color="#049300"/><stop offset="1.000" stop-color="#0c9300"/></linearGradient>
<linearGradient id="g674" gradientUnits="userSpaceOnUse" x1="782.30" y1="316.06" x2="766.89" y2="330.72"><stop offset="0.000" stop-color="#049300"/><stop offset="1.000" stop-color="#0c9300"/></linearGradient>
<linearGradient id="g675" gradientUnits="userSpaceOnUse" x1="789.30" y1="314.72" x2="773.86" y2="323.67"><stop offset="0.000" stop-color="#009300"/><stop offset="1.000" stop-color="#099300"/></linearGradient>
<linearGradient id="g676" gradientUnits="userSpaceOnUse" x1="789.30" y1="314.72" x2="774.87" y2="332.03"><stop offset="0.000" stop-color="#009300"/><stop offset="1.000" stop-color="#099300"/></linearGradient>
<linearGradient id="g677" gradientUnits="userSpaceOnUse" x1="796.30" y1="313.38" x2="797.08" y2="336.62"><stop offset="0.000" stop-color="#009300"/><stop offset="1.000" stop-color="#079300"/></linearGradient>
<linearGradient id="g678" gradientUnits="userSpaceOnUse" x1="796.30" y1="313.38" x2="780.59" y2="326.25"><stop offset="0.000" stop-color="#009300"/><stop offset="1.000" stop-color="#079300"/></linearGradient>
<linearGradient id="g679" gradientUnits="userSpaceOnUse" x1="803.30" y1="312.03" x2="788.03" y2="327.22"><stop offset="0.000" stop-color="#009302"/><stop offset="0.274" stop-color="#009300"/><stop offset="1.000" stop-color="#059300"/></linearGradient>
<linearGradient id="g680" gradientUnits="userSpaceOnUse" x1="803.30" y1="312.03" x2="787.54" y2="323.95"><stop offset="0.000" stop-color="#009302"/><stop offset="0.274" stop-color="#009300"/><stop offset="1.000" stop-color="#059300"/></linearGradient>
<linearGradient id="g681" gradientUnits="userSpaceOnUse" x1="810.30" y1="310.69" x2="796.21" y2="316.25"><stop offset="0.000" stop-color="#009306"/><stop offset="0.680" stop-color="#009300"/><stop offset="1.000" stop-color="#039300"/></linearGradient>
<linearGradient id="g682" gradientUnits="userSpaceOnUse" x1="810.30" y1="310.69" x2="795.45" y2="327.10"><stop offset="0.000" stop-color="#009306"/><stop offset="0.680" stop-color="#009300"/><stop offset="1.000" stop-color="#039300"/></linearGradient>
<linearGradient id="g683" gradientUnits="userSpaceOnUse" x1="817.30" y1="309.35" x2="801.94" y2="317.98"><stop offset="0.000" stop-color="#00930a"/><stop offset="0.948" stop-color="#009300"/><stop offset="1.000" stop-color="#019300"/></linearGradient>
<linearGradient id="g684" gradientUnits="userSpaceOnUse" x1="817.30" y1="309.35" x2="801.64" y2="322.72"><stop offset="0.000" stop-color="#00930a"/><stop offset="0.948" stop-color="#009300"/><stop offset="1.000" stop-color="#019300"/></linearGradient>
<linearGradient id="g685" gradientUnits="userSpaceOnUse" x1="824.30" y1="308.01" x2="808.64" y2="318.13"><stop offset="0.000" stop-color="#00930e"/><stop offset="1.000" stop-color="#009303"/></linearGradient>
<linearGradient id="g686" gradientUnits="userSpaceOnUse" x1="824.30" y1="308.01" x2="808.61" y2="321.19"><stop offset="0.000" stop-color="#00930e"/><stop offset="1.000" stop-color="#009303"/></linearGradient>
<linearGradient id="g687" gradientUnits="userSpaceOnUse" x1="831.30" y1="306.67" x2="815.55" y2="317.76"><stop offset="0.000" stop-color="#009312"/><stop offset="1.000" stop-color="#009306"/></linearGradient>
<linearGradient id="g688" gradientUnits="userSpaceOnUse" x1="831.30" y1="306.67" x2="815.77" y2="320.83"><stop offset="0.000" stop-color="#009312"/><stop offset="1.000" stop-color="#009306"/></linearGradient>
<linearGradient id="g689" gradientUnits="userSpaceOnUse" x1="838.30" y1="305.32" x2="823.32" y2="312.75"><stop offset="0.000" stop-color="#009318"/><stop offset="1.000" stop-color="#009309"/></linearGradient>
<linearGradient id="g690" gradientUnits="userSpaceOnUse" x1="838.30" y1="305.32" x2="824.05" y2="322.99"><stop offset="0.000" stop-color="#009318"/><stop offset="1.000" stop-color="#009309"/></linearGradient>
<linearGradient id="g691" gradientUnits="userSpaceOnUse" x1="845.30" y1="303.98" x2="831.38" y2="309.26"><stop offset="0.000" stop-color="#009321"/><stop offset="1.000" stop-color="#00930d"/></linearGradient>
<linearGradient id="g692" gradientUnits="userSpaceOnUse" x1="845.30" y1="303.98" x2="829.84" y2="318.48"><stop offset="0.000" stop-color="#009321"/><stop offset="1.000" stop-color="#00930d"/></linearGradient>
<linearGradient id="g693" gradientUnits="userSpaceOnUse" x1="852.30" y1="302.64" x2="837.12" y2="310.65"><stop offset="0.000" stop-color="#00932b"/><stop offset="1.000" stop-color="#009313"/></linearGradient>
<linearGradient id="g694" gradientUnits="userSpaceOnUse" x1="852.30" y1="302.64" x2="836.61" y2="312.97"><stop offset="0.000" stop-color="#00932b"/><stop offset="1.000" stop-color="#009313"/></linearGradient>
<linearGradient id="g695" gradientUnits="userSpaceOnUse" x1="859.30" y1="301.30" x2="843.88" y2="310.13"><stop offset="0.000" stop-color="#009335"/><stop offset="1.000" stop-color="#00931b"/></linearGradient>
<linearGradient id="g696" gradientUnits="userSpaceOnUse" x1="859.30" y1="301.30" x2="843.54" y2="312.53"><stop offset="0.000" stop-color="#009335"/><stop offset="1.000" stop-color="#00931b"/></linearGradient>
<linearGradient id="g697" gradientUnits="userSpaceOnUse" x1="866.30" y1="299.96" x2="850.71" y2="309.60"><stop offset="0.000" stop-color="#00933e"/><stop offset="1.000" stop-color="#009324"/></linearGradient>
<linearGradient id="g698" gradientUnits="userSpaceOnUse" x1="866.30" y1="299.96" x2="850.53" y2="311.52"><stop offset="0.000" stop-color="#00933e"/><stop offset="1.000" stop-color="#009324"/></linearGradient>
<linearGradient id="g699" gradientUnits="userSpaceOnUse" x1="873.30" y1="298.61" x2="857.62" y2="308.86"><stop offset="0.000" stop-color="#009348"/><stop offset="1.000" stop-color="#00932d"/></linearGradient>
<linearGradient id="g700" gradientUnits="userSpaceOnUse" x1="873.30" y1="298.61" x2="860.03" y2="302.95"><stop offset="0.000" stop-color="#009348"/><stop offset="1.000" stop-color="#00932d"/></linearGradient>
<linearGradient id="g701" gradientUnits="userSpaceOnUse" x1="880.30" y1="297.27" x2="865.47" y2="304.31"><stop offset="0.000" stop-color="#009352"/><stop offset="1.000" stop-color="#00933b"/></linearGradient>
<linearGradient id="g702" gradientUnits="userSpaceOnUse" x1="880.30" y1="297.27" x2="868.62" y2="299.89"><stop offset="0.000" stop-color="#009352"/><stop offset="1.000" stop-color="#00933b"/></linearGradient>
<linearGradient id="g703" gradientUnits="userSpaceOnUse" x1="887.30" y1="295.93" x2="874.08" y2="300.19"><stop offset="0.000" stop-color="#00935c"/><stop offset="1.000" stop-color="#009349"/></linearGradient>
<linearGradient id="g704" gradientUnits="userSpaceOnUse" x1="887.30" y1="295.93" x2="877.52" y2="297.15"><stop offset="0.000" stop-color="#00935c"/><stop offset="1.000" stop-color="#009349"/></linearGradient>
<linearGradient id="g705" gradientUnits="userSpaceOnUse" x1="894.30" y1="294.59" x2="883.45" y2="296.53"><stop offset="0.000" stop-color="#009366"/><stop offset="1.000" stop-color="#009357"/></linearGradient>
<linearGradient id="g706" gradientUnits="userSpaceOnUse" x1="894.30" y1="294.59" x2="882.56" y2="297.26"><stop offset="0.000" stop-color="#009366"/><stop offset="1.000" stop-color="#009357"/></linearGradient>
<linearGradient id="g707" gradientUnits="userSpaceOnUse" x1="901.30" y1="293.25" x2="889.71" y2="295.78"><stop offset="0.000" stop-color="#00936f"/><stop offset="1.000" stop-color="#009360"/></linearGradient>
<linearGradient id="g708" gradientUnits="userSpaceOnUse" x1="901.30" y1="293.25" x2="888.71" y2="296.76"><stop offset="0.000" stop-color="#00936f"/><stop offset="1.000" stop-color="#009360"/></linearGradient>
<linearGradient id="g709" gradientUnits="userSpaceOnUse" x1="908.30" y1="291.91" x2="895.64" y2="295.50"><stop offset="0.000" stop-color="#009378"/><stop offset="1.000" stop-color="#009368"/></linearGradient>
<linearGradient id="g710" gradientUnits="userSpaceOnUse" x1="908.30" y1="291.91" x2="895.79" y2="295.33"><stop offset="0.000" stop-color="#009378"/><stop offset="1.000" stop-color="#009368"/></linearGradient>
<linearGradient id="g711" gradientUnits="userSpaceOnUse" x1="915.30" y1="290.56" x2="902.72" y2="294.06"><stop offset="0.000" stop-color="#009380"/><stop offset="1.000" stop-color="#009371"/></linearGradient>
<linearGradient id="g712" gradientUnits="userSpaceOnUse" x1="915.30" y1="290.56" x2="902.88" y2="293.90"><stop offset="0.000" stop-color="#009380"/><stop offset="1.000" stop-color="#009371"/></linearGradient>
<linearGradient id="g713" gradientUnits="userSpaceOnUse" x1="922.30" y1="289.22" x2="909.81" y2="292.63"><stop offset="0.000" stop-color="#009388"/><stop offset="1.000" stop-color="#009379"/></linearGradient>
<linearGradient id="g714" gradientUnits="userSpaceOnUse" x1="922.30" y1="289.22" x2="910.51" y2="291.93"><stop offset="0.000" stop-color="#009388"/><stop offset="1.000" stop-color="#009379"/></linearGradient>
<linearGradient id="g715" gradientUnits="userSpaceOnUse" x1="929.30" y1="287.88" x2="916.13" y2="292.08"><stop offset="0.000" stop-color="#00938f"/><stop offset="1.000" stop-color="#009382"/></linearGradient>
<linearGradient id="g716" gradientUnits="userSpaceOnUse" x1="929.30" y1="287.88" x2="919.37" y2="289.19"><stop offset="0.000" stop-color="#00938f"/><stop offset="1.000" stop-color="#009382"/></linearGradient>
<linearGradient id="g717" gradientUnits="userSpaceOnUse" x1="936.30" y1="286.54" x2="923.85" y2="289.90"><stop offset="0.000" stop-color="#009293"/><stop offset="0.102" stop-color="#009393"/><stop offset="1.000" stop-color="#00938b"/></linearGradient>
<linearGradient id="g718" gradientUnits="userSpaceOnUse" x1="936.30" y1="286.54" x2="928.86" y2="286.68"><stop offset="0.000" stop-color="#009293"/><stop offset="0.102" stop-color="#009393"/><stop offset="1.000" stop-color="#00938b"/></linearGradient>
<linearGradient id="g719" gradientUnits="userSpaceOnUse" x1="943.30" y1="285.20" x2="935.55" y2="285.45"><stop offset="0.000" stop-color="#008d93"/><stop offset="1.000" stop-color="#009293"/></linearGradient>
<linearGradient id="g720" gradientUnits="userSpaceOnUse" x1="943.30" y1="285.20" x2="928.28" y2="292.72"><stop offset="0.000" stop-color="#008d93"/><stop offset="1.000" stop-color="#009293"/></linearGradient>
<linearGradient id="g721" gradientUnits="userSpaceOnUse" x1="950.30" y1="283.85" x2="942.14" y2="284.26"><stop offset="0.000" stop-color="#007a93"/><stop offset="1.000" stop-color="#009093"/></linearGradient>
<linearGradient id="g722" gradientUnits="userSpaceOnUse" x1="950.30" y1="283.85" x2="947.01" y2="307.91"><stop offset="0.000" stop-color="#007a93"/><stop offset="1.000" stop-color="#009093"/></linearGradient>
<linearGradient id="g723" gradientUnits="userSpaceOnUse" x1="957.30" y1="282.51" x2="944.06" y2="286.80"><stop offset="0.000" stop-color="#006693"/><stop offset="1.000" stop-color="#008e93"/></linearGradient>
<linearGradient id="g724" gradientUnits="userSpaceOnUse" x1="957.30" y1="282.51" x2="957.80" y2="305.90"><stop offset="0.000" stop-color="#006693"/><stop offset="1.000" stop-color="#008e93"/></linearGradient>
<linearGradient id="g725" gradientUnits="userSpaceOnUse" x1="964.30" y1="281.17" x2="948.65" y2="291.14"><stop offset="0.000" stop-color="#005093"/><stop offset="1.000" stop-color="#008c93"/></linearGradient>
<linearGradient id="g726" gradientUnits="userSpaceOnUse" x1="964.30" y1="281.17" x2="966.09" y2="304.04"><stop offset="0.000" stop-color="#005093"/><stop offset="1.000" stop-color="#008c93"/></linearGradient>
<linearGradient id="g727" gradientUnits="userSpaceOnUse" x1="971.30" y1="279.83" x2="955.82" y2="294.35"><stop offset="0.000" stop-color="#003a93"/><stop offset="1.000" stop-color="#008a93"/></linearGradient>
<linearGradient id="g728" gradientUnits="userSpaceOnUse" x1="971.30" y1="279.83" x2="959.93" y2="301.04"><stop offset="0.000" stop-color="#003a93"/><stop offset="1.000" stop-color="#008a93"/></linearGradient>
<linearGradient id="g729" gradientUnits="userSpaceOnUse" x1="978.30" y1="278.49" x2="963.38" y2="294.79"><stop offset="0.000" stop-color="#002393"/><stop offset="1.000" stop-color="#007b93"/></linearGradient>
<linearGradient id="g730" gradientUnits="userSpaceOnUse" x1="978.30" y1="278.49" x2="966.95" y2="299.71"><stop offset="0.000" stop-color="#002393"/><stop offset="1.000" stop-color="#007b93"/></linearGradient>
<linearGradient id="g731" gradientUnits="userSpaceOnUse" x1="985.30" y1="277.14" x2="971.55" y2="295.71"><stop offset="0.000" stop-color="#000e93"/><stop offset="1.000" stop-color="#006b93"/></linearGradient>
<linearGradient id="g732" gradientUnits="userSpaceOnUse" x1="985.30" y1="277.14" x2="970.57" y2="293.90"><stop offset="0.000" stop-color="#000e93"/><stop offset="1.000" stop-color="#006b93"/></linearGradient>
<linearGradient id="g733" gradientUnits="userSpaceOnUse" x1="992.30" y1="275.80" x2="982.51" y2="298.14"><stop offset="0.000" stop-color="#000093"/><stop offset="1.000" stop-color="#005393"/></linearGradient>
<linearGradient id="g734" gradientUnits="userSpaceOnUse" x1="992.30" y1="275.80" x2="976.51" y2="287.59"><stop offset="0.000" stop-color="#000093"/><stop offset="1.000" stop-color="#005393"/></linearGradient>
<linearGradient id="g735" gradientUnits="userSpaceOnUse" x1="992.30" y1="275.80" x2="996.41" y2="297.24"><stop offset="0.000" stop-color="#000093"/><stop offset="1.000" stop-color="#003893"/></linearGradient>
<linearGradient id="g736" gradientUnits="userSpaceOnUse" x1="999.30" y1="296.68" x2="992.30" y2="296.68"><stop offset="0.000" stop-color="#000093"/><stop offset="1.000" stop-color="#003893"/></linearGradient>
<clipPath id="c737"><polygon points="568.7,557.9 1166.3,430.4 1110.4,419.4 607.0,525.4"/></clipPath>
<linearGradient id="g738" gradientUnits="userSpaceOnUse" x1="566.70" y1="529.00" x2="549.61" y2="545.23"><stop offset="0.000" stop-color="#930f00"/><stop offset="1.000" stop-color="#930000"/></linearGradient>
<linearGradient id="g739" gradientUnits="userSpaceOnUse" x1="566.70" y1="529.00" x2="573.58" y2="561.74"><stop offset="0.000" stop-color="#930f00"/><stop offset="1.000" stop-color="#930400"/></linearGradient>
<linearGradient id="g740" gradientUnits="userSpaceOnUse" x1="573.70" y1="527.53" x2="560.73" y2="533.48"><stop offset="0.000" stop-color="#930f00"/><stop offset="1.000" stop-color="#930400"/></linearGradient>
<linearGradient id="g741" gradientUnits="userSpaceOnUse" x1="573.70" y1="527.53" x2="580.57" y2="560.25"><stop offset="0.000" stop-color="#930f00"/><stop offset="1.000" stop-color="#930900"/></linearGradient>
<linearGradient id="g742" gradientUnits="userSpaceOnUse" x1="580.70" y1="526.06" x2="573.42" y2="527.69"><stop offset="0.000" stop-color="#930f00"/><stop offset="1.000" stop-color="#930900"/></linearGradient>
<linearGradient id="g743" gradientUnits="userSpaceOnUse" x1="580.70" y1="526.06" x2="587.57" y2="558.75"><stop offset="0.000" stop-color="#930f00"/><stop offset="1.000" stop-color="#930e00"/></linearGradient>
<linearGradient id="g744" gradientUnits="userSpaceOnUse" x1="594.70" y1="557.23" x2="587.69" y2="557.27"><stop offset="0.000" stop-color="#931700"/><stop offset="1.000" stop-color="#930e00"/></linearGradient>
<linearGradient id="g745" gradientUnits="userSpaceOnUse" x1="594.70" y1="557.23" x2="574.75" y2="543.71"><stop offset="0.000" stop-color="#931700"/><stop offset="1.000" stop-color="#930f00"/></linearGradient>
<linearGradient id="g746" gradientUnits="userSpaceOnUse" x1="601.70" y1="555.73" x2="590.05" y2="553.97"><stop offset="0.000" stop-color="#931f00"/><stop offset="1.000" stop-color="#931000"/></linearGradient>
<linearGradient id="g747" gradientUnits="userSpaceOnUse" x1="601.70" y1="555.73" x2="581.54" y2="538.74"><stop offset="0.000" stop-color="#931f00"/><stop offset="1.000" stop-color="#931000"/></linearGradient>
<linearGradient id="g748" gradientUnits="userSpaceOnUse" x1="608.70" y1="554.23" x2="593.69" y2="549.98"><stop offset="0.000" stop-color="#932700"/><stop offset="1.000" stop-color="#931300"/></linearGradient>
<linearGradient id="g749" gradientUnits="userSpaceOnUse" x1="608.70" y1="554.23" x2="588.62" y2="539.60"><stop offset="0.000" stop-color="#932700"/><stop offset="1.000" stop-color="#931300"/></linearGradient>
<linearGradient id="g750" gradientUnits="userSpaceOnUse" x1="615.70" y1="552.73" x2="599.78" y2="547.54"><stop offset="0.000" stop-color="#933100"/><stop offset="1.000" stop-color="#931700"/></linearGradient>
<linearGradient id="g751" gradientUnits="userSpaceOnUse" x1="615.70" y1="552.73" x2="598.70" y2="546.21"><stop offset="0.000" stop-color="#933100"/><stop offset="1.000" stop-color="#931700"/></linearGradient>
<linearGradient id="g752" gradientUnits="userSpaceOnUse" x1="622.70" y1="551.24" x2="606.70" y2="545.95"><stop offset="0.000" stop-color="#933b00"/><stop offset="1.000" stop-color="#931f00"/></linearGradient>
<linearGradient id="g753" gradientUnits="userSpaceOnUse" x1="622.70" y1="551.24" x2="608.18" y2="547.43"><stop offset="0.000" stop-color="#933b00"/><stop offset="1.000" stop-color="#931f00"/></linearGradient>
<linearGradient id="g754" gradientUnits="userSpaceOnUse" x1="629.70" y1="549.74" x2="614.30" y2="545.10"><stop offset="0.000" stop-color="#934500"/><stop offset="1.000" stop-color="#932b00"/></linearGradient>
<linearGradient id="g755" gradientUnits="userSpaceOnUse" x1="629.70" y1="549.74" x2="617.93" y2="547.91"><stop offset="0.000" stop-color="#934500"/><stop offset="1.000" stop-color="#932b00"/></linearGradient>
<linearGradient id="g756" gradientUnits="userSpaceOnUse" x1="636.70" y1="548.24" x2="623.40" y2="545.42"><stop offset="0.000" stop-color="#934f00"/><stop offset="1.000" stop-color="#933900"/></linearGradient>
<linearGradient id="g757" gradientUnits="userSpaceOnUse" x1="636.70" y1="548.24" x2="626.37" y2="547.14"><stop offset="0.000" stop-color="#934f00"/><stop offset="1.000" stop-color="#933900"/></linearGradient>
<linearGradient id="g758" gradientUnits="userSpaceOnUse" x1="643.70" y1="546.74" x2="632.72" y2="545.33"><stop offset="0.000" stop-color="#935b00"/><stop offset="1.000" stop-color="#934800"/></linearGradient>
<linearGradient id="g759" gradientUnits="userSpaceOnUse" x1="643.70" y1="546.74" x2="632.98" y2="545.46"><stop offset="0.000" stop-color="#935b00"/><stop offset="1.000" stop-color="#934800"/></linearGradient>
<linearGradient id="g760" gradientUnits="userSpaceOnUse" x1="650.70" y1="545.25" x2="639.89" y2="543.92"><stop offset="0.000" stop-color="#936700"/><stop offset="1.000" stop-color="#935400"/></linearGradient>
<linearGradient id="g761" gradientUnits="userSpaceOnUse" x1="650.70" y1="545.25" x2="640.15" y2="544.05"><stop offset="0.000" stop-color="#936700"/><stop offset="1.000" stop-color="#935400"/></linearGradient>
<linearGradient id="g762" gradientUnits="userSpaceOnUse" x1="657.70" y1="543.75" x2="646.87" y2="542.41"><stop offset="0.000" stop-color="#937200"/><stop offset="1.000" stop-color="#936000"/></linearGradient>
<linearGradient id="g763" gradientUnits="userSpaceOnUse" x1="657.70" y1="543.75" x2="647.16" y2="542.55"><stop offset="0.000" stop-color="#937200"/><stop offset="1.000" stop-color="#936000"/></linearGradient>
<linearGradient id="g764" gradientUnits="userSpaceOnUse" x1="664.70" y1="542.25" x2="653.39" y2="540.67"><stop offset="0.000" stop-color="#937b00"/><stop offset="1.000" stop-color="#936b00"/></linearGradient>
<linearGradient id="g765" gradientUnits="userSpaceOnUse" x1="664.70" y1="542.25" x2="655.12" y2="541.47"><stop offset="0.000" stop-color="#937b00"/><stop offset="1.000" stop-color="#936b00"/></linearGradient>
<linearGradient id="g766" gradientUnits="userSpaceOnUse" x1="671.70" y1="540.75" x2="661.61" y2="539.76"><stop offset="0.000" stop-color="#938400"/><stop offset="1.000" stop-color="#937600"/></linearGradient>
<linearGradient id="g767" gradientUnits="userSpaceOnUse" x1="671.70" y1="540.75" x2="661.97" y2="539.91"><stop offset="0.000" stop-color="#938400"/><stop offset="1.000" stop-color="#937600"/></linearGradient>
<linearGradient id="g768" gradientUnits="userSpaceOnUse" x1="678.70" y1="539.26" x2="667.99" y2="537.98"><stop offset="0.000" stop-color="#938b00"/><stop offset="1.000" stop-color="#938000"/></linearGradient>
<linearGradient id="g769" gradientUnits="userSpaceOnUse" x1="678.70" y1="539.26" x2="666.98" y2="537.44"><stop offset="0.000" stop-color="#938b00"/><stop offset="1.000" stop-color="#938000"/></linearGradient>
<linearGradient id="g770" gradientUnits="userSpaceOnUse" x1="685.70" y1="537.76" x2="670.65" y2="533.42"><stop offset="0.000" stop-color="#938e00"/><stop offset="1.000" stop-color="#938600"/></linearGradient>
<linearGradient id="g771" gradientUnits="userSpaceOnUse" x1="685.70" y1="537.76" x2="676.79" y2="537.22"><stop offset="0.000" stop-color="#938e00"/><stop offset="1.000" stop-color="#938600"/></linearGradient>
<linearGradient id="g772" gradientUnits="userSpaceOnUse" x1="692.70" y1="536.26" x2="682.16" y2="535.06"><stop offset="0.000" stop-color="#939200"/><stop offset="1.000" stop-color="#938c00"/></linearGradient>
<linearGradient id="g773" gradientUnits="userSpaceOnUse" x1="692.70" y1="536.26" x2="679.97" y2="533.81"><stop offset="0.000" stop-color="#939200"/><stop offset="1.000" stop-color="#938c00"/></linearGradient>
<linearGradient id="g774" gradientUnits="userSpaceOnUse" x1="699.70" y1="534.76" x2="685.55" y2="531.24"><stop offset="0.000" stop-color="#929300"/><stop offset="0.202" stop-color="#939300"/><stop offset="1.000" stop-color="#938f00"/></linearGradient>
<linearGradient id="g775" gradientUnits="userSpaceOnUse" x1="699.70" y1="534.76" x2="687.60" y2="532.72"><stop offset="0.000" stop-color="#929300"/><stop offset="0.202" stop-color="#939300"/><stop offset="1.000" stop-color="#938f00"/></linearGradient>
<linearGradient id="g776" gradientUnits="userSpaceOnUse" x1="706.70" y1="533.27" x2="691.50" y2="528.77"><stop offset="0.000" stop-color="#909300"/><stop offset="0.663" stop-color="#939300"/><stop offset="1.000" stop-color="#939100"/></linearGradient>
<linearGradient id="g777" gradientUnits="userSpaceOnUse" x1="706.70" y1="533.27" x2="698.46" y2="532.95"><stop offset="0.000" stop-color="#909300"/><stop offset="0.663" stop-color="#939300"/><stop offset="1.000" stop-color="#939100"/></linearGradient>
<linearGradient id="g778" gradientUnits="userSpaceOnUse" x1="713.70" y1="531.77" x2="704.13" y2="530.99"><stop offset="0.000" stop-color="#8f9300"/><stop offset="1.000" stop-color="#919300"/></linearGradient>
<linearGradient id="g779" gradientUnits="userSpaceOnUse" x1="713.70" y1="498.13" x2="706.63" y2="498.75"><stop offset="0.000" stop-color="#8e9300"/><stop offset="1.000" stop-color="#919300"/></linearGradient>
<linearGradient id="g780" gradientUnits="userSpaceOnUse" x1="713.70" y1="498.13" x2="706.67" y2="499.66"><stop offset="0.000" stop-color="#8e9300"/><stop offset="1.000" stop-color="#8f9300"/></linearGradient>
<linearGradient id="g781" gradientUnits="userSpaceOnUse" x1="720.70" y1="496.66" x2="713.70" y2="498.18"><stop offset="0.000" stop-color="#8a9300"/><stop offset="1.000" stop-color="#8e9300"/></linearGradient>
<linearGradient id="g782" gradientUnits="userSpaceOnUse" x1="720.70" y1="496.66" x2="706.34" y2="504.73"><stop offset="0.000" stop-color="#8a9300"/><stop offset="1.000" stop-color="#8e9300"/></linearGradient>
<linearGradient id="g783" gradientUnits="userSpaceOnUse" x1="727.70" y1="495.19" x2="717.10" y2="498.95"><stop offset="0.000" stop-color="#879300"/><stop offset="1.000" stop-color="#8c9300"/></linearGradient>
<linearGradient id="g784" gradientUnits="userSpaceOnUse" x1="727.70" y1="495.19" x2="710.92" y2="511.26"><stop offset="0.000" stop-color="#879300"/><stop offset="1.000" stop-color="#8c9300"/></linearGradient>
<linearGradient id="g785" gradientUnits="userSpaceOnUse" x1="734.70" y1="493.72" x2="724.72" y2="497.01"><stop offset="0.000" stop-color="#7f9300"/><stop offset="1.000" stop-color="#8b9300"/></linearGradient>
<linearGradient id="g786" gradientUnits="userSpaceOnUse" x1="734.70" y1="493.72" x2="719.79" y2="518.20"><stop offset="0.000" stop-color="#7f9300"/><stop offset="1.000" stop-color="#8b9300"/></linearGradient>
<linearGradient id="g787" gradientUnits="userSpaceOnUse" x1="741.70" y1="492.25" x2="728.41" y2="498.79"><stop offset="0.000" stop-color="#779300"/><stop offset="1.000" stop-color="#899300"/></linearGradient>
<linearGradient id="g788" gradientUnits="userSpaceOnUse" x1="741.70" y1="492.25" x2="727.81" y2="499.62"><stop offset="0.000" stop-color="#779300"/><stop offset="1.000" stop-color="#899300"/></linearGradient>
<linearGradient id="g789" gradientUnits="userSpaceOnUse" x1="748.70" y1="490.78" x2="735.15" y2="497.68"><stop offset="0.000" stop-color="#6e9300"/><stop offset="1.000" stop-color="#819300"/></linearGradient>
<linearGradient id="g790" gradientUnits="userSpaceOnUse" x1="748.70" y1="490.78" x2="734.56" y2="498.54"><stop offset="0.000" stop-color="#6e9300"/><stop offset="1.000" stop-color="#819300"/></linearGradient>
<linearGradient id="g791" gradientUnits="userSpaceOnUse" x1="755.70" y1="489.31" x2="741.90" y2="496.56"><stop offset="0.000" stop-color="#669300"/><stop offset="1.000" stop-color="#799300"/></linearGradient>
<linearGradient id="g792" gradientUnits="userSpaceOnUse" x1="755.70" y1="489.31" x2="741.33" y2="497.46"><stop offset="0.000" stop-color="#669300"/><stop offset="1.000" stop-color="#799300"/></linearGradient>
<linearGradient id="g793" gradientUnits="userSpaceOnUse" x1="762.70" y1="487.84" x2="749.15" y2="494.75"><stop offset="0.000" stop-color="#5d9300"/><stop offset="1.000" stop-color="#719300"/></linearGradient>
<linearGradient id="g794" gradientUnits="userSpaceOnUse" x1="762.70" y1="487.84" x2="747.76" y2="497.03"><stop offset="0.000" stop-color="#5d9300"/><stop offset="1.000" stop-color="#719300"/></linearGradient>
<linearGradient id="g795" gradientUnits="userSpaceOnUse" x1="769.70" y1="486.37" x2="756.26" y2="493.15"><stop offset="0.000" stop-color="#529300"/><stop offset="1.000" stop-color="#699300"/></linearGradient>
<linearGradient id="g796" gradientUnits="userSpaceOnUse" x1="769.70" y1="486.37" x2="753.89" y2="497.66"><stop offset="0.000" stop-color="#529300"/><stop offset="1.000" stop-color="#699300"/></linearGradient>
<linearGradient id="g797" gradientUnits="userSpaceOnUse" x1="776.70" y1="484.90" x2="762.29" y2="493.16"><stop offset="0.000" stop-color="#479300"/><stop offset="1.000" stop-color="#619300"/></linearGradient>
<linearGradient id="g798" gradientUnits="userSpaceOnUse" x1="776.70" y1="484.90" x2="760.34" y2="498.27"><stop offset="0.000" stop-color="#479300"/><stop offset="1.000" stop-color="#619300"/></linearGradient>
<linearGradient id="g799" gradientUnits="userSpaceOnUse" x1="783.70" y1="483.43" x2="768.50" y2="493.22"><stop offset="0.000" stop-color="#3c9300"/><stop offset="1.000" stop-color="#599300"/></linearGradient>
<linearGradient id="g800" gradientUnits="userSpaceOnUse" x1="783.70" y1="483.43" x2="767.22" y2="497.50"><stop offset="0.000" stop-color="#3c9300"/><stop offset="1.000" stop-color="#599300"/></linearGradient>
<linearGradient id="g801" gradientUnits="userSpaceOnUse" x1="790.70" y1="481.96" x2="775.01" y2="493.00"><stop offset="0.000" stop-color="#329300"/><stop offset="1.000" stop-color="#519300"/></linearGradient>
<linearGradient id="g802" gradientUnits="userSpaceOnUse" x1="790.70" y1="481.96" x2="774.09" y2="497.24"><stop offset="0.000" stop-color="#329300"/><stop offset="1.000" stop-color="#519300"/></linearGradient>
<linearGradient id="g803" gradientUnits="userSpaceOnUse" x1="797.70" y1="480.49" x2="781.64" y2="492.70"><stop offset="0.000" stop-color="#279300"/><stop offset="1.000" stop-color="#489300"/></linearGradient>
<linearGradient id="g804" gradientUnits="userSpaceOnUse" x1="797.70" y1="480.49" x2="781.04" y2="497.12"><stop offset="0.000" stop-color="#279300"/><stop offset="1.000" stop-color="#489300"/></linearGradient>
<linearGradient id="g805" gradientUnits="userSpaceOnUse" x1="804.70" y1="479.02" x2="788.07" y2="496.42"><stop offset="0.000" stop-color="#1f9300"/><stop offset="1.000" stop-color="#409300"/></linearGradient>
<linearGradient id="g806" gradientUnits="userSpaceOnUse" x1="804.70" y1="479.02" x2="788.06" y2="495.38"><stop offset="0.000" stop-color="#1f9300"/><stop offset="1.000" stop-color="#409300"/></linearGradient>
<linearGradient id="g807" gradientUnits="userSpaceOnUse" x1="811.70" y1="477.55" x2="795.38" y2="497.36"><stop offset="0.000" stop-color="#189300"/><stop offset="1.000" stop-color="#379300"/></linearGradient>
<linearGradient id="g808" gradientUnits="userSpaceOnUse" x1="811.70" y1="477.55" x2="795.12" y2="492.83"><stop offset="0.000" stop-color="#189300"/><stop offset="1.000" stop-color="#379300"/></linearGradient>
<linearGradient id="g809" gradientUnits="userSpaceOnUse" x1="818.70" y1="476.07" x2="802.21" y2="494.73"><stop offset="0.000" stop-color="#119300"/><stop offset="1.000" stop-color="#2f9300"/></linearGradient>
<linearGradient id="g810" gradientUnits="userSpaceOnUse" x1="818.70" y1="476.07" x2="802.26" y2="490.24"><stop offset="0.000" stop-color="#119300"/><stop offset="1.000" stop-color="#2f9300"/></linearGradient>
<linearGradient id="g811" gradientUnits="userSpaceOnUse" x1="825.70" y1="474.60" x2="809.12" y2="492.03"><stop offset="0.000" stop-color="#0a9300"/><stop offset="1.000" stop-color="#269300"/></linearGradient>
<linearGradient id="g812" gradientUnits="userSpaceOnUse" x1="825.70" y1="474.60" x2="809.36" y2="494.18"><stop offset="0.000" stop-color="#0a9300"/><stop offset="1.000" stop-color="#269300"/></linearGradient>
<linearGradient id="g813" gradientUnits="userSpaceOnUse" x1="832.70" y1="473.13" x2="817.67" y2="496.75"><stop offset="0.000" stop-color="#059300"/><stop offset="1.000" stop-color="#209300"/></linearGradient>
<linearGradient id="g814" gradientUnits="userSpaceOnUse" x1="832.70" y1="473.13" x2="817.28" y2="495.84"><stop offset="0.000" stop-color="#059300"/><stop offset="1.000" stop-color="#209300"/></linearGradient>
<linearGradient id="g815" gradientUnits="userSpaceOnUse" x1="839.70" y1="471.66" x2="837.28" y2="504.64"><stop offset="0.000" stop-color="#049300"/><stop offset="1.000" stop-color="#1b9300"/></linearGradient>
<linearGradient id="g816" gradientUnits="userSpaceOnUse" x1="839.70" y1="471.66" x2="823.45" y2="491.49"><stop offset="0.000" stop-color="#049300"/><stop offset="1.000" stop-color="#1b9300"/></linearGradient>
<linearGradient id="g817" gradientUnits="userSpaceOnUse" x1="846.70" y1="470.19" x2="842.58" y2="502.80"><stop offset="0.000" stop-color="#039300"/><stop offset="1.000" stop-color="#169300"/></linearGradient>
<linearGradient id="g818" gradientUnits="userSpaceOnUse" x1="846.70" y1="470.19" x2="830.14" y2="486.54"><stop offset="0.000" stop-color="#039300"/><stop offset="1.000" stop-color="#169300"/></linearGradient>
<linearGradient id="g819" gradientUnits="userSpaceOnUse" x1="853.70" y1="468.72" x2="847.22" y2="500.50"><stop offset="0.000" stop-color="#019300"/><stop offset="1.000" stop-color="#119300"/></linearGradient>
<linearGradient id="g820" gradientUnits="userSpaceOnUse" x1="853.70" y1="468.72" x2="837.70" y2="481.06"><stop offset="0.000" stop-color="#019300"/><stop offset="1.000" stop-color="#119300"/></linearGradient>
<linearGradient id="g821" gradientUnits="userSpaceOnUse" x1="860.70" y1="467.25" x2="852.10" y2="497.91"><stop offset="0.000" stop-color="#009300"/><stop offset="1.000" stop-color="#0c9300"/></linearGradient>
<linearGradient id="g822" gradientUnits="userSpaceOnUse" x1="860.70" y1="467.25" x2="844.79" y2="479.28"><stop offset="0.000" stop-color="#009300"/><stop offset="1.000" stop-color="#0c9300"/></linearGradient>
<linearGradient id="g823" gradientUnits="userSpaceOnUse" x1="860.70" y1="467.25" x2="867.35" y2="498.90"><stop offset="0.000" stop-color="#009300"/><stop offset="1.000" stop-color="#089300"/></linearGradient>
<linearGradient id="g824" gradientUnits="userSpaceOnUse" x1="867.70" y1="465.78" x2="851.18" y2="482.36"><stop offset="0.000" stop-color="#009300"/><stop offset="1.000" stop-color="#089300"/></linearGradient>
<linearGradient id="g825" gradientUnits="userSpaceOnUse" x1="867.70" y1="465.78" x2="874.34" y2="497.41"><stop offset="0.000" stop-color="#009300"/><stop offset="1.000" stop-color="#069300"/></linearGradient>
<linearGradient id="g826" gradientUnits="userSpaceOnUse" x1="874.70" y1="464.31" x2="859.13" y2="475.34"><stop offset="0.000" stop-color="#009300"/><stop offset="1.000" stop-color="#069300"/></linearGradient>
<linearGradient id="g827" gradientUnits="userSpaceOnUse" x1="874.70" y1="464.31" x2="881.34" y2="495.91"><stop offset="0.000" stop-color="#009300"/><stop offset="1.000" stop-color="#049300"/></linearGradient>
<linearGradient id="g828" gradientUnits="userSpaceOnUse" x1="881.70" y1="462.84" x2="869.52" y2="468.22"><stop offset="0.000" stop-color="#009300"/><stop offset="1.000" stop-color="#049300"/></linearGradient>
<linearGradient id="g829" gradientUnits="userSpaceOnUse" x1="881.70" y1="462.84" x2="888.33" y2="494.41"><stop offset="0.000" stop-color="#009300"/><stop offset="1.000" stop-color="#029300"/></linearGradient>
<linearGradient id="g830" gradientUnits="userSpaceOnUse" x1="895.70" y1="492.84" x2="888.67" y2="494.17"><stop offset="0.000" stop-color="#009300"/><stop offset="0.143" stop-color="#009300"/><stop offset="1.000" stop-color="#029300"/></linearGradient>
<linearGradient id="g831" gradientUnits="userSpaceOnUse" x1="895.70" y1="492.84" x2="889.08" y2="461.30"><stop offset="0.000" stop-color="#009300"/><stop offset="1.000" stop-color="#009300"/></linearGradient>
<linearGradient id="g832" gradientUnits="userSpaceOnUse" x1="902.70" y1="491.34" x2="895.04" y2="491.18"><stop offset="0.000" stop-color="#009303"/><stop offset="1.000" stop-color="#009300"/></linearGradient>
<linearGradient id="g833" gradientUnits="userSpaceOnUse" x1="902.70" y1="491.34" x2="894.77" y2="491.11"><stop offset="0.000" stop-color="#009303"/><stop offset="1.000" stop-color="#009300"/></linearGradient>
<linearGradient id="g834" gradientUnits="userSpaceOnUse" x1="909.70" y1="489.84" x2="901.81" y2="489.62"><stop offset="0.000" stop-color="#009306"/><stop offset="1.000" stop-color="#009303"/></linearGradient>
<linearGradient id="g835" gradientUnits="userSpaceOnUse" x1="909.70" y1="456.96" x2="902.63" y2="457.81"><stop offset="0.000" stop-color="#00930b"/><stop offset="1.000" stop-color="#009303"/></linearGradient>
<linearGradient id="g836" gradientUnits="userSpaceOnUse" x1="909.70" y1="456.96" x2="901.41" y2="459.21"><stop offset="0.000" stop-color="#00930b"/><stop offset="1.000" stop-color="#009306"/></linearGradient>
<linearGradient id="g837" gradientUnits="userSpaceOnUse" x1="916.70" y1="455.49" x2="909.12" y2="457.35"><stop offset="0.000" stop-color="#009312"/><stop offset="1.000" stop-color="#00930a"/></linearGradient>
<linearGradient id="g838" gradientUnits="userSpaceOnUse" x1="916.70" y1="455.49" x2="905.24" y2="460.15"><stop offset="0.000" stop-color="#009312"/><stop offset="1.000" stop-color="#00930a"/></linearGradient>
<linearGradient id="g839" gradientUnits="userSpaceOnUse" x1="923.70" y1="454.02" x2="913.80" y2="457.34"><stop offset="0.000" stop-color="#00931a"/><stop offset="1.000" stop-color="#00930f"/></linearGradient>
<linearGradient id="g840" gradientUnits="userSpaceOnUse" x1="923.70" y1="454.02" x2="909.65" y2="461.96"><stop offset="0.000" stop-color="#00931a"/><stop offset="1.000" stop-color="#00930f"/></linearGradient>
<linearGradient id="g841" gradientUnits="userSpaceOnUse" x1="930.70" y1="452.55" x2="918.80" y2="457.67"><stop offset="0.000" stop-color="#009322"/><stop offset="1.000" stop-color="#009314"/></linearGradient>
<linearGradient id="g842" gradientUnits="userSpaceOnUse" x1="930.70" y1="452.55" x2="915.06" y2="464.02"><stop offset="0.000" stop-color="#009322"/><stop offset="1.000" stop-color="#009314"/></linearGradient>
<linearGradient id="g843" gradientUnits="userSpaceOnUse" x1="937.70" y1="451.08" x2="924.17" y2="458.23"><stop offset="0.000" stop-color="#009329"/><stop offset="1.000" stop-color="#009318"/></linearGradient>
<linearGradient id="g844" gradientUnits="userSpaceOnUse" x1="937.70" y1="451.08" x2="921.38" y2="465.98"><stop offset="0.000" stop-color="#009329"/><stop offset="1.000" stop-color="#009318"/></linearGradient>
<linearGradient id="g845" gradientUnits="userSpaceOnUse" x1="944.70" y1="449.61" x2="931.33" y2="456.54"><stop offset="0.000" stop-color="#009334"/><stop offset="1.000" stop-color="#00931d"/></linearGradient>
<linearGradient id="g846" gradientUnits="userSpaceOnUse" x1="944.70" y1="449.61" x2="929.77" y2="459.27"><stop offset="0.000" stop-color="#009334"/><stop offset="1.000" stop-color="#00931d"/></linearGradient>
<linearGradient id="g847" gradientUnits="userSpaceOnUse" x1="951.70" y1="448.14" x2="938.24" y2="455.21"><stop offset="0.000" stop-color="#009340"/><stop offset="1.000" stop-color="#009326"/></linearGradient>
<linearGradient id="g848" gradientUnits="userSpaceOnUse" x1="951.70" y1="448.14" x2="936.08" y2="459.63"><stop offset="0.000" stop-color="#009340"/><stop offset="1.000" stop-color="#009326"/></linearGradient>
<linearGradient id="g849" gradientUnits="userSpaceOnUse" x1="958.70" y1="446.67" x2="944.35" y2="455.20"><stop offset="0.000" stop-color="#00934b"/><stop offset="1.000" stop-color="#00932e"/></linearGradient>
<linearGradient id="g850" gradientUnits="userSpaceOnUse" x1="958.70" y1="446.67" x2="942.61" y2="460.14"><stop offset="0.000" stop-color="#00934b"/><stop offset="1.000" stop-color="#00932e"/></linearGradient>
<linearGradient id="g851" gradientUnits="userSpaceOnUse" x1="965.70" y1="445.20" x2="950.64" y2="455.22"><stop offset="0.000" stop-color="#009357"/><stop offset="1.000" stop-color="#009337"/></linearGradient>
<linearGradient id="g852" gradientUnits="userSpaceOnUse" x1="965.70" y1="445.20" x2="949.40" y2="460.57"><stop offset="0.000" stop-color="#009357"/><stop offset="1.000" stop-color="#009337"/></linearGradient>
<linearGradient id="g853" gradientUnits="userSpaceOnUse" x1="972.70" y1="443.73" x2="957.11" y2="455.24"><stop offset="0.000" stop-color="#009363"/><stop offset="1.000" stop-color="#009340"/></linearGradient>
<linearGradient id="g854" gradientUnits="userSpaceOnUse" x1="972.70" y1="443.73" x2="956.40" y2="460.88"><stop offset="0.000" stop-color="#009363"/><stop offset="1.000" stop-color="#009340"/></linearGradient>
<linearGradient id="g855" gradientUnits="userSpaceOnUse" x1="979.70" y1="442.26" x2="963.42" y2="457.71"><stop offset="0.000" stop-color="#00936d"/><stop offset="1.000" stop-color="#009349"/></linearGradient>
<linearGradient id="g856" gradientUnits="userSpaceOnUse" x1="979.70" y1="442.26" x2="963.41" y2="459.16"><stop offset="0.000" stop-color="#00936d"/><stop offset="1.000" stop-color="#009349"/></linearGradient>
<linearGradient id="g857" gradientUnits="userSpaceOnUse" x1="986.70" y1="440.79" x2="970.44" y2="458.13"><stop offset="0.000" stop-color="#009375"/><stop offset="1.000" stop-color="#009352"/></linearGradient>
<linearGradient id="g858" gradientUnits="userSpaceOnUse" x1="986.70" y1="440.79" x2="970.52" y2="455.17"><stop offset="0.000" stop-color="#009375"/><stop offset="1.000" stop-color="#009352"/></linearGradient>
<linearGradient id="g859" gradientUnits="userSpaceOnUse" x1="993.70" y1="439.32" x2="977.43" y2="455.83"><stop offset="0.000" stop-color="#00937e"/><stop offset="1.000" stop-color="#00935c"/></linearGradient>
<linearGradient id="g860" gradientUnits="userSpaceOnUse" x1="993.70" y1="439.32" x2="977.65" y2="452.91"><stop offset="0.000" stop-color="#00937e"/><stop offset="1.000" stop-color="#00935c"/></linearGradient>
<linearGradient id="g861" gradientUnits="userSpaceOnUse" x1="1000.70" y1="437.85" x2="984.45" y2="453.50"><stop offset="0.000" stop-color="#009387"/><stop offset="1.000" stop-color="#009366"/></linearGradient>
<linearGradient id="g862" gradientUnits="userSpaceOnUse" x1="1000.70" y1="437.85" x2="984.81" y2="450.64"><stop offset="0.000" stop-color="#009387"/><stop offset="1.000" stop-color="#009366"/></linearGradient>
<linearGradient id="g863" gradientUnits="userSpaceOnUse" x1="1007.70" y1="436.38" x2="991.52" y2="451.15"><stop offset="0.000" stop-color="#009390"/><stop offset="1.000" stop-color="#009370"/></linearGradient>
<linearGradient id="g864" gradientUnits="userSpaceOnUse" x1="1007.70" y1="436.38" x2="992.03" y2="448.35"><stop offset="0.000" stop-color="#009390"/><stop offset="1.000" stop-color="#009370"/></linearGradient>
<linearGradient id="g865" gradientUnits="userSpaceOnUse" x1="1014.70" y1="434.91" x2="1000.26" y2="458.58"><stop offset="0.000" stop-color="#009193"/><stop offset="0.064" stop-color="#009393"/><stop offset="1.000" stop-color="#00937b"/></linearGradient>
<linearGradient id="g866" gradientUnits="userSpaceOnUse" x1="1014.70" y1="434.91" x2="998.67" y2="453.74"><stop offset="0.000" stop-color="#009193"/><stop offset="0.064" stop-color="#009393"/><stop offset="1.000" stop-color="#00937b"/></linearGradient>
<linearGradient id="g867" gradientUnits="userSpaceOnUse" x1="1021.70" y1="433.44" x2="1012.85" y2="463.26"><stop offset="0.000" stop-color="#008f93"/><stop offset="0.183" stop-color="#009393"/><stop offset="1.000" stop-color="#009381"/></linearGradient>
<linearGradient id="g868" gradientUnits="userSpaceOnUse" x1="1021.70" y1="433.44" x2="1005.48" y2="450.08"><stop offset="0.000" stop-color="#008f93"/><stop offset="0.183" stop-color="#009393"/><stop offset="1.000" stop-color="#009381"/></linearGradient>
<linearGradient id="g869" gradientUnits="userSpaceOnUse" x1="1028.70" y1="431.97" x2="1014.83" y2="456.56"><stop offset="0.000" stop-color="#008b93"/><stop offset="0.372" stop-color="#009393"/><stop offset="1.000" stop-color="#009386"/></linearGradient>
<linearGradient id="g870" gradientUnits="userSpaceOnUse" x1="1028.70" y1="431.97" x2="1012.59" y2="446.40"><stop offset="0.000" stop-color="#008b93"/><stop offset="0.372" stop-color="#009393"/><stop offset="1.000" stop-color="#009386"/></linearGradient>
<linearGradient id="g871" gradientUnits="userSpaceOnUse" x1="1035.70" y1="430.50" x2="1019.73" y2="444.03"><stop offset="0.000" stop-color="#008593"/><stop offset="0.666" stop-color="#009393"/><stop offset="1.000" stop-color="#00938c"/></linearGradient>
<linearGradient id="g872" gradientUnits="userSpaceOnUse" x1="1035.70" y1="430.50" x2="1019.57" y2="445.29"><stop offset="0.000" stop-color="#008593"/><stop offset="0.666" stop-color="#009393"/><stop offset="1.000" stop-color="#00938c"/></linearGradient>
<linearGradient id="g873" gradientUnits="userSpaceOnUse" x1="1042.70" y1="429.03" x2="1026.68" y2="442.91"><stop offset="0.000" stop-color="#007f93"/><stop offset="0.949" stop-color="#009393"/><stop offset="1.000" stop-color="#009392"/></linearGradient>
<linearGradient id="g874" gradientUnits="userSpaceOnUse" x1="1042.70" y1="429.03" x2="1026.89" y2="441.76"><stop offset="0.000" stop-color="#007f93"/><stop offset="0.949" stop-color="#009393"/><stop offset="1.000" stop-color="#009392"/></linearGradient>
<linearGradient id="g875" gradientUnits="userSpaceOnUse" x1="1049.70" y1="427.56" x2="1035.86" y2="435.38"><stop offset="0.000" stop-color="#007593"/><stop offset="1.000" stop-color="#008d93"/></linearGradient>
<linearGradient id="g876" gradientUnits="userSpaceOnUse" x1="1049.70" y1="427.56" x2="1033.54" y2="443.21"><stop offset="0.000" stop-color="#007593"/><stop offset="1.000" stop-color="#008d93"/></linearGradient>
<linearGradient id="g877" gradientUnits="userSpaceOnUse" x1="1056.70" y1="426.09" x2="1042.18" y2="435.18"><stop offset="0.000" stop-color="#006993"/><stop offset="1.000" stop-color="#008793"/></linearGradient>
<linearGradient id="g878" gradientUnits="userSpaceOnUse" x1="1056.70" y1="426.09" x2="1040.85" y2="445.35"><stop offset="0.000" stop-color="#006993"/><stop offset="1.000" stop-color="#008793"/></linearGradient>
<linearGradient id="g879" gradientUnits="userSpaceOnUse" x1="1063.70" y1="424.62" x2="1049.08" y2="433.93"><stop offset="0.000" stop-color="#005b93"/><stop offset="1.000" stop-color="#008093"/></linearGradient>
<linearGradient id="g880" gradientUnits="userSpaceOnUse" x1="1063.70" y1="424.62" x2="1049.39" y2="448.22"><stop offset="0.000" stop-color="#005b93"/><stop offset="1.000" stop-color="#008093"/></linearGradient>
<linearGradient id="g881" gradientUnits="userSpaceOnUse" x1="1070.70" y1="423.15" x2="1055.55" y2="433.75"><stop offset="0.000" stop-color="#004a93"/><stop offset="1.000" stop-color="#007993"/></linearGradient>
<linearGradient id="g882" gradientUnits="userSpaceOnUse" x1="1070.70" y1="423.15" x2="1056.89" y2="447.61"><stop offset="0.000" stop-color="#004a93"/><stop offset="1.000" stop-color="#007993"/></linearGradient>
<linearGradient id="g883" gradientUnits="userSpaceOnUse" x1="1077.70" y1="421.68" x2="1061.77" y2="435.37"><stop offset="0.000" stop-color="#003993"/><stop offset="1.000" stop-color="#007193"/></linearGradient>
<linearGradient id="g884" gradientUnits="userSpaceOnUse" x1="1077.70" y1="421.68" x2="1063.21" y2="444.84"><stop offset="0.000" stop-color="#003993"/><stop offset="1.000" stop-color="#007193"/></linearGradient>
<linearGradient id="g885" gradientUnits="userSpaceOnUse" x1="1084.70" y1="420.21" x2="1068.61" y2="436.96"><stop offset="0.000" stop-color="#002993"/><stop offset="1.000" stop-color="#006793"/></linearGradient>
<linearGradient id="g886" gradientUnits="userSpaceOnUse" x1="1084.70" y1="420.21" x2="1071.09" y2="444.90"><stop offset="0.000" stop-color="#002993"/><stop offset="1.000" stop-color="#006793"/></linearGradient>
<linearGradient id="g887" gradientUnits="userSpaceOnUse" x1="1091.70" y1="418.74" x2="1075.78" y2="437.15"><stop offset="0.000" stop-color="#001a93"/><stop offset="1.000" stop-color="#005d93"/></linearGradient>
<linearGradient id="g888" gradientUnits="userSpaceOnUse" x1="1091.70" y1="418.74" x2="1079.01" y2="444.71"><stop offset="0.000" stop-color="#001a93"/><stop offset="1.000" stop-color="#005d93"/></linearGradient>
<linearGradient id="g889" gradientUnits="userSpaceOnUse" x1="1098.70" y1="417.27" x2="1085.47" y2="442.47"><stop offset="0.000" stop-color="#000f93"/><stop offset="1.000" stop-color="#005393"/></linearGradient>
<linearGradient id="g890" gradientUnits="userSpaceOnUse" x1="1098.70" y1="417.27" x2="1085.61" y2="442.67"><stop offset="0.000" stop-color="#000f93"/><stop offset="1.000" stop-color="#005393"/></linearGradient>
<linearGradient id="g891" gradientUnits="userSpaceOnUse" x1="1105.70" y1="415.80" x2="1094.97" y2="443.81"><stop offset="0.000" stop-color="#000693"/><stop offset="1.000" stop-color="#004893"/></linearGradient>
<linearGradient id="g892" gradientUnits="userSpaceOnUse" x1="1105.70" y1="415.80" x2="1089.85" y2="434.44"><stop offset="0.000" stop-color="#000693"/><stop offset="1.000" stop-color="#004893"/></linearGradient>
<linearGradient id="g893" gradientUnits="userSpaceOnUse" x1="1112.70" y1="414.33" x2="1103.67" y2="443.64"><stop offset="0.000" stop-color="#000093"/><stop offset="1.000" stop-color="#003993"/></linearGradient>
<linearGradient id="g894" gradientUnits="userSpaceOnUse" x1="1112.70" y1="414.33" x2="1096.66" y2="430.15"><stop offset="0.000" stop-color="#000093"/><stop offset="1.000" stop-color="#003993"/></linearGradient>
<linearGradient id="g895" gradientUnits="userSpaceOnUse" x1="1112.70" y1="414.33" x2="1119.15" y2="445.04"><stop offset="0.000" stop-color="#000093"/><stop offset="1.000" stop-color="#002993"/></linearGradient>
<linearGradient id="g896" gradientUnits="userSpaceOnUse" x1="1119.70" y1="412.86" x2="1104.76" y2="423.07"><stop offset="0.000" stop-color="#000093"/><stop offset="1.000" stop-color="#002993"/></linearGradient>
<linearGradient id="g897" gradientUnits="userSpaceOnUse" x1="1119.70" y1="412.86" x2="1126.14" y2="443.54"><stop offset="0.000" stop-color="#000093"/><stop offset="1.000" stop-color="#001a93"/></linearGradient>
<linearGradient id="g898" gradientUnits="userSpaceOnUse" x1="1126.70" y1="411.39" x2="1112.49" y2="420.02"><stop offset="0.000" stop-color="#000093"/><stop offset="1.000" stop-color="#001a93"/></linearGradient>
<linearGradient id="g899" gradientUnits="userSpaceOnUse" x1="1126.70" y1="411.39" x2="1133.14" y2="442.05"><stop offset="0.000" stop-color="#000093"/><stop offset="1.000" stop-color="#001093"/></linearGradient>
<linearGradient id="g900" gradientUnits="userSpaceOnUse" x1="1133.70" y1="409.92" x2="1123.03" y2="414.00"><stop offset="0.000" stop-color="#000093"/><stop offset="1.000" stop-color="#001093"/></linearGradient>
<linearGradient id="g901" gradientUnits="userSpaceOnUse" x1="1133.70" y1="409.92" x2="1140.13" y2="440.55"><stop offset="0.000" stop-color="#000093"/><stop offset="1.000" stop-color="#000693"/></linearGradient>
<linearGradient id="g902" gradientUnits="userSpaceOnUse" x1="1140.70" y1="408.45" x2="1133.72" y2="410.05"><stop offset="0.000" stop-color="#000093"/><stop offset="1.000" stop-color="#000693"/></linearGradient>
</defs>
<g shape-rendering="crispEdges">
<rect x="384" y="267.00" width="34" height="5.05" fill="#ff0000"/>
<rect x="384" y="271.75" width="34" height="5.05" fill="#ff1000"/>
<rect x="384" y="276.50" width="34" height="5.05" fill="#ff2000"/>
<rect x="384" y="281.25" width="34" height="5.05" fill="#ff3100"/>
<rect x="384" y="286.00" width="34" height="5.05" fill="#ff4100"/>
<rect x="384" y="290.75" width="34" height="5.05" fill="#ff5100"/>
<rect x="384" y="295.50" width="34" height="5.05" fill="#ff6100"/>
<rect x="384" y="300.25" width="34" height="5.05" fill="#ff7100"/>
<rect x="384" y="305.00" width="34" height="5.05" fill="#ff8200"/>
<rect x="384" y="309.75" width="34" height="5.05" fill="#ff9200"/>
<rect x="384" y="314.50" width="34" height="5.05" fill="#ffa200"/>
<rect x="384" y="319.25" width="34" height="5.05" fill="#ffb200"/>
<rect x="384" y="324.00" width="34" height="5.05" fill="#ffc200"/>
<rect x="384" y="328.75" width="34" height="5.05" fill="#ffd200"/>
<rect x="384" y="333.50" width="34" height="5.05" fill="#ffe300"/>
<rect x="384" y="338.25" width="34" height="5.05" fill="#fff300"/>
<rect x="384" y="343.00" width="34" height="5.05" fill="#fbff00"/>
<rect x="384" y="347.75" width="34" height="5.05" fill="#ebff00"/>
<rect x="384" y="352.50" width="34" height="5.05" fill="#dbff00"/>
<rect x="384" y="357.25" width="34" height="5.05" fill="#caff00"/>
<rect x="384" y="362.00" width="34" height="5.05" fill="#baff00"/>
<rect x="384" y="366.75" width="34" height="5.05" fill="#aaff00"/>
<rect x="384" y="371.50" width="34" height="5.05" fill="#9aff00"/>
<rect x="384" y="376.25" width="34" height="5.05" fill="#8aff00"/>
<rect x="384" y="381.00" width="34" height="5.05" fill="#79ff00"/>
<rect x="384" y="385.75" width="34" height="5.05" fill="#69ff00"/>
<rect x="384" y="390.50" width="34" height="5.05" fill="#59ff00"/>
<rect x="384" y="395.25" width="34" height="5.05" fill="#49ff00"/>
<rect x="384" y="400.00" width="34" height="5.05" fill="#39ff00"/>
<rect x="384" y="404.75" width="34" height="5.05" fill="#28ff00"/>
<rect x="384" y="409.50" width="34" height="5.05" fill="#18ff00"/>
<rect x="384" y="414.25" width="34" height="5.05" fill="#08ff00"/>
<rect x="384" y="419.00" width="34" height="5.05" fill="#00ff08"/>
<rect x="384" y="423.75" width="34" height="5.05" fill="#00ff18"/>
<rect x="384" y="428.50" width="34" height="5.05" fill="#00ff28"/>
<rect x="384" y="433.25" width="34" height="5.05" fill="#00ff39"/>
<rect x="384" y="438.00" width="34" height="5.05" fill="#00ff49"/>
<rect x="384" y="442.75" width="34" height="5.05" fill="#00ff59"/>
<rect x="384" y="447.50" width="34" height="5.05" fill="#00ff69"/>
<rect x="384" y="452.25" width="34" height="5.05" fill="#00ff79"/>
<rect x="384" y="457.00" width="34" height="5.05" fill="#00ff8a"/>
<rect x="384" y="461.75" width="34" height="5.05" fill="#00ff9a"/>
<rect x="384" y="466.50" width="34" height="5.05" fill="#00ffaa"/>
<rect x="384" y="471.25" width="34" height="5.05" fill="#00ffba"/>
<rect x="384" y="476.00" width="34" height="5.05" fill="#00ffca"/>
<rect x="384" y="480.75" width="34" height="5.05" fill="#00ffdb"/>
<rect x="384" y="485.50" width="34" height="5.05" fill="#00ffeb"/>
<rect x="384" y="490.25" width="34" height="5.05" fill="#00fffb"/>
<rect x="384" y="495.00" width="34" height="5.05" fill="#00f3ff"/>
<rect x="384" y="499.75" width="34" height="5.05" fill="#00e3ff"/>
<rect x="384" y="504.50" width="34" height="5.05" fill="#00d2ff"/>
<rect x="384" y="509.25" width="34" height="5.05" fill="#00c2ff"/>
<rect x="384" y="514.00" width="34" height="5.05" fill="#00b2ff"/>
<rect x="384" y="518.75" width="34" height="5.05" fill="#00a2ff"/>
<rect x="384" y="523.50" width="34" height="5.05" fill="#0092ff"/>
<rect x="384" y="528.25" width="34" height="5.05" fill="#0082ff"/>
<rect x="384" y="533.00" width="34" height="5.05" fill="#0071ff"/>
<rect x="384" y="537.75" width="34" height="5.05" fill="#0061ff"/>
<rect x="384" y="542.50" width="34" height="5.05" fill="#0051ff"/>
<rect x="384" y="547.25" width="34" height="5.05" fill="#0041ff"/>
<rect x="384" y="552.00" width="34" height="5.05" fill="#0031ff"/>
<rect x="384" y="556.75" width="34" height="5.05" fill="#0020ff"/>
<rect x="384" y="561.50" width="34" height="5.05" fill="#0010ff"/>
<rect x="384" y="566.25" width="34" height="5.05" fill="#0000ff"/>
</g>
<g font-family="'Liberation Mono',monospace" font-style="italic" font-size="10.6" fill="#1a1a1a">
<text x="420.6" y="269.3" textLength="46.9" lengthAdjust="spacingAndGlyphs">1.19e-05</text>
<text x="420.6" y="303.2" textLength="46.9" lengthAdjust="spacingAndGlyphs">9.26e-06</text>
<text x="420.6" y="337.1" textLength="46.9" lengthAdjust="spacingAndGlyphs">6.61e-06</text>
<text x="420.6" y="371.0" textLength="46.9" lengthAdjust="spacingAndGlyphs">3.97e-06</text>
<text x="420.6" y="404.9" textLength="46.9" lengthAdjust="spacingAndGlyphs">1.32e-06</text>
<text x="420.6" y="438.7" textLength="52.7" lengthAdjust="spacingAndGlyphs">-1.32e-06</text>
<text x="420.6" y="472.6" textLength="52.7" lengthAdjust="spacingAndGlyphs">-3.97e-06</text>
<text x="420.6" y="506.5" textLength="52.7" lengthAdjust="spacingAndGlyphs">-6.61e-06</text>
<text x="420.6" y="540.4" textLength="52.7" lengthAdjust="spacingAndGlyphs">-9.26e-06</text>
<text x="420.6" y="574.3" textLength="52.7" lengthAdjust="spacingAndGlyphs">-1.19e-05</text>
</g>
<text x="387" y="248" textLength="84" lengthAdjust="spacing" font-family="'Liberation Sans',sans-serif" font-weight="bold" font-style="italic" font-size="11" fill="#000">X displacement</text>
<g clip-path="url(#c1)">
<polygon points="571.5,371.3 1002.3,288.9 1002.3,409.1 597.6,492.8" fill="#00cc00"/>
<path d="M576.30 374.50L587.19 374.81L588.00 372.26Z" fill="url(#g2)" stroke="url(#g2)" stroke-width="2.0"/>
<path d="M576.30 374.50L586.39 377.36L587.19 374.81Z" fill="url(#g3)" stroke="url(#g3)" stroke-width="2.0"/>
<path d="M576.30 374.50L585.58 379.90L586.39 377.36Z" fill="url(#g4)" stroke="url(#g4)" stroke-width="2.0"/>
<path d="M576.30 374.50L584.77 382.45L585.58 379.90Z" fill="url(#g5)" stroke="url(#g5)" stroke-width="2.0"/>
<path d="M576.30 374.50L583.95 384.99L584.77 382.45Z" fill="url(#g6)" stroke="url(#g6)" stroke-width="2.0"/>
<path d="M576.30 374.50L582.65 387.33L583.95 384.99Z" fill="url(#g7)" stroke="url(#g7)" stroke-width="2.0"/>
<path d="M576.30 374.50L581.36 389.66L582.65 387.33Z" fill="url(#g8)" stroke="url(#g8)" stroke-width="2.0"/>
<path d="M576.30 374.50L580.06 392.00L581.36 389.66Z" fill="url(#g9)" stroke="url(#g9)" stroke-width="2.0"/>
<path d="M588.00 372.26L587.19 374.81L600.00 369.96Z" fill="url(#g10)" stroke="url(#g10)" stroke-width="2.0"/>
<path d="M587.19 374.81L597.87 375.27L600.00 369.96Z" fill="url(#g11)" stroke="url(#g11)" stroke-width="2.0"/>
<path d="M587.19 374.81L586.39 377.36L597.87 375.27Z" fill="url(#g12)" stroke="url(#g12)" stroke-width="2.0"/>
<path d="M586.39 377.36L595.74 380.57L597.87 375.27Z" fill="url(#g13)" stroke="url(#g13)" stroke-width="2.0"/>
<path d="M586.39 377.36L585.58 379.90L595.74 380.57Z" fill="url(#g14)" stroke="url(#g14)" stroke-width="2.0"/>
<path d="M585.58 379.90L593.66 385.90L595.74 380.57Z" fill="url(#g15)" stroke="url(#g15)" stroke-width="2.0"/>
<path d="M585.58 379.90L584.77 382.45L593.66 385.90Z" fill="url(#g16)" stroke="url(#g16)" stroke-width="2.0"/>
<path d="M584.77 382.45L591.85 391.32L593.66 385.90Z" fill="url(#g17)" stroke="url(#g17)" stroke-width="2.0"/>
<path d="M584.77 382.45L583.95 384.99L591.85 391.32Z" fill="url(#g18)" stroke="url(#g18)" stroke-width="2.0"/>
<path d="M583.95 384.99L590.03 396.74L591.85 391.32Z" fill="url(#g19)" stroke="url(#g19)" stroke-width="2.0"/>
<path d="M583.95 384.99L582.65 387.33L590.03 396.74Z" fill="url(#g20)" stroke="url(#g20)" stroke-width="2.0"/>
<path d="M582.65 387.33L588.21 402.16L590.03 396.74Z" fill="url(#g21)" stroke="url(#g21)" stroke-width="2.0"/>
<path d="M582.65 387.33L581.36 389.66L588.21 402.16Z" fill="url(#g22)" stroke="url(#g22)" stroke-width="2.0"/>
<path d="M581.36 389.66L586.39 407.58L588.21 402.16Z" fill="url(#g23)" stroke="url(#g23)" stroke-width="2.0"/>
<path d="M581.36 389.66L580.06 392.00L586.39 407.58Z" fill="url(#g24)" stroke="url(#g24)" stroke-width="2.0"/>
<path d="M580.06 392.00L584.57 413.00L586.39 407.58Z" fill="url(#g25)" stroke="url(#g25)" stroke-width="2.0"/>
<path d="M600.00 369.96L597.87 375.27L618.00 366.52Z" fill="url(#g26)" stroke="url(#g26)" stroke-width="2.0"/>
<path d="M597.87 375.27L614.51 375.69L618.00 366.52Z" fill="url(#g27)" stroke="url(#g27)" stroke-width="2.0"/>
<path d="M597.87 375.27L595.74 380.57L614.51 375.69Z" fill="url(#g28)" stroke="url(#g28)" stroke-width="2.0"/>
<path d="M595.74 380.57L611.01 384.87L614.51 375.69Z" fill="url(#g29)" stroke="url(#g29)" stroke-width="2.0"/>
<path d="M595.74 380.57L593.66 385.90L611.01 384.87Z" fill="url(#g30)" stroke="url(#g30)" stroke-width="2.0"/>
<path d="M593.66 385.90L607.91 394.18L611.01 384.87Z" fill="url(#g31)" stroke="url(#g31)" stroke-width="2.0"/>
<path d="M593.66 385.90L591.85 391.32L607.91 394.18Z" fill="url(#g32)" stroke="url(#g32)" stroke-width="2.0"/>
<path d="M591.85 391.32L604.80 403.49L607.91 394.18Z" fill="url(#g33)" stroke="url(#g33)" stroke-width="2.0"/>
<path d="M591.85 391.32L590.03 396.74L604.80 403.49Z" fill="url(#g34)" stroke="url(#g34)" stroke-width="2.0"/>
<path d="M590.03 396.74L601.63 412.79L604.80 403.49Z" fill="url(#g35)" stroke="url(#g35)" stroke-width="2.0"/>
<path d="M590.03 396.74L588.21 402.16L601.63 412.79Z" fill="url(#g36)" stroke="url(#g36)" stroke-width="2.0"/>
<path d="M588.21 402.16L597.88 421.86L601.63 412.79Z" fill="url(#g37)" stroke="url(#g37)" stroke-width="2.0"/>
<path d="M588.21 402.16L586.39 407.58L597.88 421.86Z" fill="url(#g38)" stroke="url(#g38)" stroke-width="2.0"/>
<path d="M586.39 407.58L594.12 430.93L597.88 421.86Z" fill="url(#g39)" stroke="url(#g39)" stroke-width="2.0"/>
<path d="M586.39 407.58L584.57 413.00L594.12 430.93Z" fill="url(#g40)" stroke="url(#g40)" stroke-width="2.0"/>
<path d="M584.57 413.00L590.37 440.00L594.12 430.93Z" fill="url(#g41)" stroke="url(#g41)" stroke-width="2.0"/>
<path d="M618.00 366.52L614.51 375.69L658.00 358.86Z" fill="url(#g42)" stroke="url(#g42)" stroke-width="2.0"/>
<path d="M614.51 375.69L651.78 373.59L658.00 358.86Z" fill="url(#g43)" stroke="url(#g43)" stroke-width="2.0"/>
<path d="M614.51 375.69L611.01 384.87L651.78 373.59Z" fill="url(#g44)" stroke="url(#g44)" stroke-width="2.0"/>
<path d="M611.01 384.87L645.82 388.43L651.78 373.59Z" fill="url(#g45)" stroke="url(#g45)" stroke-width="2.0"/>
<path d="M611.01 384.87L607.91 394.18L645.82 388.43Z" fill="url(#g46)" stroke="url(#g46)" stroke-width="2.0"/>
<path d="M607.91 394.18L640.76 403.61L645.82 388.43Z" fill="url(#g47)" stroke="url(#g47)" stroke-width="2.0"/>
<path d="M607.91 394.18L604.80 403.49L640.76 403.61Z" fill="url(#g48)" stroke="url(#g48)" stroke-width="2.0"/>
<path d="M604.80 403.49L633.68 417.73L640.76 403.61Z" fill="url(#g49)" stroke="url(#g49)" stroke-width="2.0"/>
<path d="M604.80 403.49L601.63 412.79L633.68 417.73Z" fill="url(#g50)" stroke="url(#g50)" stroke-width="2.0"/>
<path d="M601.63 412.79L624.16 430.58L633.68 417.73Z" fill="url(#g51)" stroke="url(#g51)" stroke-width="2.0"/>
<path d="M601.63 412.79L597.88 421.86L624.16 430.58Z" fill="url(#g52)" stroke="url(#g52)" stroke-width="2.0"/>
<path d="M597.88 421.86L614.86 443.59L624.16 430.58Z" fill="url(#g53)" stroke="url(#g53)" stroke-width="2.0"/>
<path d="M597.88 421.86L594.12 430.93L614.86 443.59Z" fill="url(#g54)" stroke="url(#g54)" stroke-width="2.0"/>
<path d="M594.12 430.93L605.96 456.89L614.86 443.59Z" fill="url(#g55)" stroke="url(#g55)" stroke-width="2.0"/>
<path d="M594.12 430.93L590.37 440.00L605.96 456.89Z" fill="url(#g56)" stroke="url(#g56)" stroke-width="2.0"/>
<path d="M590.37 440.00L596.81 470.00L605.96 456.89Z" fill="url(#g57)" stroke="url(#g57)" stroke-width="2.0"/>
<path d="M658.00 358.86L651.78 373.59L680.00 354.64Z" fill="url(#g58)" stroke="url(#g58)" stroke-width="2.0"/>
<path d="M651.78 373.59L671.62 371.55L680.00 354.64Z" fill="url(#g59)" stroke="url(#g59)" stroke-width="2.0"/>
<path d="M651.78 373.59L645.82 388.43L671.62 371.55Z" fill="url(#g60)" stroke="url(#g60)" stroke-width="2.0"/>
<path d="M645.82 388.43L663.74 388.67L671.62 371.55Z" fill="url(#g61)" stroke="url(#g61)" stroke-width="2.0"/>
<path d="M645.82 388.43L640.76 403.61L663.74 388.67Z" fill="url(#g62)" stroke="url(#g62)" stroke-width="2.0"/>
<path d="M640.76 403.61L657.78 406.57L663.74 388.67Z" fill="url(#g63)" stroke="url(#g63)" stroke-width="2.0"/>
<path d="M640.76 403.61L633.68 417.73L657.78 406.57Z" fill="url(#g64)" stroke="url(#g64)" stroke-width="2.0"/>
<path d="M633.68 417.73L648.94 423.11L657.78 406.57Z" fill="url(#g65)" stroke="url(#g65)" stroke-width="2.0"/>
<path d="M633.68 417.73L624.16 430.58L648.94 423.11Z" fill="url(#g66)" stroke="url(#g66)" stroke-width="2.0"/>
<path d="M624.16 430.58L638.85 439.05L648.94 423.11Z" fill="url(#g67)" stroke="url(#g67)" stroke-width="2.0"/>
<path d="M624.16 430.58L614.86 443.59L638.85 439.05Z" fill="url(#g68)" stroke="url(#g68)" stroke-width="2.0"/>
<path d="M614.86 443.59L625.48 452.37L638.85 439.05Z" fill="url(#g69)" stroke="url(#g69)" stroke-width="2.0"/>
<path d="M614.86 443.59L605.96 456.89L625.48 452.37Z" fill="url(#g70)" stroke="url(#g70)" stroke-width="2.0"/>
<path d="M605.96 456.89L612.12 465.68L625.48 452.37Z" fill="url(#g71)" stroke="url(#g71)" stroke-width="2.0"/>
<path d="M605.96 456.89L596.81 470.00L612.12 465.68Z" fill="url(#g72)" stroke="url(#g72)" stroke-width="2.0"/>
<path d="M596.81 470.00L598.75 479.00L612.12 465.68Z" fill="url(#g73)" stroke="url(#g73)" stroke-width="2.0"/>
<path d="M680.00 354.64L671.62 371.55L707.00 349.47Z" fill="url(#g74)" stroke="url(#g74)" stroke-width="2.0"/>
<path d="M671.62 371.55L700.48 371.48L707.00 349.47Z" fill="url(#g75)" stroke="url(#g75)" stroke-width="2.0"/>
<path d="M671.62 371.55L663.74 388.67L700.48 371.48Z" fill="url(#g76)" stroke="url(#g76)" stroke-width="2.0"/>
<path d="M663.74 388.67L692.50 392.90L700.48 371.48Z" fill="url(#g77)" stroke="url(#g77)" stroke-width="2.0"/>
<path d="M663.74 388.67L657.78 406.57L692.50 392.90Z" fill="url(#g78)" stroke="url(#g78)" stroke-width="2.0"/>
<path d="M657.78 406.57L682.02 413.30L692.50 392.90Z" fill="url(#g79)" stroke="url(#g79)" stroke-width="2.0"/>
<path d="M657.78 406.57L648.94 423.11L682.02 413.30Z" fill="url(#g80)" stroke="url(#g80)" stroke-width="2.0"/>
<path d="M648.94 423.11L668.81 432.06L682.02 413.30Z" fill="url(#g81)" stroke="url(#g81)" stroke-width="2.0"/>
<path d="M648.94 423.11L638.85 439.05L668.81 432.06Z" fill="url(#g82)" stroke="url(#g82)" stroke-width="2.0"/>
<path d="M638.85 439.05L652.83 448.29L668.81 432.06Z" fill="url(#g83)" stroke="url(#g83)" stroke-width="2.0"/>
<path d="M638.85 439.05L625.48 452.37L652.83 448.29Z" fill="url(#g84)" stroke="url(#g84)" stroke-width="2.0"/>
<path d="M625.48 452.37L635.27 463.05L652.83 448.29Z" fill="url(#g85)" stroke="url(#g85)" stroke-width="2.0"/>
<path d="M625.48 452.37L612.12 465.68L635.27 463.05Z" fill="url(#g86)" stroke="url(#g86)" stroke-width="2.0"/>
<path d="M612.12 465.68L617.53 477.60L635.27 463.05Z" fill="url(#g87)" stroke="url(#g87)" stroke-width="2.0"/>
<path d="M612.12 465.68L598.75 479.00L617.53 477.60Z" fill="url(#g88)" stroke="url(#g88)" stroke-width="2.0"/>
<path d="M598.75 479.00L601.97 494.00L617.53 477.60Z" fill="url(#g89)" stroke="url(#g89)" stroke-width="2.0"/>
<path d="M707.00 349.47L700.48 371.48L740.00 343.16Z" fill="url(#g90)" stroke="url(#g90)" stroke-width="2.0"/>
<path d="M700.48 371.48L734.24 369.86L740.00 343.16Z" fill="url(#g91)" stroke="url(#g91)" stroke-width="2.0"/>
<path d="M700.48 371.48L692.50 392.90L734.24 369.86Z" fill="url(#g92)" stroke="url(#g92)" stroke-width="2.0"/>
<path d="M692.50 392.90L725.21 395.32L734.24 369.86Z" fill="url(#g93)" stroke="url(#g93)" stroke-width="2.0"/>
<path d="M692.50 392.90L682.02 413.30L725.21 395.32Z" fill="url(#g94)" stroke="url(#g94)" stroke-width="2.0"/>
<path d="M682.02 413.30L710.88 418.49L725.21 395.32Z" fill="url(#g95)" stroke="url(#g95)" stroke-width="2.0"/>
<path d="M682.02 413.30L668.81 432.06L710.88 418.49Z" fill="url(#g96)" stroke="url(#g96)" stroke-width="2.0"/>
<path d="M668.81 432.06L693.78 439.70L710.88 418.49Z" fill="url(#g97)" stroke="url(#g97)" stroke-width="2.0"/>
<path d="M668.81 432.06L652.83 448.29L693.78 439.70Z" fill="url(#g98)" stroke="url(#g98)" stroke-width="2.0"/>
<path d="M652.83 448.29L670.95 454.68L693.78 439.70Z" fill="url(#g99)" stroke="url(#g99)" stroke-width="2.0"/>
<path d="M652.83 448.29L635.27 463.05L670.95 454.68Z" fill="url(#g100)" stroke="url(#g100)" stroke-width="2.0"/>
<path d="M635.27 463.05L648.03 469.53L670.95 454.68Z" fill="url(#g101)" stroke="url(#g101)" stroke-width="2.0"/>
<path d="M635.27 463.05L617.53 477.60L648.03 469.53Z" fill="url(#g102)" stroke="url(#g102)" stroke-width="2.0"/>
<path d="M617.53 477.60L625.01 484.21L648.03 469.53Z" fill="url(#g103)" stroke="url(#g103)" stroke-width="2.0"/>
<path d="M617.53 477.60L601.97 494.00L625.01 484.21Z" fill="url(#g104)" stroke="url(#g104)" stroke-width="2.0"/>
<path d="M601.97 494.00L603.47 501.00L625.01 484.21Z" fill="url(#g105)" stroke="url(#g105)" stroke-width="2.0"/>
<path d="M740.00 343.16L734.24 369.86L775.00 336.46Z" fill="url(#g106)" stroke="url(#g106)" stroke-width="2.0"/>
<path d="M734.24 369.86L769.81 367.86L775.00 336.46Z" fill="url(#g107)" stroke="url(#g107)" stroke-width="2.0"/>
<path d="M734.24 369.86L725.21 395.32L769.81 367.86Z" fill="url(#g108)" stroke="url(#g108)" stroke-width="2.0"/>
<path d="M725.21 395.32L759.25 397.22L769.81 367.86Z" fill="url(#g109)" stroke="url(#g109)" stroke-width="2.0"/>
<path d="M725.21 395.32L710.88 418.49L759.25 397.22Z" fill="url(#g110)" stroke="url(#g110)" stroke-width="2.0"/>
<path d="M710.88 418.49L740.17 422.52L759.25 397.22Z" fill="url(#g111)" stroke="url(#g111)" stroke-width="2.0"/>
<path d="M710.88 418.49L693.78 439.70L740.17 422.52Z" fill="url(#g112)" stroke="url(#g112)" stroke-width="2.0"/>
<path d="M693.78 439.70L716.75 443.62L740.17 422.52Z" fill="url(#g113)" stroke="url(#g113)" stroke-width="2.0"/>
<path d="M693.78 439.70L670.95 454.68L716.75 443.62Z" fill="url(#g114)" stroke="url(#g114)" stroke-width="2.0"/>
<path d="M670.95 454.68L689.13 459.43L716.75 443.62Z" fill="url(#g115)" stroke="url(#g115)" stroke-width="2.0"/>
<path d="M670.95 454.68L648.03 469.53L689.13 459.43Z" fill="url(#g116)" stroke="url(#g116)" stroke-width="2.0"/>
<path d="M648.03 469.53L660.87 474.04L689.13 459.43Z" fill="url(#g117)" stroke="url(#g117)" stroke-width="2.0"/>
<path d="M648.03 469.53L625.01 484.21L660.87 474.04Z" fill="url(#g118)" stroke="url(#g118)" stroke-width="2.0"/>
<path d="M625.01 484.21L632.27 488.00L660.87 474.04Z" fill="url(#g119)" stroke="url(#g119)" stroke-width="2.0"/>
<path d="M625.01 484.21L603.47 501.00L632.27 488.00Z" fill="url(#g120)" stroke="url(#g120)" stroke-width="2.0"/>
<path d="M603.47 501.00L603.69 502.00L632.27 488.00Z" fill="url(#g121)" stroke="url(#g121)" stroke-width="2.0"/>
<path d="M775.00 336.46L769.81 367.86L812.00 329.37Z" fill="url(#g122)" stroke="url(#g122)" stroke-width="2.0"/>
<path d="M769.81 367.86L804.30 365.02L812.00 329.37Z" fill="url(#g123)" stroke="url(#g123)" stroke-width="2.0"/>
<path d="M769.81 367.86L759.25 397.22L804.30 365.02Z" fill="url(#g124)" stroke="url(#g124)" stroke-width="2.0"/>
<path d="M759.25 397.22L791.05 398.32L804.30 365.02Z" fill="url(#g125)" stroke="url(#g125)" stroke-width="2.0"/>
<path d="M759.25 397.22L740.17 422.52L791.05 398.32Z" fill="url(#g126)" stroke="url(#g126)" stroke-width="2.0"/>
<path d="M740.17 422.52L767.75 426.15L791.05 398.32Z" fill="url(#g127)" stroke="url(#g127)" stroke-width="2.0"/>
<path d="M740.17 422.52L716.75 443.62L767.75 426.15Z" fill="url(#g128)" stroke="url(#g128)" stroke-width="2.0"/>
<path d="M716.75 443.62L738.50 447.12L767.75 426.15Z" fill="url(#g129)" stroke="url(#g129)" stroke-width="2.0"/>
<path d="M716.75 443.62L689.13 459.43L738.50 447.12Z" fill="url(#g130)" stroke="url(#g130)" stroke-width="2.0"/>
<path d="M689.13 459.43L705.85 463.38L738.50 447.12Z" fill="url(#g131)" stroke="url(#g131)" stroke-width="2.0"/>
<path d="M689.13 459.43L660.87 474.04L705.85 463.38Z" fill="url(#g132)" stroke="url(#g132)" stroke-width="2.0"/>
<path d="M660.87 474.04L671.91 476.63L705.85 463.38Z" fill="url(#g133)" stroke="url(#g133)" stroke-width="2.0"/>
<path d="M660.87 474.04L632.27 488.00L671.91 476.63Z" fill="url(#g134)" stroke="url(#g134)" stroke-width="2.0"/>
<path d="M632.27 488.00L637.90 489.82L671.91 476.63Z" fill="url(#g135)" stroke="url(#g135)" stroke-width="2.0"/>
<path d="M632.27 488.00L603.69 502.00L637.90 489.82Z" fill="url(#g136)" stroke="url(#g136)" stroke-width="2.0"/>
<path d="M603.69 502.00L603.90 503.00L637.90 489.82Z" fill="url(#g137)" stroke="url(#g137)" stroke-width="2.0"/>
<path d="M998.30 293.70L993.66 296.13L993.00 294.71Z" fill="url(#g138)" stroke="url(#g138)" stroke-width="2.0"/>
<path d="M998.30 293.70L994.33 297.54L993.66 296.13Z" fill="url(#g139)" stroke="url(#g139)" stroke-width="2.0"/>
<path d="M998.30 293.70L994.99 298.95L994.33 297.54Z" fill="url(#g140)" stroke="url(#g140)" stroke-width="2.0"/>
<path d="M998.30 293.70L995.65 300.36L994.99 298.95Z" fill="url(#g141)" stroke="url(#g141)" stroke-width="2.0"/>
<path d="M998.30 293.70L996.31 301.77L995.65 300.36Z" fill="url(#g142)" stroke="url(#g142)" stroke-width="2.0"/>
<path d="M998.30 293.70L996.97 303.18L996.31 301.77Z" fill="url(#g143)" stroke="url(#g143)" stroke-width="2.0"/>
<path d="M998.30 293.70L997.64 304.59L996.97 303.18Z" fill="url(#g144)" stroke="url(#g144)" stroke-width="2.0"/>
<path d="M998.30 293.70L998.30 306.00L997.64 304.59Z" fill="url(#g145)" stroke="url(#g145)" stroke-width="2.0"/>
<path d="M993.00 294.71L993.66 296.13L980.00 297.20Z" fill="url(#g146)" stroke="url(#g146)" stroke-width="2.0"/>
<path d="M993.66 296.13L981.19 302.07L980.00 297.20Z" fill="url(#g147)" stroke="url(#g147)" stroke-width="2.0"/>
<path d="M993.66 296.13L994.33 297.54L981.19 302.07Z" fill="url(#g148)" stroke="url(#g148)" stroke-width="2.0"/>
<path d="M994.33 297.54L982.38 306.93L981.19 302.07Z" fill="url(#g149)" stroke="url(#g149)" stroke-width="2.0"/>
<path d="M994.33 297.54L994.99 298.95L982.38 306.93Z" fill="url(#g150)" stroke="url(#g150)" stroke-width="2.0"/>
<path d="M994.99 298.95L983.57 311.79L982.38 306.93Z" fill="url(#g151)" stroke="url(#g151)" stroke-width="2.0"/>
<path d="M994.99 298.95L995.65 300.36L983.57 311.79Z" fill="url(#g152)" stroke="url(#g152)" stroke-width="2.0"/>
<path d="M995.65 300.36L984.77 316.66L983.57 311.79Z" fill="url(#g153)" stroke="url(#g153)" stroke-width="2.0"/>
<path d="M995.65 300.36L996.31 301.77L984.77 316.66Z" fill="url(#g154)" stroke="url(#g154)" stroke-width="2.0"/>
<path d="M996.31 301.77L985.96 321.52L984.77 316.66Z" fill="url(#g155)" stroke="url(#g155)" stroke-width="2.0"/>
<path d="M996.31 301.77L996.97 303.18L985.96 321.52Z" fill="url(#g156)" stroke="url(#g156)" stroke-width="2.0"/>
<path d="M996.97 303.18L990.00 324.40L985.96 321.52Z" fill="url(#g157)" stroke="url(#g157)" stroke-width="2.0"/>
<path d="M996.97 303.18L997.64 304.59L990.00 324.40Z" fill="url(#g158)" stroke="url(#g158)" stroke-width="2.0"/>
<path d="M997.64 304.59L994.15 327.20L990.00 324.40Z" fill="url(#g159)" stroke="url(#g159)" stroke-width="2.0"/>
<path d="M997.64 304.59L998.30 306.00L994.15 327.20Z" fill="url(#g160)" stroke="url(#g160)" stroke-width="2.0"/>
<path d="M998.30 306.00L998.30 330.00L994.15 327.20Z" fill="url(#g161)" stroke="url(#g161)" stroke-width="2.0"/>
<path d="M980.00 297.20L981.19 302.07L965.00 300.08Z" fill="url(#g162)" stroke="url(#g162)" stroke-width="2.0"/>
<path d="M981.19 302.07L967.37 307.40L965.00 300.08Z" fill="url(#g163)" stroke="url(#g163)" stroke-width="2.0"/>
<path d="M981.19 302.07L982.38 306.93L967.37 307.40Z" fill="url(#g164)" stroke="url(#g164)" stroke-width="2.0"/>
<path d="M982.38 306.93L969.74 314.72L967.37 307.40Z" fill="url(#g165)" stroke="url(#g165)" stroke-width="2.0"/>
<path d="M982.38 306.93L983.57 311.79L969.74 314.72Z" fill="url(#g166)" stroke="url(#g166)" stroke-width="2.0"/>
<path d="M983.57 311.79L972.23 321.97L969.74 314.72Z" fill="url(#g167)" stroke="url(#g167)" stroke-width="2.0"/>
<path d="M983.57 311.79L984.77 316.66L972.23 321.97Z" fill="url(#g168)" stroke="url(#g168)" stroke-width="2.0"/>
<path d="M984.77 316.66L977.18 327.86L972.23 321.97Z" fill="url(#g169)" stroke="url(#g169)" stroke-width="2.0"/>
<path d="M984.77 316.66L985.96 321.52L977.18 327.86Z" fill="url(#g170)" stroke="url(#g170)" stroke-width="2.0"/>
<path d="M985.96 321.52L982.13 333.75L977.18 327.86Z" fill="url(#g171)" stroke="url(#g171)" stroke-width="2.0"/>
<path d="M985.96 321.52L990.00 324.40L982.13 333.75Z" fill="url(#g172)" stroke="url(#g172)" stroke-width="2.0"/>
<path d="M990.00 324.40L987.08 339.65L982.13 333.75Z" fill="url(#g173)" stroke="url(#g173)" stroke-width="2.0"/>
<path d="M990.00 324.40L994.15 327.20L987.08 339.65Z" fill="url(#g174)" stroke="url(#g174)" stroke-width="2.0"/>
<path d="M994.15 327.20L992.04 345.53L987.08 339.65Z" fill="url(#g175)" stroke="url(#g175)" stroke-width="2.0"/>
<path d="M994.15 327.20L998.30 330.00L992.04 345.53Z" fill="url(#g176)" stroke="url(#g176)" stroke-width="2.0"/>
<path d="M998.30 330.00L998.30 350.00L992.04 345.53Z" fill="url(#g177)" stroke="url(#g177)" stroke-width="2.0"/>
<path d="M965.00 300.08L967.37 307.40L935.00 305.82Z" fill="url(#g178)" stroke="url(#g178)" stroke-width="2.0"/>
<path d="M967.37 307.40L938.61 317.28L935.00 305.82Z" fill="url(#g179)" stroke="url(#g179)" stroke-width="2.0"/>
<path d="M967.37 307.40L969.74 314.72L938.61 317.28Z" fill="url(#g180)" stroke="url(#g180)" stroke-width="2.0"/>
<path d="M969.74 314.72L943.93 327.94L938.61 317.28Z" fill="url(#g181)" stroke="url(#g181)" stroke-width="2.0"/>
<path d="M969.74 314.72L972.23 321.97L943.93 327.94Z" fill="url(#g182)" stroke="url(#g182)" stroke-width="2.0"/>
<path d="M972.23 321.97L950.33 338.10L943.93 327.94Z" fill="url(#g183)" stroke="url(#g183)" stroke-width="2.0"/>
<path d="M972.23 321.97L977.18 327.86L950.33 338.10Z" fill="url(#g184)" stroke="url(#g184)" stroke-width="2.0"/>
<path d="M977.18 327.86L957.65 347.40L950.33 338.10Z" fill="url(#g185)" stroke="url(#g185)" stroke-width="2.0"/>
<path d="M977.18 327.86L982.13 333.75L957.65 347.40Z" fill="url(#g186)" stroke="url(#g186)" stroke-width="2.0"/>
<path d="M982.13 333.75L967.40 354.41L957.65 347.40Z" fill="url(#g187)" stroke="url(#g187)" stroke-width="2.0"/>
<path d="M982.13 333.75L987.08 339.65L967.40 354.41Z" fill="url(#g188)" stroke="url(#g188)" stroke-width="2.0"/>
<path d="M987.08 339.65L977.16 361.41L967.40 354.41Z" fill="url(#g189)" stroke="url(#g189)" stroke-width="2.0"/>
<path d="M987.08 339.65L992.04 345.53L977.16 361.41Z" fill="url(#g190)" stroke="url(#g190)" stroke-width="2.0"/>
<path d="M992.04 345.53L986.91 368.42L977.16 361.41Z" fill="url(#g191)" stroke="url(#g191)" stroke-width="2.0"/>
<path d="M992.04 345.53L998.30 350.00L986.91 368.42Z" fill="url(#g192)" stroke="url(#g192)" stroke-width="2.0"/>
<path d="M998.30 350.00L998.30 372.00L986.91 368.42Z" fill="url(#g193)" stroke="url(#g193)" stroke-width="2.0"/>
<path d="M935.00 305.82L938.61 317.28L917.00 309.27Z" fill="url(#g194)" stroke="url(#g194)" stroke-width="2.0"/>
<path d="M938.61 317.28L917.10 324.12L917.00 309.27Z" fill="url(#g195)" stroke="url(#g195)" stroke-width="2.0"/>
<path d="M938.61 317.28L943.93 327.94L917.10 324.12Z" fill="url(#g196)" stroke="url(#g196)" stroke-width="2.0"/>
<path d="M943.93 327.94L923.35 337.89L917.10 324.12Z" fill="url(#g197)" stroke="url(#g197)" stroke-width="2.0"/>
<path d="M943.93 327.94L950.33 338.10L923.35 337.89Z" fill="url(#g198)" stroke="url(#g198)" stroke-width="2.0"/>
<path d="M950.33 338.10L932.22 349.55L923.35 337.89Z" fill="url(#g199)" stroke="url(#g199)" stroke-width="2.0"/>
<path d="M950.33 338.10L957.65 347.40L932.22 349.55Z" fill="url(#g200)" stroke="url(#g200)" stroke-width="2.0"/>
<path d="M957.65 347.40L944.34 358.61L932.22 349.55Z" fill="url(#g201)" stroke="url(#g201)" stroke-width="2.0"/>
<path d="M957.65 347.40L967.40 354.41L944.34 358.61Z" fill="url(#g202)" stroke="url(#g202)" stroke-width="2.0"/>
<path d="M967.40 354.41L956.45 367.67L944.34 358.61Z" fill="url(#g203)" stroke="url(#g203)" stroke-width="2.0"/>
<path d="M967.40 354.41L977.16 361.41L956.45 367.67Z" fill="url(#g204)" stroke="url(#g204)" stroke-width="2.0"/>
<path d="M977.16 361.41L970.18 373.84L956.45 367.67Z" fill="url(#g205)" stroke="url(#g205)" stroke-width="2.0"/>
<path d="M977.16 361.41L986.91 368.42L970.18 373.84Z" fill="url(#g206)" stroke="url(#g206)" stroke-width="2.0"/>
<path d="M986.91 368.42L984.24 379.42L970.18 373.84Z" fill="url(#g207)" stroke="url(#g207)" stroke-width="2.0"/>
<path d="M986.91 368.42L998.30 372.00L984.24 379.42Z" fill="url(#g208)" stroke="url(#g208)" stroke-width="2.0"/>
<path d="M998.30 372.00L998.30 385.00L984.24 379.42Z" fill="url(#g209)" stroke="url(#g209)" stroke-width="2.0"/>
<path d="M917.00 309.27L917.10 324.12L888.00 314.82Z" fill="url(#g210)" stroke="url(#g210)" stroke-width="2.0"/>
<path d="M917.10 324.12L894.23 332.89L888.00 314.82Z" fill="url(#g211)" stroke="url(#g211)" stroke-width="2.0"/>
<path d="M917.10 324.12L923.35 337.89L894.23 332.89Z" fill="url(#g212)" stroke="url(#g212)" stroke-width="2.0"/>
<path d="M923.35 337.89L903.10 349.38L894.23 332.89Z" fill="url(#g213)" stroke="url(#g213)" stroke-width="2.0"/>
<path d="M923.35 337.89L932.22 349.55L903.10 349.38Z" fill="url(#g214)" stroke="url(#g214)" stroke-width="2.0"/>
<path d="M932.22 349.55L916.98 362.54L903.10 349.38Z" fill="url(#g215)" stroke="url(#g215)" stroke-width="2.0"/>
<path d="M932.22 349.55L944.34 358.61L916.98 362.54Z" fill="url(#g216)" stroke="url(#g216)" stroke-width="2.0"/>
<path d="M944.34 358.61L932.43 373.47L916.98 362.54Z" fill="url(#g217)" stroke="url(#g217)" stroke-width="2.0"/>
<path d="M944.34 358.61L956.45 367.67L932.43 373.47Z" fill="url(#g218)" stroke="url(#g218)" stroke-width="2.0"/>
<path d="M956.45 367.67L949.49 382.11L932.43 373.47Z" fill="url(#g219)" stroke="url(#g219)" stroke-width="2.0"/>
<path d="M956.45 367.67L970.18 373.84L949.49 382.11Z" fill="url(#g220)" stroke="url(#g220)" stroke-width="2.0"/>
<path d="M970.18 373.84L966.56 390.75L949.49 382.11Z" fill="url(#g221)" stroke="url(#g221)" stroke-width="2.0"/>
<path d="M970.18 373.84L984.24 379.42L966.56 390.75Z" fill="url(#g222)" stroke="url(#g222)" stroke-width="2.0"/>
<path d="M984.24 379.42L982.75 400.89L966.56 390.75Z" fill="url(#g223)" stroke="url(#g223)" stroke-width="2.0"/>
<path d="M984.24 379.42L998.30 385.00L982.75 400.89Z" fill="url(#g224)" stroke="url(#g224)" stroke-width="2.0"/>
<path d="M998.30 385.00L998.30 412.00L982.75 400.89Z" fill="url(#g225)" stroke="url(#g225)" stroke-width="2.0"/>
<path d="M888.00 314.82L894.23 332.89L866.00 319.03Z" fill="url(#g226)" stroke="url(#g226)" stroke-width="2.0"/>
<path d="M894.23 332.89L863.76 341.86L866.00 319.03Z" fill="url(#g227)" stroke="url(#g227)" stroke-width="2.0"/>
<path d="M894.23 332.89L903.10 349.38L863.76 341.86Z" fill="url(#g228)" stroke="url(#g228)" stroke-width="2.0"/>
<path d="M903.10 349.38L877.01 359.17L863.76 341.86Z" fill="url(#g229)" stroke="url(#g229)" stroke-width="2.0"/>
<path d="M903.10 349.38L916.98 362.54L877.01 359.17Z" fill="url(#g230)" stroke="url(#g230)" stroke-width="2.0"/>
<path d="M916.98 362.54L894.33 374.04L877.01 359.17Z" fill="url(#g231)" stroke="url(#g231)" stroke-width="2.0"/>
<path d="M916.98 362.54L932.43 373.47L894.33 374.04Z" fill="url(#g232)" stroke="url(#g232)" stroke-width="2.0"/>
<path d="M932.43 373.47L913.46 386.70L894.33 374.04Z" fill="url(#g233)" stroke="url(#g233)" stroke-width="2.0"/>
<path d="M932.43 373.47L949.49 382.11L913.46 386.70Z" fill="url(#g234)" stroke="url(#g234)" stroke-width="2.0"/>
<path d="M949.49 382.11L933.79 397.02L913.46 386.70Z" fill="url(#g235)" stroke="url(#g235)" stroke-width="2.0"/>
<path d="M949.49 382.11L966.56 390.75L933.79 397.02Z" fill="url(#g236)" stroke="url(#g236)" stroke-width="2.0"/>
<path d="M966.56 390.75L955.29 405.02L933.79 397.02Z" fill="url(#g237)" stroke="url(#g237)" stroke-width="2.0"/>
<path d="M966.56 390.75L982.75 400.89L955.29 405.02Z" fill="url(#g238)" stroke="url(#g238)" stroke-width="2.0"/>
<path d="M982.75 400.89L976.79 413.02L955.29 405.02Z" fill="url(#g239)" stroke="url(#g239)" stroke-width="2.0"/>
<path d="M982.75 400.89L998.30 412.00L976.79 413.02Z" fill="url(#g240)" stroke="url(#g240)" stroke-width="2.0"/>
<path d="M998.30 412.00L998.30 421.00L976.79 413.02Z" fill="url(#g241)" stroke="url(#g241)" stroke-width="2.0"/>
<path d="M866.00 319.03L863.76 341.86L842.00 323.63Z" fill="url(#g242)" stroke="url(#g242)" stroke-width="2.0"/>
<path d="M863.76 341.86L837.33 348.56L842.00 323.63Z" fill="url(#g243)" stroke="url(#g243)" stroke-width="2.0"/>
<path d="M863.76 341.86L877.01 359.17L837.33 348.56Z" fill="url(#g244)" stroke="url(#g244)" stroke-width="2.0"/>
<path d="M877.01 359.17L853.71 369.75L837.33 348.56Z" fill="url(#g245)" stroke="url(#g245)" stroke-width="2.0"/>
<path d="M877.01 359.17L894.33 374.04L853.71 369.75Z" fill="url(#g246)" stroke="url(#g246)" stroke-width="2.0"/>
<path d="M894.33 374.04L874.98 386.08L853.71 369.75Z" fill="url(#g247)" stroke="url(#g247)" stroke-width="2.0"/>
<path d="M894.33 374.04L913.46 386.70L874.98 386.08Z" fill="url(#g248)" stroke="url(#g248)" stroke-width="2.0"/>
<path d="M913.46 386.70L898.38 398.62L874.98 386.08Z" fill="url(#g249)" stroke="url(#g249)" stroke-width="2.0"/>
<path d="M913.46 386.70L933.79 397.02L898.38 398.62Z" fill="url(#g250)" stroke="url(#g250)" stroke-width="2.0"/>
<path d="M933.79 397.02L923.36 408.38L898.38 398.62Z" fill="url(#g251)" stroke="url(#g251)" stroke-width="2.0"/>
<path d="M933.79 397.02L955.29 405.02L923.36 408.38Z" fill="url(#g252)" stroke="url(#g252)" stroke-width="2.0"/>
<path d="M955.29 405.02L948.33 418.13L923.36 408.38Z" fill="url(#g253)" stroke="url(#g253)" stroke-width="2.0"/>
<path d="M955.29 405.02L976.79 413.02L948.33 418.13Z" fill="url(#g254)" stroke="url(#g254)" stroke-width="2.0"/>
<path d="M976.79 413.02L973.32 427.87L948.33 418.13Z" fill="url(#g255)" stroke="url(#g255)" stroke-width="2.0"/>
<path d="M976.79 413.02L998.30 421.00L973.32 427.87Z" fill="url(#g256)" stroke="url(#g256)" stroke-width="2.0"/>
<path d="M998.30 421.00L998.30 437.60L973.32 427.87Z" fill="url(#g257)" stroke="url(#g257)" stroke-width="2.0"/>
<path d="M842.00 323.63L837.33 348.56L812.00 329.37Z" fill="url(#g258)" stroke="url(#g258)" stroke-width="2.0"/>
<path d="M837.33 348.56L813.67 355.78L812.00 329.37Z" fill="url(#g259)" stroke="url(#g259)" stroke-width="2.0"/>
<path d="M837.33 348.56L853.71 369.75L813.67 355.78Z" fill="url(#g260)" stroke="url(#g260)" stroke-width="2.0"/>
<path d="M853.71 369.75L836.14 376.77L813.67 355.78Z" fill="url(#g261)" stroke="url(#g261)" stroke-width="2.0"/>
<path d="M853.71 369.75L874.98 386.08L836.14 376.77Z" fill="url(#g262)" stroke="url(#g262)" stroke-width="2.0"/>
<path d="M874.98 386.08L861.91 394.04L836.14 376.77Z" fill="url(#g263)" stroke="url(#g263)" stroke-width="2.0"/>
<path d="M874.98 386.08L898.38 398.62L861.91 394.04Z" fill="url(#g264)" stroke="url(#g264)" stroke-width="2.0"/>
<path d="M898.38 398.62L889.14 408.92L861.91 394.04Z" fill="url(#g265)" stroke="url(#g265)" stroke-width="2.0"/>
<path d="M898.38 398.62L923.36 408.38L889.14 408.92Z" fill="url(#g266)" stroke="url(#g266)" stroke-width="2.0"/>
<path d="M923.36 408.38L916.38 423.79L889.14 408.92Z" fill="url(#g267)" stroke="url(#g267)" stroke-width="2.0"/>
<path d="M923.36 408.38L948.33 418.13L916.38 423.79Z" fill="url(#g268)" stroke="url(#g268)" stroke-width="2.0"/>
<path d="M948.33 418.13L943.68 438.52L916.38 423.79Z" fill="url(#g269)" stroke="url(#g269)" stroke-width="2.0"/>
<path d="M948.33 418.13L973.32 427.87L943.68 438.52Z" fill="url(#g270)" stroke="url(#g270)" stroke-width="2.0"/>
<path d="M973.32 427.87L970.99 453.26L943.68 438.52Z" fill="url(#g271)" stroke="url(#g271)" stroke-width="2.0"/>
<path d="M973.32 427.87L998.30 437.60L970.99 453.26Z" fill="url(#g272)" stroke="url(#g272)" stroke-width="2.0"/>
<path d="M998.30 437.60L998.30 468.00L970.99 453.26Z" fill="url(#g273)" stroke="url(#g273)" stroke-width="2.0"/>
</g>
<g clip-path="url(#c274)">
<path d="M597.70 488.10L605.80 526.00L700.10 467.53Z" fill="url(#g275)" stroke="url(#g275)" stroke-width="2.0"/>
<path d="M605.80 526.00L712.25 503.15L700.10 467.53Z" fill="url(#g276)" stroke="url(#g276)" stroke-width="2.0"/>
<polygon points="700.1,467.5 1002.3,401.8 1026.6,441.6 712.2,503.1" fill="#009300" stroke="#009300" stroke-width="2.0"/>
</g>
<g clip-path="url(#c277)">
<path d="M995.30 287.70L1116.40 420.40L995.30 406.80Z" fill="url(#g278)" stroke="url(#g278)" stroke-width="2.0"/>
<path d="M1116.40 420.40L1021.60 441.60L995.30 406.80Z" fill="url(#g279)" stroke="url(#g279)" stroke-width="2.0"/>
</g>
<polygon points="576.0,373.5 606.7,526.4 609.3,526.0 601.1,488.1" fill="#000"/>
<g clip-path="url(#c280)">
<polygon points="563.8,554.8 1170.7,425.4 1156.5,590.9 603.3,718.4" fill="#00cc00"/>
<path d="M568.70 557.90L586.13 556.56L588.00 553.78Z" fill="url(#g281)" stroke="url(#g281)" stroke-width="2.0"/>
<path d="M568.70 557.90L584.27 559.34L586.13 556.56Z" fill="url(#g282)" stroke="url(#g282)" stroke-width="2.0"/>
<path d="M568.70 557.90L582.40 562.11L584.27 559.34Z" fill="url(#g283)" stroke="url(#g283)" stroke-width="2.0"/>
<path d="M568.70 557.90L580.54 564.89L582.40 562.11Z" fill="url(#g284)" stroke="url(#g284)" stroke-width="2.0"/>
<path d="M568.70 557.90L578.67 567.67L580.54 564.89Z" fill="url(#g285)" stroke="url(#g285)" stroke-width="2.0"/>
<path d="M568.70 557.90L576.80 570.45L578.67 567.67Z" fill="url(#g286)" stroke="url(#g286)" stroke-width="2.0"/>
<path d="M568.70 557.90L574.94 573.22L576.80 570.45Z" fill="url(#g287)" stroke="url(#g287)" stroke-width="2.0"/>
<path d="M568.70 557.90L573.07 576.00L574.94 573.22Z" fill="url(#g288)" stroke="url(#g288)" stroke-width="2.0"/>
<path d="M588.00 553.78L586.13 556.56L610.50 548.98Z" fill="url(#g289)" stroke="url(#g289)" stroke-width="2.0"/>
<path d="M586.13 556.56L608.10 555.81L610.50 548.98Z" fill="url(#g290)" stroke="url(#g290)" stroke-width="2.0"/>
<path d="M586.13 556.56L584.27 559.34L608.10 555.81Z" fill="url(#g291)" stroke="url(#g291)" stroke-width="2.0"/>
<path d="M584.27 559.34L605.70 562.64L608.10 555.81Z" fill="url(#g292)" stroke="url(#g292)" stroke-width="2.0"/>
<path d="M584.27 559.34L582.40 562.11L605.70 562.64Z" fill="url(#g293)" stroke="url(#g293)" stroke-width="2.0"/>
<path d="M582.40 562.11L603.30 569.47L605.70 562.64Z" fill="url(#g294)" stroke="url(#g294)" stroke-width="2.0"/>
<path d="M582.40 562.11L580.54 564.89L603.30 569.47Z" fill="url(#g295)" stroke="url(#g295)" stroke-width="2.0"/>
<path d="M580.54 564.89L600.74 576.18L603.30 569.47Z" fill="url(#g296)" stroke="url(#g296)" stroke-width="2.0"/>
<path d="M580.54 564.89L578.67 567.67L600.74 576.18Z" fill="url(#g297)" stroke="url(#g297)" stroke-width="2.0"/>
<path d="M578.67 567.67L594.85 580.39L600.74 576.18Z" fill="url(#g298)" stroke="url(#g298)" stroke-width="2.0"/>
<path d="M578.67 567.67L576.80 570.45L594.85 580.39Z" fill="url(#g299)" stroke="url(#g299)" stroke-width="2.0"/>
<path d="M576.80 570.45L588.96 584.59L594.85 580.39Z" fill="url(#g300)" stroke="url(#g300)" stroke-width="2.0"/>
<path d="M576.80 570.45L574.94 573.22L588.96 584.59Z" fill="url(#g301)" stroke="url(#g301)" stroke-width="2.0"/>
<path d="M574.94 573.22L583.07 588.80L588.96 584.59Z" fill="url(#g302)" stroke="url(#g302)" stroke-width="2.0"/>
<path d="M574.94 573.22L573.07 576.00L583.07 588.80Z" fill="url(#g303)" stroke="url(#g303)" stroke-width="2.0"/>
<path d="M573.07 576.00L577.18 593.00L583.07 588.80Z" fill="url(#g304)" stroke="url(#g304)" stroke-width="2.0"/>
<path d="M610.50 548.98L608.10 555.81L635.00 543.75Z" fill="url(#g305)" stroke="url(#g305)" stroke-width="2.0"/>
<path d="M608.10 555.81L636.44 553.92L635.00 543.75Z" fill="url(#g306)" stroke="url(#g306)" stroke-width="2.0"/>
<path d="M608.10 555.81L605.70 562.64L636.44 553.92Z" fill="url(#g307)" stroke="url(#g307)" stroke-width="2.0"/>
<path d="M605.70 562.64L629.34 562.66L636.44 553.92Z" fill="url(#g308)" stroke="url(#g308)" stroke-width="2.0"/>
<path d="M605.70 562.64L603.30 569.47L629.34 562.66Z" fill="url(#g309)" stroke="url(#g309)" stroke-width="2.0"/>
<path d="M603.30 569.47L622.25 571.39L629.34 562.66Z" fill="url(#g310)" stroke="url(#g310)" stroke-width="2.0"/>
<path d="M603.30 569.47L600.74 576.18L622.25 571.39Z" fill="url(#g311)" stroke="url(#g311)" stroke-width="2.0"/>
<path d="M600.74 576.18L615.15 580.12L622.25 571.39Z" fill="url(#g312)" stroke="url(#g312)" stroke-width="2.0"/>
<path d="M600.74 576.18L594.85 580.39L615.15 580.12Z" fill="url(#g313)" stroke="url(#g313)" stroke-width="2.0"/>
<path d="M594.85 580.39L607.18 587.99L615.15 580.12Z" fill="url(#g314)" stroke="url(#g314)" stroke-width="2.0"/>
<path d="M594.85 580.39L588.96 584.59L607.18 587.99Z" fill="url(#g315)" stroke="url(#g315)" stroke-width="2.0"/>
<path d="M588.96 584.59L598.50 595.16L607.18 587.99Z" fill="url(#g316)" stroke="url(#g316)" stroke-width="2.0"/>
<path d="M588.96 584.59L583.07 588.80L598.50 595.16Z" fill="url(#g317)" stroke="url(#g317)" stroke-width="2.0"/>
<path d="M583.07 588.80L589.83 602.33L598.50 595.16Z" fill="url(#g318)" stroke="url(#g318)" stroke-width="2.0"/>
<path d="M583.07 588.80L577.18 593.00L589.83 602.33Z" fill="url(#g319)" stroke="url(#g319)" stroke-width="2.0"/>
<path d="M577.18 593.00L581.16 609.50L589.83 602.33Z" fill="url(#g320)" stroke="url(#g320)" stroke-width="2.0"/>
<path d="M635.00 543.75L636.44 553.92L656.00 539.27Z" fill="url(#g321)" stroke="url(#g321)" stroke-width="2.0"/>
<path d="M636.44 553.92L655.96 553.07L656.00 539.27Z" fill="url(#g322)" stroke="url(#g322)" stroke-width="2.0"/>
<path d="M636.44 553.92L629.34 562.66L655.96 553.07Z" fill="url(#g323)" stroke="url(#g323)" stroke-width="2.0"/>
<path d="M629.34 562.66L646.61 564.40L655.96 553.07Z" fill="url(#g324)" stroke="url(#g324)" stroke-width="2.0"/>
<path d="M629.34 562.66L622.25 571.39L646.61 564.40Z" fill="url(#g325)" stroke="url(#g325)" stroke-width="2.0"/>
<path d="M622.25 571.39L637.26 575.74L646.61 564.40Z" fill="url(#g326)" stroke="url(#g326)" stroke-width="2.0"/>
<path d="M622.25 571.39L615.15 580.12L637.26 575.74Z" fill="url(#g327)" stroke="url(#g327)" stroke-width="2.0"/>
<path d="M615.15 580.12L627.36 586.59L637.26 575.74Z" fill="url(#g328)" stroke="url(#g328)" stroke-width="2.0"/>
<path d="M615.15 580.12L607.18 587.99L627.36 586.59Z" fill="url(#g329)" stroke="url(#g329)" stroke-width="2.0"/>
<path d="M607.18 587.99L617.02 597.04L627.36 586.59Z" fill="url(#g330)" stroke="url(#g330)" stroke-width="2.0"/>
<path d="M607.18 587.99L598.50 595.16L617.02 597.04Z" fill="url(#g331)" stroke="url(#g331)" stroke-width="2.0"/>
<path d="M598.50 595.16L606.68 607.48L617.02 597.04Z" fill="url(#g332)" stroke="url(#g332)" stroke-width="2.0"/>
<path d="M598.50 595.16L589.83 602.33L606.68 607.48Z" fill="url(#g333)" stroke="url(#g333)" stroke-width="2.0"/>
<path d="M589.83 602.33L596.19 617.78L606.68 607.48Z" fill="url(#g334)" stroke="url(#g334)" stroke-width="2.0"/>
<path d="M589.83 602.33L581.16 609.50L596.19 617.78Z" fill="url(#g335)" stroke="url(#g335)" stroke-width="2.0"/>
<path d="M581.16 609.50L585.63 628.00L596.19 617.78Z" fill="url(#g336)" stroke="url(#g336)" stroke-width="2.0"/>
<path d="M656.00 539.27L655.96 553.07L676.00 535.01Z" fill="url(#g337)" stroke="url(#g337)" stroke-width="2.0"/>
<path d="M655.96 553.07L675.63 552.67L676.00 535.01Z" fill="url(#g338)" stroke="url(#g338)" stroke-width="2.0"/>
<path d="M655.96 553.07L646.61 564.40L675.63 552.67Z" fill="url(#g339)" stroke="url(#g339)" stroke-width="2.0"/>
<path d="M646.61 564.40L665.66 567.79L675.63 552.67Z" fill="url(#g340)" stroke="url(#g340)" stroke-width="2.0"/>
<path d="M646.61 564.40L637.26 575.74L665.66 567.79Z" fill="url(#g341)" stroke="url(#g341)" stroke-width="2.0"/>
<path d="M637.26 575.74L655.26 582.55L665.66 567.79Z" fill="url(#g342)" stroke="url(#g342)" stroke-width="2.0"/>
<path d="M637.26 575.74L627.36 586.59L655.26 582.55Z" fill="url(#g343)" stroke="url(#g343)" stroke-width="2.0"/>
<path d="M627.36 586.59L642.11 595.00L655.26 582.55Z" fill="url(#g344)" stroke="url(#g344)" stroke-width="2.0"/>
<path d="M627.36 586.59L617.02 597.04L642.11 595.00Z" fill="url(#g345)" stroke="url(#g345)" stroke-width="2.0"/>
<path d="M617.02 597.04L628.96 607.45L642.11 595.00Z" fill="url(#g346)" stroke="url(#g346)" stroke-width="2.0"/>
<path d="M617.02 597.04L606.68 607.48L628.96 607.45Z" fill="url(#g347)" stroke="url(#g347)" stroke-width="2.0"/>
<path d="M606.68 607.48L615.96 620.06L628.96 607.45Z" fill="url(#g348)" stroke="url(#g348)" stroke-width="2.0"/>
<path d="M606.68 607.48L596.19 617.78L615.96 620.06Z" fill="url(#g349)" stroke="url(#g349)" stroke-width="2.0"/>
<path d="M596.19 617.78L603.03 632.74L615.96 620.06Z" fill="url(#g350)" stroke="url(#g350)" stroke-width="2.0"/>
<path d="M596.19 617.78L585.63 628.00L603.03 632.74Z" fill="url(#g351)" stroke="url(#g351)" stroke-width="2.0"/>
<path d="M585.63 628.00L589.73 645.00L603.03 632.74Z" fill="url(#g352)" stroke="url(#g352)" stroke-width="2.0"/>
<path d="M676.00 535.01L675.63 552.67L695.00 530.95Z" fill="url(#g353)" stroke="url(#g353)" stroke-width="2.0"/>
<path d="M675.63 552.67L700.05 551.55L695.00 530.95Z" fill="url(#g354)" stroke="url(#g354)" stroke-width="2.0"/>
<path d="M675.63 552.67L665.66 567.79L700.05 551.55Z" fill="url(#g355)" stroke="url(#g355)" stroke-width="2.0"/>
<path d="M665.66 567.79L687.86 569.40L700.05 551.55Z" fill="url(#g356)" stroke="url(#g356)" stroke-width="2.0"/>
<path d="M665.66 567.79L655.26 582.55L687.86 569.40Z" fill="url(#g357)" stroke="url(#g357)" stroke-width="2.0"/>
<path d="M655.26 582.55L673.87 585.54L687.86 569.40Z" fill="url(#g358)" stroke="url(#g358)" stroke-width="2.0"/>
<path d="M655.26 582.55L642.11 595.00L673.87 585.54Z" fill="url(#g359)" stroke="url(#g359)" stroke-width="2.0"/>
<path d="M642.11 595.00L656.64 598.59L673.87 585.54Z" fill="url(#g360)" stroke="url(#g360)" stroke-width="2.0"/>
<path d="M642.11 595.00L628.96 607.45L656.64 598.59Z" fill="url(#g361)" stroke="url(#g361)" stroke-width="2.0"/>
<path d="M628.96 607.45L639.54 611.77L656.64 598.59Z" fill="url(#g362)" stroke="url(#g362)" stroke-width="2.0"/>
<path d="M628.96 607.45L615.96 620.06L639.54 611.77Z" fill="url(#g363)" stroke="url(#g363)" stroke-width="2.0"/>
<path d="M615.96 620.06L625.81 628.46L639.54 611.77Z" fill="url(#g364)" stroke="url(#g364)" stroke-width="2.0"/>
<path d="M615.96 620.06L603.03 632.74L625.81 628.46Z" fill="url(#g365)" stroke="url(#g365)" stroke-width="2.0"/>
<path d="M603.03 632.74L610.95 643.78L625.81 628.46Z" fill="url(#g366)" stroke="url(#g366)" stroke-width="2.0"/>
<path d="M603.03 632.74L589.73 645.00L610.95 643.78Z" fill="url(#g367)" stroke="url(#g367)" stroke-width="2.0"/>
<path d="M589.73 645.00L591.91 654.00L610.95 643.78Z" fill="url(#g368)" stroke="url(#g368)" stroke-width="2.0"/>
<path d="M695.00 530.95L700.05 551.55L741.00 521.14Z" fill="url(#g369)" stroke="url(#g369)" stroke-width="2.0"/>
<path d="M700.05 551.55L733.93 547.16L741.00 521.14Z" fill="url(#g370)" stroke="url(#g370)" stroke-width="2.0"/>
<path d="M700.05 551.55L687.86 569.40L733.93 547.16Z" fill="url(#g371)" stroke="url(#g371)" stroke-width="2.0"/>
<path d="M687.86 569.40L715.94 566.61L733.93 547.16Z" fill="url(#g372)" stroke="url(#g372)" stroke-width="2.0"/>
<path d="M687.86 569.40L673.87 585.54L715.94 566.61Z" fill="url(#g373)" stroke="url(#g373)" stroke-width="2.0"/>
<path d="M673.87 585.54L696.19 584.96L715.94 566.61Z" fill="url(#g374)" stroke="url(#g374)" stroke-width="2.0"/>
<path d="M673.87 585.54L656.64 598.59L696.19 584.96Z" fill="url(#g375)" stroke="url(#g375)" stroke-width="2.0"/>
<path d="M656.64 598.59L676.14 602.98L696.19 584.96Z" fill="url(#g376)" stroke="url(#g376)" stroke-width="2.0"/>
<path d="M656.64 598.59L639.54 611.77L676.14 602.98Z" fill="url(#g377)" stroke="url(#g377)" stroke-width="2.0"/>
<path d="M639.54 611.77L657.26 622.17L676.14 602.98Z" fill="url(#g378)" stroke="url(#g378)" stroke-width="2.0"/>
<path d="M639.54 611.77L625.81 628.46L657.26 622.17Z" fill="url(#g379)" stroke="url(#g379)" stroke-width="2.0"/>
<path d="M625.81 628.46L639.24 642.21L657.26 622.17Z" fill="url(#g380)" stroke="url(#g380)" stroke-width="2.0"/>
<path d="M625.81 628.46L610.95 643.78L639.24 642.21Z" fill="url(#g381)" stroke="url(#g381)" stroke-width="2.0"/>
<path d="M610.95 643.78L618.23 659.10L639.24 642.21Z" fill="url(#g382)" stroke="url(#g382)" stroke-width="2.0"/>
<path d="M610.95 643.78L591.91 654.00L618.23 659.10Z" fill="url(#g383)" stroke="url(#g383)" stroke-width="2.0"/>
<path d="M591.91 654.00L597.22 676.00L618.23 659.10Z" fill="url(#g384)" stroke="url(#g384)" stroke-width="2.0"/>
<path d="M741.00 521.14L733.93 547.16L785.00 511.75Z" fill="url(#g385)" stroke="url(#g385)" stroke-width="2.0"/>
<path d="M733.93 547.16L774.54 543.00L785.00 511.75Z" fill="url(#g386)" stroke="url(#g386)" stroke-width="2.0"/>
<path d="M733.93 547.16L715.94 566.61L774.54 543.00Z" fill="url(#g387)" stroke="url(#g387)" stroke-width="2.0"/>
<path d="M715.94 566.61L755.42 569.21L774.54 543.00Z" fill="url(#g388)" stroke="url(#g388)" stroke-width="2.0"/>
<path d="M715.94 566.61L696.19 584.96L755.42 569.21Z" fill="url(#g389)" stroke="url(#g389)" stroke-width="2.0"/>
<path d="M696.19 584.96L732.09 592.40L755.42 569.21Z" fill="url(#g390)" stroke="url(#g390)" stroke-width="2.0"/>
<path d="M696.19 584.96L676.14 602.98L732.09 592.40Z" fill="url(#g391)" stroke="url(#g391)" stroke-width="2.0"/>
<path d="M676.14 602.98L707.55 614.38L732.09 592.40Z" fill="url(#g392)" stroke="url(#g392)" stroke-width="2.0"/>
<path d="M676.14 602.98L657.26 622.17L707.55 614.38Z" fill="url(#g393)" stroke="url(#g393)" stroke-width="2.0"/>
<path d="M657.26 622.17L683.31 636.71L707.55 614.38Z" fill="url(#g394)" stroke="url(#g394)" stroke-width="2.0"/>
<path d="M657.26 622.17L639.24 642.21L683.31 636.71Z" fill="url(#g395)" stroke="url(#g395)" stroke-width="2.0"/>
<path d="M639.24 642.21L656.34 655.47L683.31 636.71Z" fill="url(#g396)" stroke="url(#g396)" stroke-width="2.0"/>
<path d="M639.24 642.21L618.23 659.10L656.34 655.47Z" fill="url(#g397)" stroke="url(#g397)" stroke-width="2.0"/>
<path d="M618.23 659.10L628.59 673.23L656.34 655.47Z" fill="url(#g398)" stroke="url(#g398)" stroke-width="2.0"/>
<path d="M618.23 659.10L597.22 676.00L628.59 673.23Z" fill="url(#g399)" stroke="url(#g399)" stroke-width="2.0"/>
<path d="M597.22 676.00L600.84 691.00L628.59 673.23Z" fill="url(#g400)" stroke="url(#g400)" stroke-width="2.0"/>
<path d="M785.00 511.75L774.54 543.00L828.00 502.58Z" fill="url(#g401)" stroke="url(#g401)" stroke-width="2.0"/>
<path d="M774.54 543.00L826.33 542.63L828.00 502.58Z" fill="url(#g402)" stroke="url(#g402)" stroke-width="2.0"/>
<path d="M774.54 543.00L755.42 569.21L826.33 542.63Z" fill="url(#g403)" stroke="url(#g403)" stroke-width="2.0"/>
<path d="M755.42 569.21L806.06 575.78L826.33 542.63Z" fill="url(#g404)" stroke="url(#g404)" stroke-width="2.0"/>
<path d="M755.42 569.21L732.09 592.40L806.06 575.78Z" fill="url(#g405)" stroke="url(#g405)" stroke-width="2.0"/>
<path d="M732.09 592.40L776.04 602.16L806.06 575.78Z" fill="url(#g406)" stroke="url(#g406)" stroke-width="2.0"/>
<path d="M732.09 592.40L707.55 614.38L776.04 602.16Z" fill="url(#g407)" stroke="url(#g407)" stroke-width="2.0"/>
<path d="M707.55 614.38L744.26 626.58L776.04 602.16Z" fill="url(#g408)" stroke="url(#g408)" stroke-width="2.0"/>
<path d="M707.55 614.38L683.31 636.71L744.26 626.58Z" fill="url(#g409)" stroke="url(#g409)" stroke-width="2.0"/>
<path d="M683.31 636.71L710.78 648.41L744.26 626.58Z" fill="url(#g410)" stroke="url(#g410)" stroke-width="2.0"/>
<path d="M683.31 636.71L656.34 655.47L710.78 648.41Z" fill="url(#g411)" stroke="url(#g411)" stroke-width="2.0"/>
<path d="M656.34 655.47L675.14 666.78L710.78 648.41Z" fill="url(#g412)" stroke="url(#g412)" stroke-width="2.0"/>
<path d="M656.34 655.47L628.59 673.23L675.14 666.78Z" fill="url(#g413)" stroke="url(#g413)" stroke-width="2.0"/>
<path d="M628.59 673.23L639.50 685.14L675.14 666.78Z" fill="url(#g414)" stroke="url(#g414)" stroke-width="2.0"/>
<path d="M628.59 673.23L600.84 691.00L639.50 685.14Z" fill="url(#g415)" stroke="url(#g415)" stroke-width="2.0"/>
<path d="M600.84 691.00L603.86 703.50L639.50 685.14Z" fill="url(#g416)" stroke="url(#g416)" stroke-width="2.0"/>
<path d="M828.00 502.58L826.33 542.63L865.00 494.68Z" fill="url(#g417)" stroke="url(#g417)" stroke-width="2.0"/>
<path d="M826.33 542.63L860.97 539.73L865.00 494.68Z" fill="url(#g418)" stroke="url(#g418)" stroke-width="2.0"/>
<path d="M826.33 542.63L806.06 575.78L860.97 539.73Z" fill="url(#g419)" stroke="url(#g419)" stroke-width="2.0"/>
<path d="M806.06 575.78L837.18 576.21L860.97 539.73Z" fill="url(#g420)" stroke="url(#g420)" stroke-width="2.0"/>
<path d="M806.06 575.78L776.04 602.16L837.18 576.21Z" fill="url(#g421)" stroke="url(#g421)" stroke-width="2.0"/>
<path d="M776.04 602.16L806.57 609.50L837.18 576.21Z" fill="url(#g422)" stroke="url(#g422)" stroke-width="2.0"/>
<path d="M776.04 602.16L744.26 626.58L806.57 609.50Z" fill="url(#g423)" stroke="url(#g423)" stroke-width="2.0"/>
<path d="M744.26 626.58L769.70 635.59L806.57 609.50Z" fill="url(#g424)" stroke="url(#g424)" stroke-width="2.0"/>
<path d="M744.26 626.58L710.78 648.41L769.70 635.59Z" fill="url(#g425)" stroke="url(#g425)" stroke-width="2.0"/>
<path d="M710.78 648.41L729.45 655.92L769.70 635.59Z" fill="url(#g426)" stroke="url(#g426)" stroke-width="2.0"/>
<path d="M710.78 648.41L675.14 666.78L729.45 655.92Z" fill="url(#g427)" stroke="url(#g427)" stroke-width="2.0"/>
<path d="M675.14 666.78L688.27 674.62L729.45 655.92Z" fill="url(#g428)" stroke="url(#g428)" stroke-width="2.0"/>
<path d="M675.14 666.78L639.50 685.14L688.27 674.62Z" fill="url(#g429)" stroke="url(#g429)" stroke-width="2.0"/>
<path d="M639.50 685.14L647.09 693.31L688.27 674.62Z" fill="url(#g430)" stroke="url(#g430)" stroke-width="2.0"/>
<path d="M639.50 685.14L603.86 703.50L647.09 693.31Z" fill="url(#g431)" stroke="url(#g431)" stroke-width="2.0"/>
<path d="M603.86 703.50L605.91 712.00L647.09 693.31Z" fill="url(#g432)" stroke="url(#g432)" stroke-width="2.0"/>
<path d="M865.00 494.68L860.97 539.73L895.00 488.28Z" fill="url(#g433)" stroke="url(#g433)" stroke-width="2.0"/>
<path d="M860.97 539.73L889.46 537.61L895.00 488.28Z" fill="url(#g434)" stroke="url(#g434)" stroke-width="2.0"/>
<path d="M860.97 539.73L837.18 576.21L889.46 537.61Z" fill="url(#g435)" stroke="url(#g435)" stroke-width="2.0"/>
<path d="M837.18 576.21L862.28 576.58L889.46 537.61Z" fill="url(#g436)" stroke="url(#g436)" stroke-width="2.0"/>
<path d="M837.18 576.21L806.57 609.50L862.28 576.58Z" fill="url(#g437)" stroke="url(#g437)" stroke-width="2.0"/>
<path d="M806.57 609.50L824.68 608.95L862.28 576.58Z" fill="url(#g438)" stroke="url(#g438)" stroke-width="2.0"/>
<path d="M806.57 609.50L769.70 635.59L824.68 608.95Z" fill="url(#g439)" stroke="url(#g439)" stroke-width="2.0"/>
<path d="M769.70 635.59L785.27 639.12L824.68 608.95Z" fill="url(#g440)" stroke="url(#g440)" stroke-width="2.0"/>
<path d="M769.70 635.59L729.45 655.92L785.27 639.12Z" fill="url(#g441)" stroke="url(#g441)" stroke-width="2.0"/>
<path d="M729.45 655.92L742.07 663.47L785.27 639.12Z" fill="url(#g442)" stroke="url(#g442)" stroke-width="2.0"/>
<path d="M729.45 655.92L688.27 674.62L742.07 663.47Z" fill="url(#g443)" stroke="url(#g443)" stroke-width="2.0"/>
<path d="M688.27 674.62L698.53 687.31L742.07 663.47Z" fill="url(#g444)" stroke="url(#g444)" stroke-width="2.0"/>
<path d="M688.27 674.62L647.09 693.31L698.53 687.31Z" fill="url(#g445)" stroke="url(#g445)" stroke-width="2.0"/>
<path d="M647.09 693.31L655.00 711.16L698.53 687.31Z" fill="url(#g446)" stroke="url(#g446)" stroke-width="2.0"/>
<path d="M647.09 693.31L605.91 712.00L655.00 711.16Z" fill="url(#g447)" stroke="url(#g447)" stroke-width="2.0"/>
<path d="M605.91 712.00L611.47 735.00L655.00 711.16Z" fill="url(#g448)" stroke="url(#g448)" stroke-width="2.0"/>
<path d="M1166.30 430.40L1145.74 439.91L1145.00 434.94Z" fill="url(#g449)" stroke="url(#g449)" stroke-width="2.0"/>
<path d="M1166.30 430.40L1146.49 444.88L1145.74 439.91Z" fill="url(#g450)" stroke="url(#g450)" stroke-width="2.0"/>
<path d="M1166.30 430.40L1147.23 449.85L1146.49 444.88Z" fill="url(#g451)" stroke="url(#g451)" stroke-width="2.0"/>
<path d="M1166.30 430.40L1147.97 454.82L1147.23 449.85Z" fill="url(#g452)" stroke="url(#g452)" stroke-width="2.0"/>
<path d="M1166.30 430.40L1151.66 458.16L1147.97 454.82Z" fill="url(#g453)" stroke="url(#g453)" stroke-width="2.0"/>
<path d="M1166.30 430.40L1155.47 461.44L1151.66 458.16Z" fill="url(#g454)" stroke="url(#g454)" stroke-width="2.0"/>
<path d="M1166.30 430.40L1159.27 464.72L1155.47 461.44Z" fill="url(#g455)" stroke="url(#g455)" stroke-width="2.0"/>
<path d="M1166.30 430.40L1163.07 468.00L1159.27 464.72Z" fill="url(#g456)" stroke="url(#g456)" stroke-width="2.0"/>
<path d="M1145.00 434.94L1145.74 439.91L1128.00 438.57Z" fill="url(#g457)" stroke="url(#g457)" stroke-width="2.0"/>
<path d="M1145.74 439.91L1129.01 446.53L1128.00 438.57Z" fill="url(#g458)" stroke="url(#g458)" stroke-width="2.0"/>
<path d="M1145.74 439.91L1146.49 444.88L1129.01 446.53Z" fill="url(#g459)" stroke="url(#g459)" stroke-width="2.0"/>
<path d="M1146.49 444.88L1130.03 454.49L1129.01 446.53Z" fill="url(#g460)" stroke="url(#g460)" stroke-width="2.0"/>
<path d="M1146.49 444.88L1147.23 449.85L1130.03 454.49Z" fill="url(#g461)" stroke="url(#g461)" stroke-width="2.0"/>
<path d="M1147.23 449.85L1131.04 462.45L1130.03 454.49Z" fill="url(#g462)" stroke="url(#g462)" stroke-width="2.0"/>
<path d="M1147.23 449.85L1147.97 454.82L1131.04 462.45Z" fill="url(#g463)" stroke="url(#g463)" stroke-width="2.0"/>
<path d="M1147.97 454.82L1132.37 470.16L1131.04 462.45Z" fill="url(#g464)" stroke="url(#g464)" stroke-width="2.0"/>
<path d="M1147.97 454.82L1151.66 458.16L1132.37 470.16Z" fill="url(#g465)" stroke="url(#g465)" stroke-width="2.0"/>
<path d="M1151.66 458.16L1139.73 473.37L1132.37 470.16Z" fill="url(#g466)" stroke="url(#g466)" stroke-width="2.0"/>
<path d="M1151.66 458.16L1155.47 461.44L1139.73 473.37Z" fill="url(#g467)" stroke="url(#g467)" stroke-width="2.0"/>
<path d="M1155.47 461.44L1147.08 476.58L1139.73 473.37Z" fill="url(#g468)" stroke="url(#g468)" stroke-width="2.0"/>
<path d="M1155.47 461.44L1159.27 464.72L1147.08 476.58Z" fill="url(#g469)" stroke="url(#g469)" stroke-width="2.0"/>
<path d="M1159.27 464.72L1154.43 479.79L1147.08 476.58Z" fill="url(#g470)" stroke="url(#g470)" stroke-width="2.0"/>
<path d="M1159.27 464.72L1163.07 468.00L1154.43 479.79Z" fill="url(#g471)" stroke="url(#g471)" stroke-width="2.0"/>
<path d="M1163.07 468.00L1161.79 483.00L1154.43 479.79Z" fill="url(#g472)" stroke="url(#g472)" stroke-width="2.0"/>
<path d="M1128.00 438.57L1129.01 446.53L1105.00 443.48Z" fill="url(#g473)" stroke="url(#g473)" stroke-width="2.0"/>
<path d="M1129.01 446.53L1106.07 454.73L1105.00 443.48Z" fill="url(#g474)" stroke="url(#g474)" stroke-width="2.0"/>
<path d="M1129.01 446.53L1130.03 454.49L1106.07 454.73Z" fill="url(#g475)" stroke="url(#g475)" stroke-width="2.0"/>
<path d="M1130.03 454.49L1107.14 465.98L1106.07 454.73Z" fill="url(#g476)" stroke="url(#g476)" stroke-width="2.0"/>
<path d="M1130.03 454.49L1131.04 462.45L1107.14 465.98Z" fill="url(#g477)" stroke="url(#g477)" stroke-width="2.0"/>
<path d="M1131.04 462.45L1109.98 476.03L1107.14 465.98Z" fill="url(#g478)" stroke="url(#g478)" stroke-width="2.0"/>
<path d="M1131.04 462.45L1132.37 470.16L1109.98 476.03Z" fill="url(#g479)" stroke="url(#g479)" stroke-width="2.0"/>
<path d="M1132.37 470.16L1120.02 481.22L1109.98 476.03Z" fill="url(#g480)" stroke="url(#g480)" stroke-width="2.0"/>
<path d="M1132.37 470.16L1139.73 473.37L1120.02 481.22Z" fill="url(#g481)" stroke="url(#g481)" stroke-width="2.0"/>
<path d="M1139.73 473.37L1130.05 486.42L1120.02 481.22Z" fill="url(#g482)" stroke="url(#g482)" stroke-width="2.0"/>
<path d="M1139.73 473.37L1147.08 476.58L1130.05 486.42Z" fill="url(#g483)" stroke="url(#g483)" stroke-width="2.0"/>
<path d="M1147.08 476.58L1140.09 491.61L1130.05 486.42Z" fill="url(#g484)" stroke="url(#g484)" stroke-width="2.0"/>
<path d="M1147.08 476.58L1154.43 479.79L1140.09 491.61Z" fill="url(#g485)" stroke="url(#g485)" stroke-width="2.0"/>
<path d="M1154.43 479.79L1150.12 496.81L1140.09 491.61Z" fill="url(#g486)" stroke="url(#g486)" stroke-width="2.0"/>
<path d="M1154.43 479.79L1161.79 483.00L1150.12 496.81Z" fill="url(#g487)" stroke="url(#g487)" stroke-width="2.0"/>
<path d="M1161.79 483.00L1160.16 502.00L1150.12 496.81Z" fill="url(#g488)" stroke="url(#g488)" stroke-width="2.0"/>
<path d="M1105.00 443.48L1106.07 454.73L1075.00 449.88Z" fill="url(#g489)" stroke="url(#g489)" stroke-width="2.0"/>
<path d="M1106.07 454.73L1076.61 464.94L1075.00 449.88Z" fill="url(#g490)" stroke="url(#g490)" stroke-width="2.0"/>
<path d="M1106.07 454.73L1107.14 465.98L1076.61 464.94Z" fill="url(#g491)" stroke="url(#g491)" stroke-width="2.0"/>
<path d="M1107.14 465.98L1079.63 479.18L1076.61 464.94Z" fill="url(#g492)" stroke="url(#g492)" stroke-width="2.0"/>
<path d="M1107.14 465.98L1109.98 476.03L1079.63 479.18Z" fill="url(#g493)" stroke="url(#g493)" stroke-width="2.0"/>
<path d="M1109.98 476.03L1091.91 488.06L1079.63 479.18Z" fill="url(#g494)" stroke="url(#g494)" stroke-width="2.0"/>
<path d="M1109.98 476.03L1120.02 481.22L1091.91 488.06Z" fill="url(#g495)" stroke="url(#g495)" stroke-width="2.0"/>
<path d="M1120.02 481.22L1104.18 496.94L1091.91 488.06Z" fill="url(#g496)" stroke="url(#g496)" stroke-width="2.0"/>
<path d="M1120.02 481.22L1130.05 486.42L1104.18 496.94Z" fill="url(#g497)" stroke="url(#g497)" stroke-width="2.0"/>
<path d="M1130.05 486.42L1116.46 505.82L1104.18 496.94Z" fill="url(#g498)" stroke="url(#g498)" stroke-width="2.0"/>
<path d="M1130.05 486.42L1140.09 491.61L1116.46 505.82Z" fill="url(#g499)" stroke="url(#g499)" stroke-width="2.0"/>
<path d="M1140.09 491.61L1129.41 513.32L1116.46 505.82Z" fill="url(#g500)" stroke="url(#g500)" stroke-width="2.0"/>
<path d="M1140.09 491.61L1150.12 496.81L1129.41 513.32Z" fill="url(#g501)" stroke="url(#g501)" stroke-width="2.0"/>
<path d="M1150.12 496.81L1143.92 517.66L1129.41 513.32Z" fill="url(#g502)" stroke="url(#g502)" stroke-width="2.0"/>
<path d="M1150.12 496.81L1160.16 502.00L1143.92 517.66Z" fill="url(#g503)" stroke="url(#g503)" stroke-width="2.0"/>
<path d="M1160.16 502.00L1158.44 522.00L1143.92 517.66Z" fill="url(#g504)" stroke="url(#g504)" stroke-width="2.0"/>
<path d="M1075.00 449.88L1076.61 464.94L1044.00 456.49Z" fill="url(#g505)" stroke="url(#g505)" stroke-width="2.0"/>
<path d="M1076.61 464.94L1046.29 475.61L1044.00 456.49Z" fill="url(#g506)" stroke="url(#g506)" stroke-width="2.0"/>
<path d="M1076.61 464.94L1079.63 479.18L1046.29 475.61Z" fill="url(#g507)" stroke="url(#g507)" stroke-width="2.0"/>
<path d="M1079.63 479.18L1057.82 489.27L1046.29 475.61Z" fill="url(#g508)" stroke="url(#g508)" stroke-width="2.0"/>
<path d="M1079.63 479.18L1091.91 488.06L1057.82 489.27Z" fill="url(#g509)" stroke="url(#g509)" stroke-width="2.0"/>
<path d="M1091.91 488.06L1073.45 500.51L1057.82 489.27Z" fill="url(#g510)" stroke="url(#g510)" stroke-width="2.0"/>
<path d="M1091.91 488.06L1104.18 496.94L1073.45 500.51Z" fill="url(#g511)" stroke="url(#g511)" stroke-width="2.0"/>
<path d="M1104.18 496.94L1089.09 511.74L1073.45 500.51Z" fill="url(#g512)" stroke="url(#g512)" stroke-width="2.0"/>
<path d="M1104.18 496.94L1116.46 505.82L1089.09 511.74Z" fill="url(#g513)" stroke="url(#g513)" stroke-width="2.0"/>
<path d="M1116.46 505.82L1105.15 522.36L1089.09 511.74Z" fill="url(#g514)" stroke="url(#g514)" stroke-width="2.0"/>
<path d="M1116.46 505.82L1129.41 513.32L1105.15 522.36Z" fill="url(#g515)" stroke="url(#g515)" stroke-width="2.0"/>
<path d="M1129.41 513.32L1121.23 532.94L1105.15 522.36Z" fill="url(#g516)" stroke="url(#g516)" stroke-width="2.0"/>
<path d="M1129.41 513.32L1143.92 517.66L1121.23 532.94Z" fill="url(#g517)" stroke="url(#g517)" stroke-width="2.0"/>
<path d="M1143.92 517.66L1137.39 543.29L1121.23 532.94Z" fill="url(#g518)" stroke="url(#g518)" stroke-width="2.0"/>
<path d="M1143.92 517.66L1158.44 522.00L1137.39 543.29Z" fill="url(#g519)" stroke="url(#g519)" stroke-width="2.0"/>
<path d="M1158.44 522.00L1156.64 543.00L1137.39 543.29Z" fill="url(#g520)" stroke="url(#g520)" stroke-width="2.0"/>
<path d="M1044.00 456.49L1046.29 475.61L1015.00 462.68Z" fill="url(#g521)" stroke="url(#g521)" stroke-width="2.0"/>
<path d="M1046.29 475.61L1017.91 484.07L1015.00 462.68Z" fill="url(#g522)" stroke="url(#g522)" stroke-width="2.0"/>
<path d="M1046.29 475.61L1057.82 489.27L1017.91 484.07Z" fill="url(#g523)" stroke="url(#g523)" stroke-width="2.0"/>
<path d="M1057.82 489.27L1034.93 499.10L1017.91 484.07Z" fill="url(#g524)" stroke="url(#g524)" stroke-width="2.0"/>
<path d="M1057.82 489.27L1073.45 500.51L1034.93 499.10Z" fill="url(#g525)" stroke="url(#g525)" stroke-width="2.0"/>
<path d="M1073.45 500.51L1052.15 513.88L1034.93 499.10Z" fill="url(#g526)" stroke="url(#g526)" stroke-width="2.0"/>
<path d="M1073.45 500.51L1089.09 511.74L1052.15 513.88Z" fill="url(#g527)" stroke="url(#g527)" stroke-width="2.0"/>
<path d="M1089.09 511.74L1070.87 526.73L1052.15 513.88Z" fill="url(#g528)" stroke="url(#g528)" stroke-width="2.0"/>
<path d="M1089.09 511.74L1105.15 522.36L1070.87 526.73Z" fill="url(#g529)" stroke="url(#g529)" stroke-width="2.0"/>
<path d="M1105.15 522.36L1089.58 539.58L1070.87 526.73Z" fill="url(#g530)" stroke="url(#g530)" stroke-width="2.0"/>
<path d="M1105.15 522.36L1121.23 532.94L1089.58 539.58Z" fill="url(#g531)" stroke="url(#g531)" stroke-width="2.0"/>
<path d="M1121.23 532.94L1110.93 545.84L1089.58 539.58Z" fill="url(#g532)" stroke="url(#g532)" stroke-width="2.0"/>
<path d="M1121.23 532.94L1137.39 543.29L1110.93 545.84Z" fill="url(#g533)" stroke="url(#g533)" stroke-width="2.0"/>
<path d="M1137.39 543.29L1133.36 549.42L1110.93 545.84Z" fill="url(#g534)" stroke="url(#g534)" stroke-width="2.0"/>
<path d="M1137.39 543.29L1156.64 543.00L1133.36 549.42Z" fill="url(#g535)" stroke="url(#g535)" stroke-width="2.0"/>
<path d="M1156.64 543.00L1155.78 553.00L1133.36 549.42Z" fill="url(#g536)" stroke="url(#g536)" stroke-width="2.0"/>
<path d="M1015.00 462.68L1017.91 484.07L985.00 469.08Z" fill="url(#g537)" stroke="url(#g537)" stroke-width="2.0"/>
<path d="M1017.91 484.07L990.65 492.78L985.00 469.08Z" fill="url(#g538)" stroke="url(#g538)" stroke-width="2.0"/>
<path d="M1017.91 484.07L1034.93 499.10L990.65 492.78Z" fill="url(#g539)" stroke="url(#g539)" stroke-width="2.0"/>
<path d="M1034.93 499.10L1006.84 513.86L990.65 492.78Z" fill="url(#g540)" stroke="url(#g540)" stroke-width="2.0"/>
<path d="M1034.93 499.10L1052.15 513.88L1006.84 513.86Z" fill="url(#g541)" stroke="url(#g541)" stroke-width="2.0"/>
<path d="M1052.15 513.88L1027.74 530.42L1006.84 513.86Z" fill="url(#g542)" stroke="url(#g542)" stroke-width="2.0"/>
<path d="M1052.15 513.88L1070.87 526.73L1027.74 530.42Z" fill="url(#g543)" stroke="url(#g543)" stroke-width="2.0"/>
<path d="M1070.87 526.73L1049.84 544.28L1027.74 530.42Z" fill="url(#g544)" stroke="url(#g544)" stroke-width="2.0"/>
<path d="M1070.87 526.73L1089.58 539.58L1049.84 544.28Z" fill="url(#g545)" stroke="url(#g545)" stroke-width="2.0"/>
<path d="M1089.58 539.58L1076.13 548.71L1049.84 544.28Z" fill="url(#g546)" stroke="url(#g546)" stroke-width="2.0"/>
<path d="M1089.58 539.58L1110.93 545.84L1076.13 548.71Z" fill="url(#g547)" stroke="url(#g547)" stroke-width="2.0"/>
<path d="M1110.93 545.84L1102.42 553.14L1076.13 548.71Z" fill="url(#g548)" stroke="url(#g548)" stroke-width="2.0"/>
<path d="M1110.93 545.84L1133.36 549.42L1102.42 553.14Z" fill="url(#g549)" stroke="url(#g549)" stroke-width="2.0"/>
<path d="M1133.36 549.42L1128.71 557.57L1102.42 553.14Z" fill="url(#g550)" stroke="url(#g550)" stroke-width="2.0"/>
<path d="M1133.36 549.42L1155.78 553.00L1128.71 557.57Z" fill="url(#g551)" stroke="url(#g551)" stroke-width="2.0"/>
<path d="M1155.78 553.00L1155.01 562.00L1128.71 557.57Z" fill="url(#g552)" stroke="url(#g552)" stroke-width="2.0"/>
<path d="M985.00 469.08L990.65 492.78L945.00 477.62Z" fill="url(#g553)" stroke="url(#g553)" stroke-width="2.0"/>
<path d="M990.65 492.78L955.44 502.95L945.00 477.62Z" fill="url(#g554)" stroke="url(#g554)" stroke-width="2.0"/>
<path d="M990.65 492.78L1006.84 513.86L955.44 502.95Z" fill="url(#g555)" stroke="url(#g555)" stroke-width="2.0"/>
<path d="M1006.84 513.86L976.46 526.05L955.44 502.95Z" fill="url(#g556)" stroke="url(#g556)" stroke-width="2.0"/>
<path d="M1006.84 513.86L1027.74 530.42L976.46 526.05Z" fill="url(#g557)" stroke="url(#g557)" stroke-width="2.0"/>
<path d="M1027.74 530.42L1000.86 545.02L976.46 526.05Z" fill="url(#g558)" stroke="url(#g558)" stroke-width="2.0"/>
<path d="M1027.74 530.42L1049.84 544.28L1000.86 545.02Z" fill="url(#g559)" stroke="url(#g559)" stroke-width="2.0"/>
<path d="M1049.84 544.28L1031.01 553.90L1000.86 545.02Z" fill="url(#g560)" stroke="url(#g560)" stroke-width="2.0"/>
<path d="M1049.84 544.28L1076.13 548.71L1031.01 553.90Z" fill="url(#g561)" stroke="url(#g561)" stroke-width="2.0"/>
<path d="M1076.13 548.71L1061.15 562.77L1031.01 553.90Z" fill="url(#g562)" stroke="url(#g562)" stroke-width="2.0"/>
<path d="M1076.13 548.71L1102.42 553.14L1061.15 562.77Z" fill="url(#g563)" stroke="url(#g563)" stroke-width="2.0"/>
<path d="M1102.42 553.14L1091.30 571.64L1061.15 562.77Z" fill="url(#g564)" stroke="url(#g564)" stroke-width="2.0"/>
<path d="M1102.42 553.14L1128.71 557.57L1091.30 571.64Z" fill="url(#g565)" stroke="url(#g565)" stroke-width="2.0"/>
<path d="M1128.71 557.57L1122.33 575.36L1091.30 571.64Z" fill="url(#g566)" stroke="url(#g566)" stroke-width="2.0"/>
<path d="M1128.71 557.57L1155.01 562.00L1122.33 575.36Z" fill="url(#g567)" stroke="url(#g567)" stroke-width="2.0"/>
<path d="M1155.01 562.00L1153.72 577.00L1122.33 575.36Z" fill="url(#g568)" stroke="url(#g568)" stroke-width="2.0"/>
<path d="M945.00 477.62L955.44 502.95L915.00 484.02Z" fill="url(#g569)" stroke="url(#g569)" stroke-width="2.0"/>
<path d="M955.44 502.95L927.83 508.68L915.00 484.02Z" fill="url(#g570)" stroke="url(#g570)" stroke-width="2.0"/>
<path d="M955.44 502.95L976.46 526.05L927.83 508.68Z" fill="url(#g571)" stroke="url(#g571)" stroke-width="2.0"/>
<path d="M976.46 526.05L949.54 536.55L927.83 508.68Z" fill="url(#g572)" stroke="url(#g572)" stroke-width="2.0"/>
<path d="M976.46 526.05L1000.86 545.02L949.54 536.55Z" fill="url(#g573)" stroke="url(#g573)" stroke-width="2.0"/>
<path d="M1000.86 545.02L980.37 551.55L949.54 536.55Z" fill="url(#g574)" stroke="url(#g574)" stroke-width="2.0"/>
<path d="M1000.86 545.02L1031.01 553.90L980.37 551.55Z" fill="url(#g575)" stroke="url(#g575)" stroke-width="2.0"/>
<path d="M1031.01 553.90L1014.01 562.49L980.37 551.55Z" fill="url(#g576)" stroke="url(#g576)" stroke-width="2.0"/>
<path d="M1031.01 553.90L1061.15 562.77L1014.01 562.49Z" fill="url(#g577)" stroke="url(#g577)" stroke-width="2.0"/>
<path d="M1061.15 562.77L1047.64 573.43L1014.01 562.49Z" fill="url(#g578)" stroke="url(#g578)" stroke-width="2.0"/>
<path d="M1061.15 562.77L1091.30 571.64L1047.64 573.43Z" fill="url(#g579)" stroke="url(#g579)" stroke-width="2.0"/>
<path d="M1091.30 571.64L1082.67 577.94L1047.64 573.43Z" fill="url(#g580)" stroke="url(#g580)" stroke-width="2.0"/>
<path d="M1091.30 571.64L1122.33 575.36L1082.67 577.94Z" fill="url(#g581)" stroke="url(#g581)" stroke-width="2.0"/>
<path d="M1122.33 575.36L1117.81 581.97L1082.67 577.94Z" fill="url(#g582)" stroke="url(#g582)" stroke-width="2.0"/>
<path d="M1122.33 575.36L1153.72 577.00L1117.81 581.97Z" fill="url(#g583)" stroke="url(#g583)" stroke-width="2.0"/>
<path d="M1153.72 577.00L1152.95 586.00L1117.81 581.97Z" fill="url(#g584)" stroke="url(#g584)" stroke-width="2.0"/>
<path d="M915.00 484.02L927.83 508.68L895.00 488.28Z" fill="url(#g585)" stroke="url(#g585)" stroke-width="2.0"/>
<path d="M927.83 508.68L899.56 511.05L895.00 488.28Z" fill="url(#g586)" stroke="url(#g586)" stroke-width="2.0"/>
<path d="M927.83 508.68L949.54 536.55L899.56 511.05Z" fill="url(#g587)" stroke="url(#g587)" stroke-width="2.0"/>
<path d="M949.54 536.55L923.95 542.00L899.56 511.05Z" fill="url(#g588)" stroke="url(#g588)" stroke-width="2.0"/>
<path d="M949.54 536.55L980.37 551.55L923.95 542.00Z" fill="url(#g589)" stroke="url(#g589)" stroke-width="2.0"/>
<path d="M980.37 551.55L959.96 557.71L923.95 542.00Z" fill="url(#g590)" stroke="url(#g590)" stroke-width="2.0"/>
<path d="M980.37 551.55L1014.01 562.49L959.96 557.71Z" fill="url(#g591)" stroke="url(#g591)" stroke-width="2.0"/>
<path d="M1014.01 562.49L996.48 572.75L959.96 557.71Z" fill="url(#g592)" stroke="url(#g592)" stroke-width="2.0"/>
<path d="M1014.01 562.49L1047.64 573.43L996.48 572.75Z" fill="url(#g593)" stroke="url(#g593)" stroke-width="2.0"/>
<path d="M1047.64 573.43L1035.00 581.14L996.48 572.75Z" fill="url(#g594)" stroke="url(#g594)" stroke-width="2.0"/>
<path d="M1047.64 573.43L1082.67 577.94L1035.00 581.14Z" fill="url(#g595)" stroke="url(#g595)" stroke-width="2.0"/>
<path d="M1082.67 577.94L1073.73 588.82L1035.00 581.14Z" fill="url(#g596)" stroke="url(#g596)" stroke-width="2.0"/>
<path d="M1082.67 577.94L1117.81 581.97L1073.73 588.82Z" fill="url(#g597)" stroke="url(#g597)" stroke-width="2.0"/>
<path d="M1117.81 581.97L1112.47 596.51L1073.73 588.82Z" fill="url(#g598)" stroke="url(#g598)" stroke-width="2.0"/>
<path d="M1117.81 581.97L1152.95 586.00L1112.47 596.51Z" fill="url(#g599)" stroke="url(#g599)" stroke-width="2.0"/>
<path d="M1152.95 586.00L1151.74 600.00L1112.47 596.51Z" fill="url(#g600)" stroke="url(#g600)" stroke-width="2.0"/>
</g>
<g clip-path="url(#c601)">
<path d="M534.83 356.19L574.23 359.41L567.17 567.50Z" fill="url(#g602)" stroke="url(#g602)" stroke-width="2.0"/>
<path d="M574.23 359.41L611.07 540.49L567.17 567.50Z" fill="url(#g603)" stroke="url(#g603)" stroke-width="2.0"/>
</g>
<polygon points="1015.7,273.2 1168.1,432.3 1112.1,421.3 997.3,292.6" fill="#000093"/>
<g clip-path="url(#c604)">
<path d="M537.30 363.03L537.30 385.12L544.30 361.68Z" fill="url(#g605)" stroke="url(#g605)" stroke-width="2.0"/>
<path d="M537.30 385.12L544.30 383.78L544.30 361.68Z" fill="url(#g606)" stroke="url(#g606)" stroke-width="2.0"/>
<path d="M544.30 361.68L544.30 383.78L551.30 360.34Z" fill="url(#g607)" stroke="url(#g607)" stroke-width="2.0"/>
<path d="M544.30 383.78L551.30 382.44L551.30 360.34Z" fill="url(#g608)" stroke="url(#g608)" stroke-width="2.0"/>
<path d="M551.30 360.34L551.30 382.44L558.30 359.00Z" fill="url(#g609)" stroke="url(#g609)" stroke-width="2.0"/>
<path d="M551.30 382.44L558.30 381.10L558.30 359.00Z" fill="url(#g610)" stroke="url(#g610)" stroke-width="2.0"/>
<path d="M558.30 359.00L558.30 381.10L565.30 357.66Z" fill="url(#g611)" stroke="url(#g611)" stroke-width="2.0"/>
<path d="M558.30 381.10L565.30 379.76L565.30 357.66Z" fill="url(#g612)" stroke="url(#g612)" stroke-width="2.0"/>
<path d="M565.30 357.66L565.30 379.76L572.30 356.32Z" fill="url(#g613)" stroke="url(#g613)" stroke-width="2.0"/>
<path d="M565.30 379.76L572.30 378.42L572.30 356.32Z" fill="url(#g614)" stroke="url(#g614)" stroke-width="2.0"/>
<path d="M572.30 356.32L572.30 378.42L579.30 354.98Z" fill="url(#g615)" stroke="url(#g615)" stroke-width="2.0"/>
<path d="M572.30 378.42L579.30 377.08L579.30 354.98Z" fill="url(#g616)" stroke="url(#g616)" stroke-width="2.0"/>
<path d="M579.30 354.98L579.30 377.08L586.30 353.63Z" fill="url(#g617)" stroke="url(#g617)" stroke-width="2.0"/>
<path d="M579.30 377.08L586.30 375.74L586.30 353.63Z" fill="url(#g618)" stroke="url(#g618)" stroke-width="2.0"/>
<path d="M586.30 353.63L586.30 375.74L593.30 352.29Z" fill="url(#g619)" stroke="url(#g619)" stroke-width="2.0"/>
<path d="M586.30 375.74L593.30 374.40L593.30 352.29Z" fill="url(#g620)" stroke="url(#g620)" stroke-width="2.0"/>
<path d="M593.30 352.29L593.30 374.40L600.30 350.95Z" fill="url(#g621)" stroke="url(#g621)" stroke-width="2.0"/>
<path d="M593.30 374.40L600.30 373.06L600.30 350.95Z" fill="url(#g622)" stroke="url(#g622)" stroke-width="2.0"/>
<path d="M600.30 350.95L600.30 373.06L607.30 349.61Z" fill="url(#g623)" stroke="url(#g623)" stroke-width="2.0"/>
<path d="M600.30 373.06L607.30 371.72L607.30 349.61Z" fill="url(#g624)" stroke="url(#g624)" stroke-width="2.0"/>
<path d="M607.30 349.61L607.30 371.72L614.30 348.27Z" fill="url(#g625)" stroke="url(#g625)" stroke-width="2.0"/>
<path d="M607.30 371.72L614.30 370.38L614.30 348.27Z" fill="url(#g626)" stroke="url(#g626)" stroke-width="2.0"/>
<path d="M614.30 348.27L614.30 370.38L621.30 346.92Z" fill="url(#g627)" stroke="url(#g627)" stroke-width="2.0"/>
<path d="M614.30 370.38L621.30 369.04L621.30 346.92Z" fill="url(#g628)" stroke="url(#g628)" stroke-width="2.0"/>
<path d="M621.30 346.92L621.30 369.04L628.30 345.58Z" fill="url(#g629)" stroke="url(#g629)" stroke-width="2.0"/>
<path d="M621.30 369.04L628.30 367.70L628.30 345.58Z" fill="url(#g630)" stroke="url(#g630)" stroke-width="2.0"/>
<path d="M628.30 345.58L628.30 367.70L635.30 344.24Z" fill="url(#g631)" stroke="url(#g631)" stroke-width="2.0"/>
<path d="M628.30 367.70L635.30 366.36L635.30 344.24Z" fill="url(#g632)" stroke="url(#g632)" stroke-width="2.0"/>
<path d="M635.30 344.24L635.30 366.36L642.30 342.90Z" fill="url(#g633)" stroke="url(#g633)" stroke-width="2.0"/>
<path d="M635.30 366.36L642.30 365.02L642.30 342.90Z" fill="url(#g634)" stroke="url(#g634)" stroke-width="2.0"/>
<path d="M642.30 342.90L642.30 365.02L649.30 341.56Z" fill="url(#g635)" stroke="url(#g635)" stroke-width="2.0"/>
<path d="M642.30 365.02L649.30 363.68L649.30 341.56Z" fill="url(#g636)" stroke="url(#g636)" stroke-width="2.0"/>
<path d="M649.30 341.56L649.30 363.68L656.30 340.21Z" fill="url(#g637)" stroke="url(#g637)" stroke-width="2.0"/>
<path d="M649.30 363.68L656.30 362.34L656.30 340.21Z" fill="url(#g638)" stroke="url(#g638)" stroke-width="2.0"/>
<path d="M656.30 340.21L656.30 362.34L663.30 338.87Z" fill="url(#g639)" stroke="url(#g639)" stroke-width="2.0"/>
<path d="M656.30 362.34L663.30 361.00L663.30 338.87Z" fill="url(#g640)" stroke="url(#g640)" stroke-width="2.0"/>
<path d="M663.30 338.87L663.30 361.00L670.30 337.53Z" fill="url(#g641)" stroke="url(#g641)" stroke-width="2.0"/>
<path d="M663.30 361.00L670.30 359.66L670.30 337.53Z" fill="url(#g642)" stroke="url(#g642)" stroke-width="2.0"/>
<path d="M670.30 337.53L670.30 359.66L677.30 336.19Z" fill="url(#g643)" stroke="url(#g643)" stroke-width="2.0"/>
<path d="M670.30 359.66L677.30 358.32L677.30 336.19Z" fill="url(#g644)" stroke="url(#g644)" stroke-width="2.0"/>
<path d="M677.30 336.19L677.30 358.32L684.30 334.85Z" fill="url(#g645)" stroke="url(#g645)" stroke-width="2.0"/>
<path d="M677.30 358.32L684.30 356.98L684.30 334.85Z" fill="url(#g646)" stroke="url(#g646)" stroke-width="2.0"/>
<path d="M684.30 334.85L684.30 356.98L691.30 333.50Z" fill="url(#g647)" stroke="url(#g647)" stroke-width="2.0"/>
<path d="M684.30 356.98L691.30 355.64L691.30 333.50Z" fill="url(#g648)" stroke="url(#g648)" stroke-width="2.0"/>
<path d="M691.30 333.50L691.30 355.64L698.30 332.16Z" fill="url(#g649)" stroke="url(#g649)" stroke-width="2.0"/>
<path d="M691.30 355.64L698.30 354.30L698.30 332.16Z" fill="url(#g650)" stroke="url(#g650)" stroke-width="2.0"/>
<path d="M698.30 332.16L698.30 354.30L705.30 330.82Z" fill="url(#g651)" stroke="url(#g651)" stroke-width="2.0"/>
<path d="M698.30 354.30L705.30 352.96L705.30 330.82Z" fill="url(#g652)" stroke="url(#g652)" stroke-width="2.0"/>
<path d="M705.30 330.82L705.30 352.96L712.30 329.48Z" fill="url(#g653)" stroke="url(#g653)" stroke-width="2.0"/>
<path d="M705.30 352.96L712.30 351.62L712.30 329.48Z" fill="url(#g654)" stroke="url(#g654)" stroke-width="2.0"/>
<path d="M712.30 329.48L712.30 351.62L719.30 328.14Z" fill="url(#g655)" stroke="url(#g655)" stroke-width="2.0"/>
<path d="M712.30 351.62L719.30 350.28L719.30 328.14Z" fill="url(#g656)" stroke="url(#g656)" stroke-width="2.0"/>
<path d="M719.30 328.14L719.30 350.28L726.30 326.79Z" fill="url(#g657)" stroke="url(#g657)" stroke-width="2.0"/>
<path d="M719.30 350.28L726.30 348.94L726.30 326.79Z" fill="url(#g658)" stroke="url(#g658)" stroke-width="2.0"/>
<path d="M726.30 326.79L726.30 348.94L733.30 325.45Z" fill="url(#g659)" stroke="url(#g659)" stroke-width="2.0"/>
<path d="M726.30 348.94L733.30 347.60L733.30 325.45Z" fill="url(#g660)" stroke="url(#g660)" stroke-width="2.0"/>
<path d="M733.30 325.45L733.30 347.60L740.30 324.11Z" fill="url(#g661)" stroke="url(#g661)" stroke-width="2.0"/>
<path d="M733.30 347.60L740.30 346.26L740.30 324.11Z" fill="url(#g662)" stroke="url(#g662)" stroke-width="2.0"/>
<path d="M740.30 324.11L740.30 346.26L747.30 322.77Z" fill="url(#g663)" stroke="url(#g663)" stroke-width="2.0"/>
<path d="M740.30 346.26L747.30 344.92L747.30 322.77Z" fill="url(#g664)" stroke="url(#g664)" stroke-width="2.0"/>
<path d="M747.30 322.77L747.30 344.92L754.30 321.43Z" fill="url(#g665)" stroke="url(#g665)" stroke-width="2.0"/>
<path d="M747.30 344.92L754.30 343.58L754.30 321.43Z" fill="url(#g666)" stroke="url(#g666)" stroke-width="2.0"/>
<path d="M754.30 321.43L754.30 343.58L761.30 320.09Z" fill="url(#g667)" stroke="url(#g667)" stroke-width="2.0"/>
<path d="M754.30 343.58L761.30 342.24L761.30 320.09Z" fill="url(#g668)" stroke="url(#g668)" stroke-width="2.0"/>
<path d="M761.30 320.09L761.30 342.24L768.30 318.74Z" fill="url(#g669)" stroke="url(#g669)" stroke-width="2.0"/>
<path d="M761.30 342.24L768.30 340.90L768.30 318.74Z" fill="url(#g670)" stroke="url(#g670)" stroke-width="2.0"/>
<path d="M768.30 318.74L768.30 340.90L775.30 317.40Z" fill="url(#g671)" stroke="url(#g671)" stroke-width="2.0"/>
<path d="M768.30 340.90L775.30 339.56L775.30 317.40Z" fill="url(#g672)" stroke="url(#g672)" stroke-width="2.0"/>
<path d="M775.30 317.40L775.30 339.56L782.30 316.06Z" fill="url(#g673)" stroke="url(#g673)" stroke-width="2.0"/>
<path d="M775.30 339.56L782.30 338.22L782.30 316.06Z" fill="url(#g674)" stroke="url(#g674)" stroke-width="2.0"/>
<path d="M782.30 316.06L782.30 338.22L789.30 314.72Z" fill="url(#g675)" stroke="url(#g675)" stroke-width="2.0"/>
<path d="M782.30 338.22L789.30 336.88L789.30 314.72Z" fill="url(#g676)" stroke="url(#g676)" stroke-width="2.0"/>
<path d="M789.30 314.72L789.30 336.88L796.30 313.38Z" fill="url(#g677)" stroke="url(#g677)" stroke-width="2.0"/>
<path d="M789.30 336.88L796.30 335.54L796.30 313.38Z" fill="url(#g678)" stroke="url(#g678)" stroke-width="2.0"/>
<path d="M796.30 313.38L796.30 335.54L803.30 312.03Z" fill="url(#g679)" stroke="url(#g679)" stroke-width="2.0"/>
<path d="M796.30 335.54L803.30 334.20L803.30 312.03Z" fill="url(#g680)" stroke="url(#g680)" stroke-width="2.0"/>
<path d="M803.30 312.03L803.30 334.20L810.30 310.69Z" fill="url(#g681)" stroke="url(#g681)" stroke-width="2.0"/>
<path d="M803.30 334.20L810.30 332.86L810.30 310.69Z" fill="url(#g682)" stroke="url(#g682)" stroke-width="2.0"/>
<path d="M810.30 310.69L810.30 332.86L817.30 309.35Z" fill="url(#g683)" stroke="url(#g683)" stroke-width="2.0"/>
<path d="M810.30 332.86L817.30 331.52L817.30 309.35Z" fill="url(#g684)" stroke="url(#g684)" stroke-width="2.0"/>
<path d="M817.30 309.35L817.30 331.52L824.30 308.01Z" fill="url(#g685)" stroke="url(#g685)" stroke-width="2.0"/>
<path d="M817.30 331.52L824.30 330.18L824.30 308.01Z" fill="url(#g686)" stroke="url(#g686)" stroke-width="2.0"/>
<path d="M824.30 308.01L824.30 330.18L831.30 306.67Z" fill="url(#g687)" stroke="url(#g687)" stroke-width="2.0"/>
<path d="M824.30 330.18L831.30 328.84L831.30 306.67Z" fill="url(#g688)" stroke="url(#g688)" stroke-width="2.0"/>
<path d="M831.30 306.67L831.30 328.84L838.30 305.32Z" fill="url(#g689)" stroke="url(#g689)" stroke-width="2.0"/>
<path d="M831.30 328.84L838.30 327.50L838.30 305.32Z" fill="url(#g690)" stroke="url(#g690)" stroke-width="2.0"/>
<path d="M838.30 305.32L838.30 327.50L845.30 303.98Z" fill="url(#g691)" stroke="url(#g691)" stroke-width="2.0"/>
<path d="M838.30 327.50L845.30 326.16L845.30 303.98Z" fill="url(#g692)" stroke="url(#g692)" stroke-width="2.0"/>
<path d="M845.30 303.98L845.30 326.16L852.30 302.64Z" fill="url(#g693)" stroke="url(#g693)" stroke-width="2.0"/>
<path d="M845.30 326.16L852.30 324.82L852.30 302.64Z" fill="url(#g694)" stroke="url(#g694)" stroke-width="2.0"/>
<path d="M852.30 302.64L852.30 324.82L859.30 301.30Z" fill="url(#g695)" stroke="url(#g695)" stroke-width="2.0"/>
<path d="M852.30 324.82L859.30 323.48L859.30 301.30Z" fill="url(#g696)" stroke="url(#g696)" stroke-width="2.0"/>
<path d="M859.30 301.30L859.30 323.48L866.30 299.96Z" fill="url(#g697)" stroke="url(#g697)" stroke-width="2.0"/>
<path d="M859.30 323.48L866.30 322.14L866.30 299.96Z" fill="url(#g698)" stroke="url(#g698)" stroke-width="2.0"/>
<path d="M866.30 299.96L866.30 322.14L873.30 298.61Z" fill="url(#g699)" stroke="url(#g699)" stroke-width="2.0"/>
<path d="M866.30 322.14L873.30 320.80L873.30 298.61Z" fill="url(#g700)" stroke="url(#g700)" stroke-width="2.0"/>
<path d="M873.30 298.61L873.30 320.80L880.30 297.27Z" fill="url(#g701)" stroke="url(#g701)" stroke-width="2.0"/>
<path d="M873.30 320.80L880.30 319.46L880.30 297.27Z" fill="url(#g702)" stroke="url(#g702)" stroke-width="2.0"/>
<path d="M880.30 297.27L880.30 319.46L887.30 295.93Z" fill="url(#g703)" stroke="url(#g703)" stroke-width="2.0"/>
<path d="M880.30 319.46L887.30 318.12L887.30 295.93Z" fill="url(#g704)" stroke="url(#g704)" stroke-width="2.0"/>
<path d="M887.30 295.93L887.30 318.12L894.30 294.59Z" fill="url(#g705)" stroke="url(#g705)" stroke-width="2.0"/>
<path d="M887.30 318.12L894.30 316.78L894.30 294.59Z" fill="url(#g706)" stroke="url(#g706)" stroke-width="2.0"/>
<path d="M894.30 294.59L894.30 316.78L901.30 293.25Z" fill="url(#g707)" stroke="url(#g707)" stroke-width="2.0"/>
<path d="M894.30 316.78L901.30 315.44L901.30 293.25Z" fill="url(#g708)" stroke="url(#g708)" stroke-width="2.0"/>
<path d="M901.30 293.25L901.30 315.44L908.30 291.91Z" fill="url(#g709)" stroke="url(#g709)" stroke-width="2.0"/>
<path d="M901.30 315.44L908.30 314.10L908.30 291.91Z" fill="url(#g710)" stroke="url(#g710)" stroke-width="2.0"/>
<path d="M908.30 291.91L908.30 314.10L915.30 290.56Z" fill="url(#g711)" stroke="url(#g711)" stroke-width="2.0"/>
<path d="M908.30 314.10L915.30 312.76L915.30 290.56Z" fill="url(#g712)" stroke="url(#g712)" stroke-width="2.0"/>
<path d="M915.30 290.56L915.30 312.76L922.30 289.22Z" fill="url(#g713)" stroke="url(#g713)" stroke-width="2.0"/>
<path d="M915.30 312.76L922.30 311.42L922.30 289.22Z" fill="url(#g714)" stroke="url(#g714)" stroke-width="2.0"/>
<path d="M922.30 289.22L922.30 311.42L929.30 287.88Z" fill="url(#g715)" stroke="url(#g715)" stroke-width="2.0"/>
<path d="M922.30 311.42L929.30 310.08L929.30 287.88Z" fill="url(#g716)" stroke="url(#g716)" stroke-width="2.0"/>
<path d="M929.30 287.88L929.30 310.08L936.30 286.54Z" fill="url(#g717)" stroke="url(#g717)" stroke-width="2.0"/>
<path d="M929.30 310.08L936.30 308.74L936.30 286.54Z" fill="url(#g718)" stroke="url(#g718)" stroke-width="2.0"/>
<path d="M936.30 286.54L936.30 308.74L943.30 285.20Z" fill="url(#g719)" stroke="url(#g719)" stroke-width="2.0"/>
<path d="M936.30 308.74L943.30 307.40L943.30 285.20Z" fill="url(#g720)" stroke="url(#g720)" stroke-width="2.0"/>
<path d="M943.30 285.20L943.30 307.40L950.30 283.85Z" fill="url(#g721)" stroke="url(#g721)" stroke-width="2.0"/>
<path d="M943.30 307.40L950.30 306.06L950.30 283.85Z" fill="url(#g722)" stroke="url(#g722)" stroke-width="2.0"/>
<path d="M950.30 283.85L950.30 306.06L957.30 282.51Z" fill="url(#g723)" stroke="url(#g723)" stroke-width="2.0"/>
<path d="M950.30 306.06L957.30 304.72L957.30 282.51Z" fill="url(#g724)" stroke="url(#g724)" stroke-width="2.0"/>
<path d="M957.30 282.51L957.30 304.72L964.30 281.17Z" fill="url(#g725)" stroke="url(#g725)" stroke-width="2.0"/>
<path d="M957.30 304.72L964.30 303.38L964.30 281.17Z" fill="url(#g726)" stroke="url(#g726)" stroke-width="2.0"/>
<path d="M964.30 281.17L964.30 303.38L971.30 279.83Z" fill="url(#g727)" stroke="url(#g727)" stroke-width="2.0"/>
<path d="M964.30 303.38L971.30 302.04L971.30 279.83Z" fill="url(#g728)" stroke="url(#g728)" stroke-width="2.0"/>
<path d="M971.30 279.83L971.30 302.04L978.30 278.49Z" fill="url(#g729)" stroke="url(#g729)" stroke-width="2.0"/>
<path d="M971.30 302.04L978.30 300.70L978.30 278.49Z" fill="url(#g730)" stroke="url(#g730)" stroke-width="2.0"/>
<path d="M978.30 278.49L978.30 300.70L985.30 277.14Z" fill="url(#g731)" stroke="url(#g731)" stroke-width="2.0"/>
<path d="M978.30 300.70L985.30 299.36L985.30 277.14Z" fill="url(#g732)" stroke="url(#g732)" stroke-width="2.0"/>
<path d="M985.30 277.14L985.30 299.36L992.30 275.80Z" fill="url(#g733)" stroke="url(#g733)" stroke-width="2.0"/>
<path d="M985.30 299.36L992.30 298.02L992.30 275.80Z" fill="url(#g734)" stroke="url(#g734)" stroke-width="2.0"/>
<path d="M992.30 275.80L992.30 298.02L999.30 274.46Z" fill="url(#g735)" stroke="url(#g735)" stroke-width="2.0"/>
<path d="M992.30 298.02L999.30 296.68L999.30 274.46Z" fill="url(#g736)" stroke="url(#g736)" stroke-width="2.0"/>
<path d="M999.30 274.46L999.30 296.68L1006.30 273.12Z" fill="#000093" stroke="#000093" stroke-width="2.0"/>
<path d="M999.30 296.68L1006.30 295.34L1006.30 273.12Z" fill="#000093" stroke="#000093" stroke-width="2.0"/>
<path d="M1006.30 273.12L1006.30 295.34L1013.30 271.78Z" fill="#000093" stroke="#000093" stroke-width="2.0"/>
<path d="M1006.30 295.34L1013.30 294.00L1013.30 271.78Z" fill="#000093" stroke="#000093" stroke-width="2.0"/>
<path d="M1013.30 271.78L1013.30 294.00L1018.70 270.74Z" fill="#000093" stroke="#000093" stroke-width="2.0"/>
<path d="M1013.30 294.00L1018.70 292.97L1018.70 270.74Z" fill="#000093" stroke="#000093" stroke-width="2.0"/>
</g>
<g clip-path="url(#c737)">
<path d="M566.70 563.21L566.70 529.00L573.70 561.72Z" fill="url(#g738)" stroke="url(#g738)" stroke-width="2.0"/>
<path d="M566.70 529.00L573.70 527.53L573.70 561.72Z" fill="url(#g739)" stroke="url(#g739)" stroke-width="2.0"/>
<path d="M573.70 561.72L573.70 527.53L580.70 560.22Z" fill="url(#g740)" stroke="url(#g740)" stroke-width="2.0"/>
<path d="M573.70 527.53L580.70 526.06L580.70 560.22Z" fill="url(#g741)" stroke="url(#g741)" stroke-width="2.0"/>
<path d="M580.70 560.22L580.70 526.06L587.70 558.72Z" fill="url(#g742)" stroke="url(#g742)" stroke-width="2.0"/>
<path d="M580.70 526.06L587.70 524.59L587.70 558.72Z" fill="url(#g743)" stroke="url(#g743)" stroke-width="2.0"/>
<path d="M587.70 558.72L587.70 524.59L594.70 557.23Z" fill="url(#g744)" stroke="url(#g744)" stroke-width="2.0"/>
<path d="M587.70 524.59L594.70 523.12L594.70 557.23Z" fill="url(#g745)" stroke="url(#g745)" stroke-width="2.0"/>
<path d="M594.70 557.23L594.70 523.12L601.70 555.73Z" fill="url(#g746)" stroke="url(#g746)" stroke-width="2.0"/>
<path d="M594.70 523.12L601.70 521.65L601.70 555.73Z" fill="url(#g747)" stroke="url(#g747)" stroke-width="2.0"/>
<path d="M601.70 555.73L601.70 521.65L608.70 554.23Z" fill="url(#g748)" stroke="url(#g748)" stroke-width="2.0"/>
<path d="M601.70 521.65L608.70 520.18L608.70 554.23Z" fill="url(#g749)" stroke="url(#g749)" stroke-width="2.0"/>
<path d="M608.70 554.23L608.70 520.18L615.70 552.73Z" fill="url(#g750)" stroke="url(#g750)" stroke-width="2.0"/>
<path d="M608.70 520.18L615.70 518.71L615.70 552.73Z" fill="url(#g751)" stroke="url(#g751)" stroke-width="2.0"/>
<path d="M615.70 552.73L615.70 518.71L622.70 551.24Z" fill="url(#g752)" stroke="url(#g752)" stroke-width="2.0"/>
<path d="M615.70 518.71L622.70 517.24L622.70 551.24Z" fill="url(#g753)" stroke="url(#g753)" stroke-width="2.0"/>
<path d="M622.70 551.24L622.70 517.24L629.70 549.74Z" fill="url(#g754)" stroke="url(#g754)" stroke-width="2.0"/>
<path d="M622.70 517.24L629.70 515.77L629.70 549.74Z" fill="url(#g755)" stroke="url(#g755)" stroke-width="2.0"/>
<path d="M629.70 549.74L629.70 515.77L636.70 548.24Z" fill="url(#g756)" stroke="url(#g756)" stroke-width="2.0"/>
<path d="M629.70 515.77L636.70 514.30L636.70 548.24Z" fill="url(#g757)" stroke="url(#g757)" stroke-width="2.0"/>
<path d="M636.70 548.24L636.70 514.30L643.70 546.74Z" fill="url(#g758)" stroke="url(#g758)" stroke-width="2.0"/>
<path d="M636.70 514.30L643.70 512.83L643.70 546.74Z" fill="url(#g759)" stroke="url(#g759)" stroke-width="2.0"/>
<path d="M643.70 546.74L643.70 512.83L650.70 545.25Z" fill="url(#g760)" stroke="url(#g760)" stroke-width="2.0"/>
<path d="M643.70 512.83L650.70 511.36L650.70 545.25Z" fill="url(#g761)" stroke="url(#g761)" stroke-width="2.0"/>
<path d="M650.70 545.25L650.70 511.36L657.70 543.75Z" fill="url(#g762)" stroke="url(#g762)" stroke-width="2.0"/>
<path d="M650.70 511.36L657.70 509.89L657.70 543.75Z" fill="url(#g763)" stroke="url(#g763)" stroke-width="2.0"/>
<path d="M657.70 543.75L657.70 509.89L664.70 542.25Z" fill="url(#g764)" stroke="url(#g764)" stroke-width="2.0"/>
<path d="M657.70 509.89L664.70 508.42L664.70 542.25Z" fill="url(#g765)" stroke="url(#g765)" stroke-width="2.0"/>
<path d="M664.70 542.25L664.70 508.42L671.70 540.75Z" fill="url(#g766)" stroke="url(#g766)" stroke-width="2.0"/>
<path d="M664.70 508.42L671.70 506.95L671.70 540.75Z" fill="url(#g767)" stroke="url(#g767)" stroke-width="2.0"/>
<path d="M671.70 540.75L671.70 506.95L678.70 539.26Z" fill="url(#g768)" stroke="url(#g768)" stroke-width="2.0"/>
<path d="M671.70 506.95L678.70 505.48L678.70 539.26Z" fill="url(#g769)" stroke="url(#g769)" stroke-width="2.0"/>
<path d="M678.70 539.26L678.70 505.48L685.70 537.76Z" fill="url(#g770)" stroke="url(#g770)" stroke-width="2.0"/>
<path d="M678.70 505.48L685.70 504.01L685.70 537.76Z" fill="url(#g771)" stroke="url(#g771)" stroke-width="2.0"/>
<path d="M685.70 537.76L685.70 504.01L692.70 536.26Z" fill="url(#g772)" stroke="url(#g772)" stroke-width="2.0"/>
<path d="M685.70 504.01L692.70 502.54L692.70 536.26Z" fill="url(#g773)" stroke="url(#g773)" stroke-width="2.0"/>
<path d="M692.70 536.26L692.70 502.54L699.70 534.76Z" fill="url(#g774)" stroke="url(#g774)" stroke-width="2.0"/>
<path d="M692.70 502.54L699.70 501.07L699.70 534.76Z" fill="url(#g775)" stroke="url(#g775)" stroke-width="2.0"/>
<path d="M699.70 534.76L699.70 501.07L706.70 533.27Z" fill="url(#g776)" stroke="url(#g776)" stroke-width="2.0"/>
<path d="M699.70 501.07L706.70 499.60L706.70 533.27Z" fill="url(#g777)" stroke="url(#g777)" stroke-width="2.0"/>
<path d="M706.70 533.27L706.70 499.60L713.70 531.77Z" fill="url(#g778)" stroke="url(#g778)" stroke-width="2.0"/>
<path d="M706.70 499.60L713.70 498.13L713.70 531.77Z" fill="url(#g779)" stroke="url(#g779)" stroke-width="2.0"/>
<path d="M713.70 531.77L713.70 498.13L720.70 530.27Z" fill="url(#g780)" stroke="url(#g780)" stroke-width="2.0"/>
<path d="M713.70 498.13L720.70 496.66L720.70 530.27Z" fill="url(#g781)" stroke="url(#g781)" stroke-width="2.0"/>
<path d="M720.70 530.27L720.70 496.66L727.70 528.78Z" fill="url(#g782)" stroke="url(#g782)" stroke-width="2.0"/>
<path d="M720.70 496.66L727.70 495.19L727.70 528.78Z" fill="url(#g783)" stroke="url(#g783)" stroke-width="2.0"/>
<path d="M727.70 528.78L727.70 495.19L734.70 527.28Z" fill="url(#g784)" stroke="url(#g784)" stroke-width="2.0"/>
<path d="M727.70 495.19L734.70 493.72L734.70 527.28Z" fill="url(#g785)" stroke="url(#g785)" stroke-width="2.0"/>
<path d="M734.70 527.28L734.70 493.72L741.70 525.78Z" fill="url(#g786)" stroke="url(#g786)" stroke-width="2.0"/>
<path d="M734.70 493.72L741.70 492.25L741.70 525.78Z" fill="url(#g787)" stroke="url(#g787)" stroke-width="2.0"/>
<path d="M741.70 525.78L741.70 492.25L748.70 524.28Z" fill="url(#g788)" stroke="url(#g788)" stroke-width="2.0"/>
<path d="M741.70 492.25L748.70 490.78L748.70 524.28Z" fill="url(#g789)" stroke="url(#g789)" stroke-width="2.0"/>
<path d="M748.70 524.28L748.70 490.78L755.70 522.79Z" fill="url(#g790)" stroke="url(#g790)" stroke-width="2.0"/>
<path d="M748.70 490.78L755.70 489.31L755.70 522.79Z" fill="url(#g791)" stroke="url(#g791)" stroke-width="2.0"/>
<path d="M755.70 522.79L755.70 489.31L762.70 521.29Z" fill="url(#g792)" stroke="url(#g792)" stroke-width="2.0"/>
<path d="M755.70 489.31L762.70 487.84L762.70 521.29Z" fill="url(#g793)" stroke="url(#g793)" stroke-width="2.0"/>
<path d="M762.70 521.29L762.70 487.84L769.70 519.79Z" fill="url(#g794)" stroke="url(#g794)" stroke-width="2.0"/>
<path d="M762.70 487.84L769.70 486.37L769.70 519.79Z" fill="url(#g795)" stroke="url(#g795)" stroke-width="2.0"/>
<path d="M769.70 519.79L769.70 486.37L776.70 518.29Z" fill="url(#g796)" stroke="url(#g796)" stroke-width="2.0"/>
<path d="M769.70 486.37L776.70 484.90L776.70 518.29Z" fill="url(#g797)" stroke="url(#g797)" stroke-width="2.0"/>
<path d="M776.70 518.29L776.70 484.90L783.70 516.80Z" fill="url(#g798)" stroke="url(#g798)" stroke-width="2.0"/>
<path d="M776.70 484.90L783.70 483.43L783.70 516.80Z" fill="url(#g799)" stroke="url(#g799)" stroke-width="2.0"/>
<path d="M783.70 516.80L783.70 483.43L790.70 515.30Z" fill="url(#g800)" stroke="url(#g800)" stroke-width="2.0"/>
<path d="M783.70 483.43L790.70 481.96L790.70 515.30Z" fill="url(#g801)" stroke="url(#g801)" stroke-width="2.0"/>
<path d="M790.70 515.30L790.70 481.96L797.70 513.80Z" fill="url(#g802)" stroke="url(#g802)" stroke-width="2.0"/>
<path d="M790.70 481.96L797.70 480.49L797.70 513.80Z" fill="url(#g803)" stroke="url(#g803)" stroke-width="2.0"/>
<path d="M797.70 513.80L797.70 480.49L804.70 512.30Z" fill="url(#g804)" stroke="url(#g804)" stroke-width="2.0"/>
<path d="M797.70 480.49L804.70 479.02L804.70 512.30Z" fill="url(#g805)" stroke="url(#g805)" stroke-width="2.0"/>
<path d="M804.70 512.30L804.70 479.02L811.70 510.81Z" fill="url(#g806)" stroke="url(#g806)" stroke-width="2.0"/>
<path d="M804.70 479.02L811.70 477.55L811.70 510.81Z" fill="url(#g807)" stroke="url(#g807)" stroke-width="2.0"/>
<path d="M811.70 510.81L811.70 477.55L818.70 509.31Z" fill="url(#g808)" stroke="url(#g808)" stroke-width="2.0"/>
<path d="M811.70 477.55L818.70 476.07L818.70 509.31Z" fill="url(#g809)" stroke="url(#g809)" stroke-width="2.0"/>
<path d="M818.70 509.31L818.70 476.07L825.70 507.81Z" fill="url(#g810)" stroke="url(#g810)" stroke-width="2.0"/>
<path d="M818.70 476.07L825.70 474.60L825.70 507.81Z" fill="url(#g811)" stroke="url(#g811)" stroke-width="2.0"/>
<path d="M825.70 507.81L825.70 474.60L832.70 506.31Z" fill="url(#g812)" stroke="url(#g812)" stroke-width="2.0"/>
<path d="M825.70 474.60L832.70 473.13L832.70 506.31Z" fill="url(#g813)" stroke="url(#g813)" stroke-width="2.0"/>
<path d="M832.70 506.31L832.70 473.13L839.70 504.82Z" fill="url(#g814)" stroke="url(#g814)" stroke-width="2.0"/>
<path d="M832.70 473.13L839.70 471.66L839.70 504.82Z" fill="url(#g815)" stroke="url(#g815)" stroke-width="2.0"/>
<path d="M839.70 504.82L839.70 471.66L846.70 503.32Z" fill="url(#g816)" stroke="url(#g816)" stroke-width="2.0"/>
<path d="M839.70 471.66L846.70 470.19L846.70 503.32Z" fill="url(#g817)" stroke="url(#g817)" stroke-width="2.0"/>
<path d="M846.70 503.32L846.70 470.19L853.70 501.82Z" fill="url(#g818)" stroke="url(#g818)" stroke-width="2.0"/>
<path d="M846.70 470.19L853.70 468.72L853.70 501.82Z" fill="url(#g819)" stroke="url(#g819)" stroke-width="2.0"/>
<path d="M853.70 501.82L853.70 468.72L860.70 500.33Z" fill="url(#g820)" stroke="url(#g820)" stroke-width="2.0"/>
<path d="M853.70 468.72L860.70 467.25L860.70 500.33Z" fill="url(#g821)" stroke="url(#g821)" stroke-width="2.0"/>
<path d="M860.70 500.33L860.70 467.25L867.70 498.83Z" fill="url(#g822)" stroke="url(#g822)" stroke-width="2.0"/>
<path d="M860.70 467.25L867.70 465.78L867.70 498.83Z" fill="url(#g823)" stroke="url(#g823)" stroke-width="2.0"/>
<path d="M867.70 498.83L867.70 465.78L874.70 497.33Z" fill="url(#g824)" stroke="url(#g824)" stroke-width="2.0"/>
<path d="M867.70 465.78L874.70 464.31L874.70 497.33Z" fill="url(#g825)" stroke="url(#g825)" stroke-width="2.0"/>
<path d="M874.70 497.33L874.70 464.31L881.70 495.83Z" fill="url(#g826)" stroke="url(#g826)" stroke-width="2.0"/>
<path d="M874.70 464.31L881.70 462.84L881.70 495.83Z" fill="url(#g827)" stroke="url(#g827)" stroke-width="2.0"/>
<path d="M881.70 495.83L881.70 462.84L888.70 494.34Z" fill="url(#g828)" stroke="url(#g828)" stroke-width="2.0"/>
<path d="M881.70 462.84L888.70 461.37L888.70 494.34Z" fill="url(#g829)" stroke="url(#g829)" stroke-width="2.0"/>
<path d="M888.70 494.34L888.70 461.37L895.70 492.84Z" fill="url(#g830)" stroke="url(#g830)" stroke-width="2.0"/>
<path d="M888.70 461.37L895.70 459.90L895.70 492.84Z" fill="url(#g831)" stroke="url(#g831)" stroke-width="2.0"/>
<path d="M895.70 492.84L895.70 459.90L902.70 491.34Z" fill="url(#g832)" stroke="url(#g832)" stroke-width="2.0"/>
<path d="M895.70 459.90L902.70 458.43L902.70 491.34Z" fill="url(#g833)" stroke="url(#g833)" stroke-width="2.0"/>
<path d="M902.70 491.34L902.70 458.43L909.70 489.84Z" fill="url(#g834)" stroke="url(#g834)" stroke-width="2.0"/>
<path d="M902.70 458.43L909.70 456.96L909.70 489.84Z" fill="url(#g835)" stroke="url(#g835)" stroke-width="2.0"/>
<path d="M909.70 489.84L909.70 456.96L916.70 488.35Z" fill="url(#g836)" stroke="url(#g836)" stroke-width="2.0"/>
<path d="M909.70 456.96L916.70 455.49L916.70 488.35Z" fill="url(#g837)" stroke="url(#g837)" stroke-width="2.0"/>
<path d="M916.70 488.35L916.70 455.49L923.70 486.85Z" fill="url(#g838)" stroke="url(#g838)" stroke-width="2.0"/>
<path d="M916.70 455.49L923.70 454.02L923.70 486.85Z" fill="url(#g839)" stroke="url(#g839)" stroke-width="2.0"/>
<path d="M923.70 486.85L923.70 454.02L930.70 485.35Z" fill="url(#g840)" stroke="url(#g840)" stroke-width="2.0"/>
<path d="M923.70 454.02L930.70 452.55L930.70 485.35Z" fill="url(#g841)" stroke="url(#g841)" stroke-width="2.0"/>
<path d="M930.70 485.35L930.70 452.55L937.70 483.85Z" fill="url(#g842)" stroke="url(#g842)" stroke-width="2.0"/>
<path d="M930.70 452.55L937.70 451.08L937.70 483.85Z" fill="url(#g843)" stroke="url(#g843)" stroke-width="2.0"/>
<path d="M937.70 483.85L937.70 451.08L944.70 482.36Z" fill="url(#g844)" stroke="url(#g844)" stroke-width="2.0"/>
<path d="M937.70 451.08L944.70 449.61L944.70 482.36Z" fill="url(#g845)" stroke="url(#g845)" stroke-width="2.0"/>
<path d="M944.70 482.36L944.70 449.61L951.70 480.86Z" fill="url(#g846)" stroke="url(#g846)" stroke-width="2.0"/>
<path d="M944.70 449.61L951.70 448.14L951.70 480.86Z" fill="url(#g847)" stroke="url(#g847)" stroke-width="2.0"/>
<path d="M951.70 480.86L951.70 448.14L958.70 479.36Z" fill="url(#g848)" stroke="url(#g848)" stroke-width="2.0"/>
<path d="M951.70 448.14L958.70 446.67L958.70 479.36Z" fill="url(#g849)" stroke="url(#g849)" stroke-width="2.0"/>
<path d="M958.70 479.36L958.70 446.67L965.70 477.86Z" fill="url(#g850)" stroke="url(#g850)" stroke-width="2.0"/>
<path d="M958.70 446.67L965.70 445.20L965.70 477.86Z" fill="url(#g851)" stroke="url(#g851)" stroke-width="2.0"/>
<path d="M965.70 477.86L965.70 445.20L972.70 476.37Z" fill="url(#g852)" stroke="url(#g852)" stroke-width="2.0"/>
<path d="M965.70 445.20L972.70 443.73L972.70 476.37Z" fill="url(#g853)" stroke="url(#g853)" stroke-width="2.0"/>
<path d="M972.70 476.37L972.70 443.73L979.70 474.87Z" fill="url(#g854)" stroke="url(#g854)" stroke-width="2.0"/>
<path d="M972.70 443.73L979.70 442.26L979.70 474.87Z" fill="url(#g855)" stroke="url(#g855)" stroke-width="2.0"/>
<path d="M979.70 474.87L979.70 442.26L986.70 473.37Z" fill="url(#g856)" stroke="url(#g856)" stroke-width="2.0"/>
<path d="M979.70 442.26L986.70 440.79L986.70 473.37Z" fill="url(#g857)" stroke="url(#g857)" stroke-width="2.0"/>
<path d="M986.70 473.37L986.70 440.79L993.70 471.88Z" fill="url(#g858)" stroke="url(#g858)" stroke-width="2.0"/>
<path d="M986.70 440.79L993.70 439.32L993.70 471.88Z" fill="url(#g859)" stroke="url(#g859)" stroke-width="2.0"/>
<path d="M993.70 471.88L993.70 439.32L1000.70 470.38Z" fill="url(#g860)" stroke="url(#g860)" stroke-width="2.0"/>
<path d="M993.70 439.32L1000.70 437.85L1000.70 470.38Z" fill="url(#g861)" stroke="url(#g861)" stroke-width="2.0"/>
<path d="M1000.70 470.38L1000.70 437.85L1007.70 468.88Z" fill="url(#g862)" stroke="url(#g862)" stroke-width="2.0"/>
<path d="M1000.70 437.85L1007.70 436.38L1007.70 468.88Z" fill="url(#g863)" stroke="url(#g863)" stroke-width="2.0"/>
<path d="M1007.70 468.88L1007.70 436.38L1014.70 467.38Z" fill="url(#g864)" stroke="url(#g864)" stroke-width="2.0"/>
<path d="M1007.70 436.38L1014.70 434.91L1014.70 467.38Z" fill="url(#g865)" stroke="url(#g865)" stroke-width="2.0"/>
<path d="M1014.70 467.38L1014.70 434.91L1021.70 465.89Z" fill="url(#g866)" stroke="url(#g866)" stroke-width="2.0"/>
<path d="M1014.70 434.91L1021.70 433.44L1021.70 465.89Z" fill="url(#g867)" stroke="url(#g867)" stroke-width="2.0"/>
<path d="M1021.70 465.89L1021.70 433.44L1028.70 464.39Z" fill="url(#g868)" stroke="url(#g868)" stroke-width="2.0"/>
<path d="M1021.70 433.44L1028.70 431.97L1028.70 464.39Z" fill="url(#g869)" stroke="url(#g869)" stroke-width="2.0"/>
<path d="M1028.70 464.39L1028.70 431.97L1035.70 462.89Z" fill="url(#g870)" stroke="url(#g870)" stroke-width="2.0"/>
<path d="M1028.70 431.97L1035.70 430.50L1035.70 462.89Z" fill="url(#g871)" stroke="url(#g871)" stroke-width="2.0"/>
<path d="M1035.70 462.89L1035.70 430.50L1042.70 461.39Z" fill="url(#g872)" stroke="url(#g872)" stroke-width="2.0"/>
<path d="M1035.70 430.50L1042.70 429.03L1042.70 461.39Z" fill="url(#g873)" stroke="url(#g873)" stroke-width="2.0"/>
<path d="M1042.70 461.39L1042.70 429.03L1049.70 459.90Z" fill="url(#g874)" stroke="url(#g874)" stroke-width="2.0"/>
<path d="M1042.70 429.03L1049.70 427.56L1049.70 459.90Z" fill="url(#g875)" stroke="url(#g875)" stroke-width="2.0"/>
<path d="M1049.70 459.90L1049.70 427.56L1056.70 458.40Z" fill="url(#g876)" stroke="url(#g876)" stroke-width="2.0"/>
<path d="M1049.70 427.56L1056.70 426.09L1056.70 458.40Z" fill="url(#g877)" stroke="url(#g877)" stroke-width="2.0"/>
<path d="M1056.70 458.40L1056.70 426.09L1063.70 456.90Z" fill="url(#g878)" stroke="url(#g878)" stroke-width="2.0"/>
<path d="M1056.70 426.09L1063.70 424.62L1063.70 456.90Z" fill="url(#g879)" stroke="url(#g879)" stroke-width="2.0"/>
<path d="M1063.70 456.90L1063.70 424.62L1070.70 455.40Z" fill="url(#g880)" stroke="url(#g880)" stroke-width="2.0"/>
<path d="M1063.70 424.62L1070.70 423.15L1070.70 455.40Z" fill="url(#g881)" stroke="url(#g881)" stroke-width="2.0"/>
<path d="M1070.70 455.40L1070.70 423.15L1077.70 453.91Z" fill="url(#g882)" stroke="url(#g882)" stroke-width="2.0"/>
<path d="M1070.70 423.15L1077.70 421.68L1077.70 453.91Z" fill="url(#g883)" stroke="url(#g883)" stroke-width="2.0"/>
<path d="M1077.70 453.91L1077.70 421.68L1084.70 452.41Z" fill="url(#g884)" stroke="url(#g884)" stroke-width="2.0"/>
<path d="M1077.70 421.68L1084.70 420.21L1084.70 452.41Z" fill="url(#g885)" stroke="url(#g885)" stroke-width="2.0"/>
<path d="M1084.70 452.41L1084.70 420.21L1091.70 450.91Z" fill="url(#g886)" stroke="url(#g886)" stroke-width="2.0"/>
<path d="M1084.70 420.21L1091.70 418.74L1091.70 450.91Z" fill="url(#g887)" stroke="url(#g887)" stroke-width="2.0"/>
<path d="M1091.70 450.91L1091.70 418.74L1098.70 449.41Z" fill="url(#g888)" stroke="url(#g888)" stroke-width="2.0"/>
<path d="M1091.70 418.74L1098.70 417.27L1098.70 449.41Z" fill="url(#g889)" stroke="url(#g889)" stroke-width="2.0"/>
<path d="M1098.70 449.41L1098.70 417.27L1105.70 447.92Z" fill="url(#g890)" stroke="url(#g890)" stroke-width="2.0"/>
<path d="M1098.70 417.27L1105.70 415.80L1105.70 447.92Z" fill="url(#g891)" stroke="url(#g891)" stroke-width="2.0"/>
<path d="M1105.70 447.92L1105.70 415.80L1112.70 446.42Z" fill="url(#g892)" stroke="url(#g892)" stroke-width="2.0"/>
<path d="M1105.70 415.80L1112.70 414.33L1112.70 446.42Z" fill="url(#g893)" stroke="url(#g893)" stroke-width="2.0"/>
<path d="M1112.70 446.42L1112.70 414.33L1119.70 444.92Z" fill="url(#g894)" stroke="url(#g894)" stroke-width="2.0"/>
<path d="M1112.70 414.33L1119.70 412.86L1119.70 444.92Z" fill="url(#g895)" stroke="url(#g895)" stroke-width="2.0"/>
<path d="M1119.70 444.92L1119.70 412.86L1126.70 443.43Z" fill="url(#g896)" stroke="url(#g896)" stroke-width="2.0"/>
<path d="M1119.70 412.86L1126.70 411.39L1126.70 443.43Z" fill="url(#g897)" stroke="url(#g897)" stroke-width="2.0"/>
<path d="M1126.70 443.43L1126.70 411.39L1133.70 441.93Z" fill="url(#g898)" stroke="url(#g898)" stroke-width="2.0"/>
<path d="M1126.70 411.39L1133.70 409.92L1133.70 441.93Z" fill="url(#g899)" stroke="url(#g899)" stroke-width="2.0"/>
<path d="M1133.70 441.93L1133.70 409.92L1140.70 440.43Z" fill="url(#g900)" stroke="url(#g900)" stroke-width="2.0"/>
<path d="M1133.70 409.92L1140.70 408.45L1140.70 440.43Z" fill="url(#g901)" stroke="url(#g901)" stroke-width="2.0"/>
<path d="M1140.70 440.43L1140.70 408.45L1147.70 438.93Z" fill="url(#g902)" stroke="url(#g902)" stroke-width="2.0"/>
<path d="M1140.70 408.45L1147.70 406.98L1147.70 438.93Z" fill="#000093" stroke="#000093" stroke-width="2.0"/>
<path d="M1147.70 438.93L1147.70 406.98L1154.70 437.44Z" fill="#000093" stroke="#000093" stroke-width="2.0"/>
<path d="M1147.70 406.98L1154.70 405.51L1154.70 437.44Z" fill="#000093" stroke="#000093" stroke-width="2.0"/>
<path d="M1154.70 437.44L1154.70 405.51L1161.70 435.94Z" fill="#000093" stroke="#000093" stroke-width="2.0"/>
<path d="M1154.70 405.51L1161.70 404.04L1161.70 435.94Z" fill="#000093" stroke="#000093" stroke-width="2.0"/>
<path d="M1161.70 435.94L1161.70 404.04L1168.30 434.53Z" fill="#000093" stroke="#000093" stroke-width="2.0"/>
<path d="M1161.70 404.04L1168.30 402.66L1168.30 434.53Z" fill="#000093" stroke="#000093" stroke-width="2.0"/>
</g>
</svg>
</div>
</body>
</html>
